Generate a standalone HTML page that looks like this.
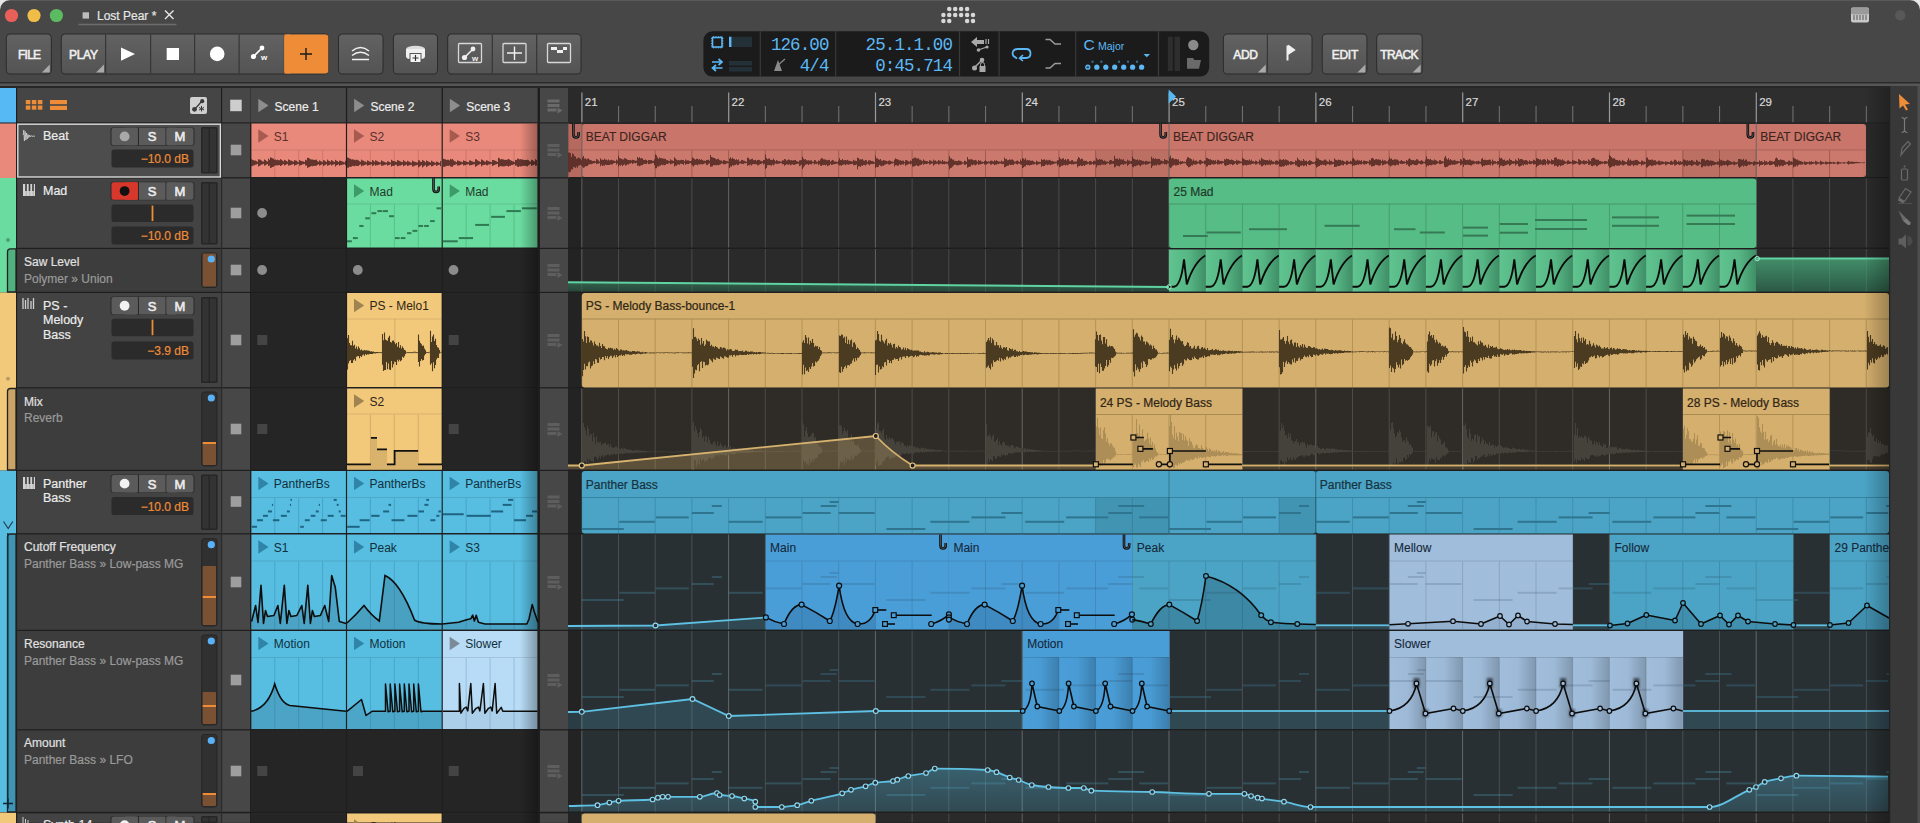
<!DOCTYPE html><html><head><meta charset="utf-8"><style>
html,body{margin:0;padding:0;background:#2a2a2a;width:1920px;height:823px;overflow:hidden}
svg{display:block;font-family:"Liberation Sans", sans-serif}
</style></head><body><svg width="1920" height="823" viewBox="0 0 1920 823">
<rect x="0" y="0" width="1920" height="823" fill="#2a2a2a" />
<rect x="0" y="0" width="1920" height="83" fill="#474747" />
<rect x="0" y="0" width="1920" height="1" fill="#5a5a5a" />
<path d="M0 0 L10 0 A10 10 0 0 0 0 10 Z" fill="#e6e6e6"/><path d="M1920 0 L1910 0 A10 10 0 0 1 1920 10 Z" fill="#e6e6e6"/>
<rect x="0" y="82" width="1920" height="1.5" fill="#2b2b2b" />
<rect x="0" y="83.5" width="1920" height="2.5" fill="#565656" />
<rect x="0" y="86" width="1920" height="2" fill="#262626" />
<circle cx="11.5" cy="15.5" r="6.6" fill="#e9605a"/>
<circle cx="34" cy="15.5" r="6.6" fill="#f1bd49"/>
<circle cx="56.4" cy="15.5" r="6.6" fill="#5bbb60"/>
<rect x="82.6" y="12.3" width="6.4" height="6.3" fill="#bdbdbd" />
<text x="97" y="20.3" font-size="12" fill="#e6e6e6" font-weight="normal" text-anchor="start" stroke="#e6e6e6" stroke-width="0.2" >Lost Pear *</text>
<path d="M165 10.5 L173.5 19 M173.5 10.5 L165 19" stroke="#e8e8e8" stroke-width="1.4"/>
<rect x="78.5" y="23.7" width="98" height="1.6" fill="#6c6c6c" />
<circle cx="949.25" cy="9.06" r="2.25" fill="#d8d8d8"/>
<circle cx="955.2" cy="9.06" r="2.25" fill="#d8d8d8"/>
<circle cx="961.1" cy="9.06" r="2.25" fill="#d8d8d8"/>
<circle cx="967.1" cy="9.06" r="2.25" fill="#d8d8d8"/>
<circle cx="943.4" cy="15" r="2.25" fill="#d8d8d8"/>
<circle cx="949.25" cy="15" r="2.25" fill="#d8d8d8"/>
<circle cx="955.2" cy="15" r="2.25" fill="#d8d8d8"/>
<circle cx="961.1" cy="15" r="2.25" fill="#d8d8d8"/>
<circle cx="967.1" cy="15" r="2.25" fill="#d8d8d8"/>
<circle cx="973" cy="15" r="2.25" fill="#d8d8d8"/>
<circle cx="943.4" cy="20.9" r="2.25" fill="#d8d8d8"/>
<circle cx="949.25" cy="20.9" r="2.25" fill="#d8d8d8"/>
<circle cx="967.1" cy="20.9" r="2.25" fill="#d8d8d8"/>
<circle cx="973" cy="20.9" r="2.25" fill="#d8d8d8"/>
<rect x="1851" y="7.5" width="18" height="15" fill="#c9c9c9" rx="2"/>
<rect x="1851" y="7.5" width="18" height="7" fill="#9a9a9a" rx="2"/>
<rect x="1853.5" y="15" width="1" height="5" fill="#555" />
<rect x="1856.5" y="15" width="1" height="5" fill="#555" />
<rect x="1859.5" y="15" width="1" height="5" fill="#555" />
<rect x="1862.5" y="15" width="1" height="5" fill="#555" />
<rect x="1865.5" y="15" width="1" height="5" fill="#555" />
<circle cx="1900.3" cy="15.2" r="5.2" fill="#585858"/>
<defs>
<linearGradient id="bg" x1="0" y1="0" x2="0" y2="1"><stop offset="0" stop-color="#626262"/><stop offset="1" stop-color="#545454"/></linearGradient>
<linearGradient id="shR" x1="0" y1="0" x2="1" y2="0"><stop offset="0" stop-color="#000" stop-opacity="0"/><stop offset="1" stop-color="#000" stop-opacity="0.32"/></linearGradient>
<linearGradient id="fadeR" x1="0" y1="0" x2="1" y2="0"><stop offset="0" stop-color="#000" stop-opacity="0"/><stop offset="1" stop-color="#000" stop-opacity="0.25"/></linearGradient>
</defs>
<rect x="5.8" y="33.5" width="46.0" height="41" rx="4.5" fill="#2b2b2b"/>
<rect x="6.8" y="34.5" width="44.0" height="39" rx="3.5" fill="url(#bg)"/>
<path d="M49.8 64.5 L49.8 72.5 L41.8 72.5 Z" fill="#a9a9a9"/>
<text x="18" y="58.8" font-size="12" fill="#f0f0f0" font-weight="normal" text-anchor="start" stroke="#f0f0f0" stroke-width="0.55" letter-spacing="-0.75">FILE</text>
<rect x="60.8" y="33.5" width="268.0" height="41" rx="4.5" fill="#2b2b2b"/>
<rect x="61.8" y="34.5" width="266.0" height="39" rx="3.5" fill="url(#bg)"/>
<rect x="105" y="34.5" width="1.2" height="39" fill="#363636" />
<rect x="150" y="34.5" width="1.2" height="39" fill="#363636" />
<rect x="194" y="34.5" width="1.2" height="39" fill="#363636" />
<rect x="238.5" y="34.5" width="1.2" height="39" fill="#363636" />
<rect x="283.8" y="34.5" width="1.2" height="39" fill="#363636" />
<path d="M104.0 64.5 L104.0 72.5 L96.0 72.5 Z" fill="#a9a9a9"/>
<text x="69" y="58.8" font-size="12" fill="#f0f0f0" font-weight="normal" text-anchor="start" stroke="#f0f0f0" stroke-width="0.55" letter-spacing="-0.3">PLAY</text>
<path d="M121 47.4 L135 54.1 L121 60.8 Z" fill="#fff"/>
<rect x="166.7" y="48" width="12.3" height="12" fill="#fff" />
<circle cx="217.2" cy="53.9" r="7.3" fill="#fff"/>
<g transform="translate(251,45)"><path d="M2 12 L11 3" stroke="#fff" stroke-width="1.6"/><circle cx="2.5" cy="11.5" r="2.6" fill="#fff"/><circle cx="11" cy="3" r="2.4" fill="#fff"/><text x="10" y="15" font-size="8" fill="#fff" font-weight="bold">w</text></g>
<rect x="284.3" y="34.5" width="44" height="39" fill="#ee8c37" rx="3"/>
<rect x="284.3" y="34.5" width="6" height="39" fill="#ee8c37" />
<path d="M300 54 L312 54 M306 48 L306 60" stroke="#1a1a1a" stroke-width="1.4"/>
<rect x="338.0" y="33.5" width="45.5" height="41" rx="4.5" fill="#2b2b2b"/>
<rect x="339.0" y="34.5" width="43.5" height="39" rx="3.5" fill="url(#bg)"/>
<path d="M352 51 Q360.5 44 369 51 M352 55.5 Q360.5 49 369 55.5 M352 59.5 L369 59.5" stroke="#f2f2f2" stroke-width="1.5" fill="none"/>
<rect x="392.9" y="33.5" width="45.10000000000002" height="41" rx="4.5" fill="#2b2b2b"/>
<rect x="393.9" y="34.5" width="43.10000000000002" height="39" rx="3.5" fill="url(#bg)"/>
<ellipse cx="415.5" cy="49" rx="9.5" ry="3.2" fill="#dcdcdc"/><path d="M406 49 L406 56 Q406 59 410 59 L421 59 Q425 59 425 56 L425 49" fill="#f0f0f0"/><rect x="410" y="53.5" width="11" height="9" fill="#f5f5f5" stroke="#555" stroke-width="1"/><path d="M412.5 58 L418.5 58 M415.5 55 L415.5 61" stroke="#333" stroke-width="1.2"/>
<rect x="447.2" y="33.5" width="134.3" height="41" rx="4.5" fill="#2b2b2b"/>
<rect x="448.2" y="34.5" width="132.3" height="39" rx="3.5" fill="url(#bg)"/>
<rect x="491.7" y="34.5" width="1.2" height="39" fill="#363636" />
<rect x="536.1" y="34.5" width="1.2" height="39" fill="#363636" />
<rect x="458.5" y="43.5" width="23" height="19" fill="none" stroke="#d8d8d8" stroke-width="1.3" rx="1"/>
<g transform="translate(462,46)"><path d="M2 12 L11 3" stroke="#f0f0f0" stroke-width="1.6"/><circle cx="2.5" cy="11.5" r="2.6" fill="#f0f0f0"/><circle cx="11" cy="3" r="2.4" fill="#f0f0f0"/><text x="10" y="15" font-size="8" fill="#f0f0f0" font-weight="bold">w</text></g>
<rect x="503" y="43.5" width="23" height="19" fill="none" stroke="#d8d8d8" stroke-width="1.3" rx="1"/><path d="M507 53 L522 53 M514.5 46.5 L514.5 60" stroke="#f0f0f0" stroke-width="1.4"/>
<rect x="547.5" y="43.5" width="23" height="19" fill="none" stroke="#d8d8d8" stroke-width="1.3" rx="1"/><path d="M551 47 L557 47 L557 50 L551 50 Z M557 50 L563 50 L563 53 L557 53 Z M563 47 L567 47 L567 50 L563 50 Z" fill="#f0f0f0"/>
<rect x="703.4" y="31.3" width="505.8" height="45.3" rx="9" fill="#1b1b1b"/>
<rect x="759.7" y="31.3" width="1.2" height="45.3" fill="#3a3a3a" />
<rect x="835.1" y="31.3" width="1.2" height="45.3" fill="#3a3a3a" />
<rect x="958.9" y="31.3" width="1.2" height="45.3" fill="#3a3a3a" />
<rect x="998.5" y="31.3" width="1.2" height="45.3" fill="#3a3a3a" />
<rect x="1075.1" y="31.3" width="1.2" height="45.3" fill="#3a3a3a" />
<rect x="1157.9" y="31.3" width="1.2" height="45.3" fill="#3a3a3a" />
<rect x="712.5" y="37.5" width="9.5" height="9.5" fill="none" stroke="#5cb8f5" stroke-width="1.6"/>
<path d="M713.5 36 v1.5 M713.5 47 v1.5 M711 38.5 h1.5 M722 38.5 h1.5" stroke="#5cb8f5" stroke-width="0.8"/>
<path d="M716.0 36 v1.5 M716.0 47 v1.5 M711 41.0 h1.5 M722 41.0 h1.5" stroke="#5cb8f5" stroke-width="0.8"/>
<path d="M718.5 36 v1.5 M718.5 47 v1.5 M711 43.5 h1.5 M722 43.5 h1.5" stroke="#5cb8f5" stroke-width="0.8"/>
<path d="M721.0 36 v1.5 M721.0 47 v1.5 M711 46.0 h1.5 M722 46.0 h1.5" stroke="#5cb8f5" stroke-width="0.8"/>
<rect x="729" y="36.7" width="2.5" height="10.3" fill="#5cb8f5" />
<rect x="732" y="36.7" width="20" height="10.3" fill="#243038" />
<path d="M712 62 L722 62 M718.5 59 L722 62 L718.5 65 M722.5 68 L712.5 68 M716 65 L712.5 68 L716 71" stroke="#5cb8f5" stroke-width="1.7" fill="none"/>
<rect x="729" y="61" width="23" height="4.5" fill="#243038" />
<rect x="729" y="67" width="23" height="4.5" fill="#243038" />
<text x="828.5" y="50.2" font-family='"Liberation Mono", monospace' font-size="17.5" fill="#5cb8f5" text-anchor="end" letter-spacing="-0.9">126.00</text>
<text x="828.5" y="71.2" font-family='"Liberation Mono", monospace' font-size="17.5" fill="#5cb8f5" text-anchor="end" letter-spacing="-0.9">4/4</text>
<text x="952" y="50.2" font-family='"Liberation Mono", monospace' font-size="17.5" fill="#5cb8f5" text-anchor="end" letter-spacing="-0.9">25.1.1.00</text>
<text x="952" y="71.2" font-family='"Liberation Mono", monospace' font-size="17.5" fill="#5cb8f5" text-anchor="end" letter-spacing="-0.9">0:45.714</text>
<path d="M774 71 L778 60 L782 71 Z" fill="#8a8a8a"/><path d="M777 66 L785 59" stroke="#8a8a8a" stroke-width="1.2"/>
<path d="M971 42 L977 37 L977 47 Z M976 40 L984 40 L984 44 L976 44 Z" fill="#a9a9a9"/><path d="M986 39 v5 M988.5 39 v5" stroke="#a9a9a9" stroke-width="1.2"/><path d="M978 50 L987 47" stroke="#a9a9a9" stroke-width="1.2"/><circle cx="978.5" cy="50" r="1.8" fill="#a9a9a9"/><circle cx="987" cy="47" r="1.6" fill="#a9a9a9"/>
<path d="M974 68 L982 60" stroke="#a9a9a9" stroke-width="1.5"/><circle cx="974.5" cy="68" r="2.5" fill="#a9a9a9"/><circle cx="982" cy="60" r="2.3" fill="#a9a9a9"/><rect x="979.5" y="66" width="6" height="6" fill="#a9a9a9"/><path d="M980.5 66 v-1.5 a2 2 0 0 1 4 0 v1.5" stroke="#a9a9a9" fill="none" stroke-width="1"/>
<path d="M1017 58.5 L1013.5 56 Q1012 54 1013 51.5 Q1014 49 1018 49 L1026 49 Q1030.5 49 1030.5 53.5 Q1030.5 58 1026 58 L1020.5 58" stroke="#5cb8f5" stroke-width="1.8" fill="none"/><path d="M1023 55 L1019.5 58.2 L1023 61" stroke="#5cb8f5" stroke-width="1.6" fill="none"/>
<path d="M1045.5 39.5 L1050 39.5 L1055 44 L1061 44" stroke="#9a9a9a" stroke-width="1.5" fill="none"/><path d="M1045.5 68 L1050 68 L1055 63.5 L1061 63.5" stroke="#9a9a9a" stroke-width="1.5" fill="none"/>
<text x="1083.5" y="49.6" font-size="15.5" fill="#5cb8f5">C</text><text x="1098" y="50" font-size="10.5" fill="#5cb8f5">Major</text>
<path d="M1143.5 54 L1150 54 L1146.8 57.2 Z" fill="#5cb8f5"/>
<circle cx="1087.8" cy="67.2" r="2.6" fill="#5cb8f5"/>
<circle cx="1096.8" cy="67.2" r="2.6" fill="#5cb8f5"/>
<circle cx="1105.8" cy="67.2" r="2.6" fill="#5cb8f5"/>
<circle cx="1114.7" cy="67.2" r="2.6" fill="#5cb8f5"/>
<circle cx="1123.7" cy="67.2" r="2.6" fill="#5cb8f5"/>
<circle cx="1132.6" cy="67.2" r="2.6" fill="#5cb8f5"/>
<circle cx="1141.6" cy="67.2" r="2.6" fill="#5cb8f5"/>
<circle cx="1087.8" cy="67.2" r="1.3" fill="#2a4f66"/>
<circle cx="1092.5" cy="61.7" r="1.2" fill="#2f6a90"/>
<circle cx="1101.4" cy="61.7" r="1.2" fill="#2f6a90"/>
<circle cx="1119" cy="61.7" r="1.2" fill="#2f6a90"/>
<circle cx="1128" cy="61.7" r="1.2" fill="#2f6a90"/>
<circle cx="1137" cy="61.7" r="1.2" fill="#2f6a90"/>
<rect x="1167.8" y="36.7" width="5" height="34.3" fill="#2e2e2e" />
<rect x="1174.5" y="36.7" width="5.5" height="34.3" fill="#2e2e2e" />
<circle cx="1193.3" cy="45" r="5.2" fill="#8a8a8a"/><path d="M1187 58 L1193 58 L1194.5 60 L1201 60 L1199 68.7 L1187 68.7 Z" fill="#6a6a6a"/>
<rect x="1222.9" y="33.5" width="89.59999999999991" height="41" rx="4.5" fill="#2b2b2b"/>
<rect x="1223.9" y="34.5" width="87.59999999999991" height="39" rx="3.5" fill="url(#bg)"/>
<rect x="1266.8" y="34.5" width="1.2" height="39" fill="#363636" />
<path d="M1265.8 64.5 L1265.8 72.5 L1257.8 72.5 Z" fill="#a9a9a9"/>
<text x="1233.2" y="58.6" font-size="12" fill="#f0f0f0" font-weight="normal" text-anchor="start" stroke="#f0f0f0" stroke-width="0.55" letter-spacing="-0.3">ADD</text>
<path d="M1287.5 45.5 L1287.5 60.5 M1288 45.5 L1294 50 L1288 54" stroke="#f0f0f0" stroke-width="2" fill="#f0f0f0"/>
<rect x="1321.8" y="33.5" width="45.600000000000136" height="41" rx="4.5" fill="#2b2b2b"/>
<rect x="1322.8" y="34.5" width="43.600000000000136" height="39" rx="3.5" fill="url(#bg)"/>
<path d="M1365.4 64.5 L1365.4 72.5 L1357.4 72.5 Z" fill="#a9a9a9"/>
<text x="1331.8" y="58.6" font-size="12" fill="#f0f0f0" font-weight="normal" text-anchor="start" stroke="#f0f0f0" stroke-width="0.55" letter-spacing="-0.3">EDIT</text>
<rect x="1376.2" y="33.5" width="46.5" height="41" rx="4.5" fill="#2b2b2b"/>
<rect x="1377.2" y="34.5" width="44.5" height="39" rx="3.5" fill="url(#bg)"/>
<path d="M1420.7 64.5 L1420.7 72.5 L1412.7 72.5 Z" fill="#a9a9a9"/>
<text x="1380.2" y="58.6" font-size="12" fill="#f0f0f0" font-weight="normal" text-anchor="start" stroke="#f0f0f0" stroke-width="0.55" letter-spacing="-0.6">TRACK</text>
<rect x="0" y="88" width="1920" height="35.5" fill="#2e2e2e" />
<rect x="0" y="88" width="16" height="35" fill="#56b9f4" />
<rect x="17" y="88" width="204" height="34.5" fill="#454545" />
<rect x="25.8" y="100" width="4.6" height="4.2" fill="#ee8c37" />
<rect x="31.8" y="100" width="4.6" height="4.2" fill="#ee8c37" />
<rect x="37.8" y="100" width="4.6" height="4.2" fill="#ee8c37" />
<rect x="25.8" y="105.5" width="4.6" height="4.2" fill="#ee8c37" />
<rect x="31.8" y="105.5" width="4.6" height="4.2" fill="#ee8c37" />
<rect x="37.8" y="105.5" width="4.6" height="4.2" fill="#ee8c37" />
<rect x="50" y="100" width="17" height="4.2" fill="#ee8c37" />
<rect x="50" y="105.8" width="17" height="4.2" fill="#ee8c37" />
<rect x="190" y="97" width="17" height="17" rx="2" fill="#cfcfcf"/>
<path d="M194.5 109.5 L202 101" stroke="#3a3a3a" stroke-width="1.2"/><circle cx="194.5" cy="109.3" r="2.4" fill="#3a3a3a"/><circle cx="202.2" cy="101.2" r="2.1" fill="#3a3a3a"/><path d="M201.5 106 v5.5 M199 107.5 l5 2.5 M199 110 l5 -2.5" stroke="#3a3a3a" stroke-width="1"/>
<rect x="221" y="88" width="1.2" height="35" fill="#1e1e1e" />
<rect x="222.2" y="88" width="28" height="34.5" fill="#474747" />
<rect x="230.2" y="99.7" width="11.5" height="11.5" fill="#cdcdcd" />
<rect x="250.8" y="88" width="95" height="34.5" fill="#474747" />
<path d="M258.3 98.8 L268.5 105.5 L258.3 112.2 Z" fill="#8d8d8d"/>
<text x="274.6" y="111" font-size="12" fill="#ececec" font-weight="normal" text-anchor="start" stroke="#ececec" stroke-width="0.2" >Scene 1</text>
<rect x="346.6" y="88" width="95" height="34.5" fill="#474747" />
<path d="M354.1 98.8 L364.3 105.5 L354.1 112.2 Z" fill="#8d8d8d"/>
<text x="370.4" y="111" font-size="12" fill="#ececec" font-weight="normal" text-anchor="start" stroke="#ececec" stroke-width="0.2" >Scene 2</text>
<rect x="346" y="88" width="1.2" height="35" fill="#1e1e1e" />
<rect x="442.4" y="88" width="95" height="34.5" fill="#474747" />
<path d="M449.9 98.8 L460.09999999999997 105.5 L449.9 112.2 Z" fill="#8d8d8d"/>
<text x="466.2" y="111" font-size="12" fill="#ececec" font-weight="normal" text-anchor="start" stroke="#ececec" stroke-width="0.2" >Scene 3</text>
<rect x="441.8" y="88" width="1.2" height="35" fill="#1e1e1e" />
<rect x="538" y="88" width="2" height="35" fill="#1e1e1e" />
<rect x="540" y="88" width="28" height="34.5" fill="#474747" />
<path d="M547.5 101.0 h12 M547.5 105.5 h12 M547.5 110.0 h9" stroke="#6a6a6a" stroke-width="3"/><path d="M557.5 107.5 L562.5 110.5 L557.5 113.5 Z" fill="#6a6a6a"/>
<rect x="568" y="88" width="1321" height="34.5" fill="#2e2e2e" />
<rect x="568" y="88" width="13.8" height="34.5" fill="#2a2a2a" />
<rect x="581.3" y="92.5" width="1.2" height="30" fill="#9a9a9a" />
<text x="584.8" y="106.3" font-size="11.5" fill="#d8d8d8" font-weight="normal" text-anchor="start" stroke="#d8d8d8" stroke-width="0.2" >21</text>
<rect x="618" y="106" width="1.1" height="16.5" fill="#6e6e6e" />
<rect x="654.7" y="106" width="1.1" height="16.5" fill="#6e6e6e" />
<rect x="691.4" y="106" width="1.1" height="16.5" fill="#6e6e6e" />
<rect x="728.1" y="92.5" width="1.2" height="30" fill="#9a9a9a" />
<text x="731.6" y="106.3" font-size="11.5" fill="#d8d8d8" font-weight="normal" text-anchor="start" stroke="#d8d8d8" stroke-width="0.2" >22</text>
<rect x="764.8" y="106" width="1.1" height="16.5" fill="#6e6e6e" />
<rect x="801.5" y="106" width="1.1" height="16.5" fill="#6e6e6e" />
<rect x="838.2" y="106" width="1.1" height="16.5" fill="#6e6e6e" />
<rect x="874.9" y="92.5" width="1.2" height="30" fill="#9a9a9a" />
<text x="878.4" y="106.3" font-size="11.5" fill="#d8d8d8" font-weight="normal" text-anchor="start" stroke="#d8d8d8" stroke-width="0.2" >23</text>
<rect x="911.6" y="106" width="1.1" height="16.5" fill="#6e6e6e" />
<rect x="948.3" y="106" width="1.1" height="16.5" fill="#6e6e6e" />
<rect x="985" y="106" width="1.1" height="16.5" fill="#6e6e6e" />
<rect x="1021.7" y="92.5" width="1.2" height="30" fill="#9a9a9a" />
<text x="1025.2" y="106.3" font-size="11.5" fill="#d8d8d8" font-weight="normal" text-anchor="start" stroke="#d8d8d8" stroke-width="0.2" >24</text>
<rect x="1058.4" y="106" width="1.1" height="16.5" fill="#6e6e6e" />
<rect x="1095.1" y="106" width="1.1" height="16.5" fill="#6e6e6e" />
<rect x="1131.8" y="106" width="1.1" height="16.5" fill="#6e6e6e" />
<rect x="1168.5" y="92.5" width="1.2" height="30" fill="#9a9a9a" />
<text x="1172" y="106.3" font-size="11.5" fill="#d8d8d8" font-weight="normal" text-anchor="start" stroke="#d8d8d8" stroke-width="0.2" >25</text>
<rect x="1205.2" y="106" width="1.1" height="16.5" fill="#6e6e6e" />
<rect x="1241.9" y="106" width="1.1" height="16.5" fill="#6e6e6e" />
<rect x="1278.6" y="106" width="1.1" height="16.5" fill="#6e6e6e" />
<rect x="1315.3" y="92.5" width="1.2" height="30" fill="#9a9a9a" />
<text x="1318.8" y="106.3" font-size="11.5" fill="#d8d8d8" font-weight="normal" text-anchor="start" stroke="#d8d8d8" stroke-width="0.2" >26</text>
<rect x="1352" y="106" width="1.1" height="16.5" fill="#6e6e6e" />
<rect x="1388.7" y="106" width="1.1" height="16.5" fill="#6e6e6e" />
<rect x="1425.4" y="106" width="1.1" height="16.5" fill="#6e6e6e" />
<rect x="1462.1" y="92.5" width="1.2" height="30" fill="#9a9a9a" />
<text x="1465.6" y="106.3" font-size="11.5" fill="#d8d8d8" font-weight="normal" text-anchor="start" stroke="#d8d8d8" stroke-width="0.2" >27</text>
<rect x="1498.8" y="106" width="1.1" height="16.5" fill="#6e6e6e" />
<rect x="1535.5" y="106" width="1.1" height="16.5" fill="#6e6e6e" />
<rect x="1572.2" y="106" width="1.1" height="16.5" fill="#6e6e6e" />
<rect x="1608.9" y="92.5" width="1.2" height="30" fill="#9a9a9a" />
<text x="1612.4" y="106.3" font-size="11.5" fill="#d8d8d8" font-weight="normal" text-anchor="start" stroke="#d8d8d8" stroke-width="0.2" >28</text>
<rect x="1645.6" y="106" width="1.1" height="16.5" fill="#6e6e6e" />
<rect x="1682.3" y="106" width="1.1" height="16.5" fill="#6e6e6e" />
<rect x="1719" y="106" width="1.1" height="16.5" fill="#6e6e6e" />
<rect x="1755.7" y="92.5" width="1.2" height="30" fill="#9a9a9a" />
<text x="1759.2" y="106.3" font-size="11.5" fill="#d8d8d8" font-weight="normal" text-anchor="start" stroke="#d8d8d8" stroke-width="0.2" >29</text>
<rect x="1792.4" y="106" width="1.1" height="16.5" fill="#6e6e6e" />
<rect x="1829.1" y="106" width="1.1" height="16.5" fill="#6e6e6e" />
<rect x="1865.8" y="106" width="1.1" height="16.5" fill="#6e6e6e" />
<rect x="1889" y="86" width="31" height="737" fill="#383838" />
<rect x="1917.5" y="86" width="2.5" height="737" fill="#555" />
<rect x="0" y="122.5" width="1889" height="1" fill="#1e1e1e" />
<rect x="0" y="123.5" width="16" height="54.5" fill="#e8897b" />
<rect x="0" y="178" width="16" height="114.5" fill="#6bdca0" />
<rect x="0" y="292.5" width="16" height="178" fill="#f2c87b" />
<rect x="0" y="470.5" width="16" height="341.5" fill="#57bde1" />
<rect x="0" y="812.5" width="16" height="10.5" fill="#f2c87b" />
<rect x="16" y="88" width="1.2" height="735" fill="#1e1e1e" />
<path d="M16 248.8 L10.5 248.8 Q7.5 248.8 7.5 251.8 L7.5 292 L16 292 Z" fill="#52b07e" stroke="#222" stroke-width="1.3"/>
<path d="M16 388.5 L10.5 388.5 Q7.5 388.5 7.5 391.5 L7.5 470 L16 470 Z" fill="#c9a466" stroke="#222" stroke-width="1.3"/>
<path d="M16 534 L10.5 534 Q7.5 534 7.5 537 L7.5 812 L16 812 Z" fill="#3f93b3" stroke="#222" stroke-width="1.3"/>
<circle cx="8" cy="240" r="2" fill="#4fa276"/>
<circle cx="8" cy="378.8" r="2" fill="#b99a63"/>
<path d="M3.5 521.5 L8.2 528.5 L12.8 521.5" stroke="#1f3f4d" stroke-width="1.2" fill="none"/>
<path d="M3 803.5 h10 M8 798.5 v10" stroke="#0f2530" stroke-width="1.5"/>
<line x1="7.8" y1="533" x2="7.8" y2="800" stroke="#13303c" stroke-width="1.3" />
<rect x="17.2" y="123.5" width="203.8" height="54" fill="#4d4d4d" />
<rect x="17.2" y="177.3" width="203.8" height="1.2" fill="#1e1e1e" />
<rect x="17.8" y="124.2" width="202.6" height="52.8" fill="none" stroke="#d9d9d9" stroke-width="1.4"/>
<path d="M23.2 135 L23.8 130 L24.4 141 L25.2 131.5 L25.9 140 L26.6 133 L27.3 139 L28 134.5 L28.7 137.5 L29.5 135 L30.3 137 L31.2 135.5 L32 136.5 L33 136 L35 136.3" stroke="#d0d0d0" stroke-width="0.8" fill="none"/>
<text x="43" y="140" font-size="12.5" fill="#ececec" font-weight="normal" text-anchor="start" stroke="#ececec" stroke-width="0.2" >Beat</text>
<rect x="110.5" y="127.2" width="84" height="18.5" rx="3" fill="#2a2a2a"/>
<rect x="111.5" y="127.7" width="26.3" height="17.5" rx="2.5" fill="#5b5b5b"/>
<rect x="125" y="127.7" width="12.8" height="17.5" fill="#5b5b5b" />
<rect x="139" y="127.7" width="26.5" height="17.5" fill="#5b5b5b" />
<rect x="166.5" y="127.7" width="27" height="17.5" rx="2.5" fill="#5b5b5b"/>
<rect x="166.5" y="127.7" width="10" height="17.5" fill="#5b5b5b" />
<circle cx="124.6" cy="136.45" r="4.9" fill="#a8a8a8"/>
<text x="152.2" y="141.4" font-size="13" fill="#ececec" font-weight="normal" text-anchor="middle" stroke="#ececec" stroke-width="0.6" >S</text>
<text x="180" y="141.4" font-size="13" fill="#ececec" font-weight="normal" text-anchor="middle" stroke="#ececec" stroke-width="0.6" >M</text>
<rect x="111.5" y="149.5" width="82" height="18" rx="2.5" fill="#2b2b2b"/>
<text x="189" y="163" font-size="12" fill="#ee8c37" font-weight="normal" text-anchor="end" stroke="#ee8c37" stroke-width="0.2" >−10.0 dB</text>
<rect x="201" y="127" width="16.6" height="46.599999999999994" rx="1.5" fill="#262626"/>
<rect x="202.5" y="128.5" width="6" height="43.6" fill="#333333" />
<rect x="210" y="128.5" width="6" height="43.6" fill="#333333" />
<rect x="17.2" y="178.5" width="203.8" height="69.5" fill="#434343" />
<rect x="17.2" y="247.8" width="203.8" height="1.2" fill="#1e1e1e" />
<rect x="23" y="184" width="12" height="12" fill="#d2d2d2"/><path d="M26 184 v7 M29.5 184 v7 M33 184 v7" stroke="#3a3a3a" stroke-width="1.6"/><path d="M26.2 191 v5 M29.7 191 v5 M33.2 191 v5" stroke="#9a9a9a" stroke-width="0.6"/>
<text x="43" y="194.6" font-size="12.5" fill="#ececec" font-weight="normal" text-anchor="start" stroke="#ececec" stroke-width="0.2" >Mad</text>
<rect x="110.5" y="181.8" width="84" height="18.5" rx="3" fill="#2a2a2a"/>
<rect x="111.5" y="182.3" width="26.3" height="17.5" rx="2.5" fill="#d8382b"/>
<rect x="125" y="182.3" width="12.8" height="17.5" fill="#d8382b" />
<rect x="139" y="182.3" width="26.5" height="17.5" fill="#5b5b5b" />
<rect x="166.5" y="182.3" width="27" height="17.5" rx="2.5" fill="#5b5b5b"/>
<rect x="166.5" y="182.3" width="10" height="17.5" fill="#5b5b5b" />
<circle cx="124.6" cy="191.05" r="4.9" fill="#111"/>
<text x="152.2" y="196" font-size="13" fill="#ececec" font-weight="normal" text-anchor="middle" stroke="#ececec" stroke-width="0.6" >S</text>
<text x="180" y="196" font-size="13" fill="#ececec" font-weight="normal" text-anchor="middle" stroke="#ececec" stroke-width="0.6" >M</text>
<rect x="111.5" y="204.6" width="82" height="17.5" rx="2.5" fill="#2b2b2b"/>
<rect x="151.6" y="205.6" width="1.8" height="15.5" fill="#ee8c37" />
<rect x="111.5" y="226.5" width="82" height="18" rx="2.5" fill="#2b2b2b"/>
<text x="189" y="240" font-size="12" fill="#ee8c37" font-weight="normal" text-anchor="end" stroke="#ee8c37" stroke-width="0.2" >−10.0 dB</text>
<rect x="201" y="182" width="16.6" height="62.5" rx="1.5" fill="#262626"/>
<rect x="202.5" y="183.5" width="6" height="59.5" fill="#333333" />
<rect x="210" y="183.5" width="6" height="59.5" fill="#333333" />
<rect x="17.2" y="249" width="203.8" height="43" fill="#3d3d3d" />
<rect x="17.2" y="291.8" width="203.8" height="1.2" fill="#1e1e1e" />
<text x="24" y="266.2" font-size="12" fill="#e0e0e0" font-weight="normal" text-anchor="start" stroke="#e0e0e0" stroke-width="0.2" >Saw Level</text>
<text x="24" y="282.8" font-size="12" fill="#9a9a9a" font-weight="normal" text-anchor="start" stroke="#9a9a9a" stroke-width="0.2" >Polymer » Union</text>
<rect x="201.7" y="253" width="15.3" height="34.5" rx="2.5" fill="#303030" stroke="#252525" stroke-width="1"/>
<rect x="202.7" y="253.5" width="13.3" height="33.0" rx="1" fill="#7a5233"/>
<circle cx="211.3" cy="259" r="3.6" fill="#59b2f7"/>
<rect x="17.2" y="293" width="203.8" height="94.5" fill="#434343" />
<rect x="17.2" y="387.3" width="203.8" height="1.2" fill="#1e1e1e" />
<path d="M23 298 v11 M25.5 300 v9 M28 298 v11 M31 301 v8 M33.5 298 v11" stroke="#cfcfcf" stroke-width="1.3"/>
<text x="43" y="310" font-size="12.5" fill="#ececec" font-weight="normal" text-anchor="start" stroke="#ececec" stroke-width="0.2" >PS -</text>
<text x="43" y="324.4" font-size="12.5" fill="#ececec" font-weight="normal" text-anchor="start" stroke="#ececec" stroke-width="0.2" >Melody</text>
<text x="43" y="338.6" font-size="12.5" fill="#ececec" font-weight="normal" text-anchor="start" stroke="#ececec" stroke-width="0.2" >Bass</text>
<rect x="110.5" y="296.5" width="84" height="18.5" rx="3" fill="#2a2a2a"/>
<rect x="111.5" y="297" width="26.3" height="17.5" rx="2.5" fill="#5b5b5b"/>
<rect x="125" y="297" width="12.8" height="17.5" fill="#5b5b5b" />
<rect x="139" y="297" width="26.5" height="17.5" fill="#5b5b5b" />
<rect x="166.5" y="297" width="27" height="17.5" rx="2.5" fill="#5b5b5b"/>
<rect x="166.5" y="297" width="10" height="17.5" fill="#5b5b5b" />
<circle cx="124.6" cy="305.75" r="4.9" fill="#f2f2f2"/>
<text x="152.2" y="310.7" font-size="13" fill="#ececec" font-weight="normal" text-anchor="middle" stroke="#ececec" stroke-width="0.6" >S</text>
<text x="180" y="310.7" font-size="13" fill="#ececec" font-weight="normal" text-anchor="middle" stroke="#ececec" stroke-width="0.6" >M</text>
<rect x="111.5" y="318.7" width="82" height="17.5" rx="2.5" fill="#2b2b2b"/>
<rect x="151.6" y="319.7" width="1.8" height="15.5" fill="#ee8c37" />
<rect x="111.5" y="341.5" width="82" height="18" rx="2.5" fill="#2b2b2b"/>
<text x="189" y="355" font-size="12" fill="#ee8c37" font-weight="normal" text-anchor="end" stroke="#ee8c37" stroke-width="0.2" >−3.9 dB</text>
<rect x="201" y="297" width="16.6" height="86" rx="1.5" fill="#262626"/>
<rect x="202.5" y="298.5" width="6" height="83" fill="#333333" />
<rect x="210" y="298.5" width="6" height="83" fill="#333333" />
<rect x="17.2" y="388.5" width="203.8" height="81.5" fill="#3d3d3d" />
<rect x="17.2" y="469.8" width="203.8" height="1.2" fill="#1e1e1e" />
<text x="24" y="405.6" font-size="12" fill="#e0e0e0" font-weight="normal" text-anchor="start" stroke="#e0e0e0" stroke-width="0.2" >Mix</text>
<text x="24" y="422.2" font-size="12" fill="#9a9a9a" font-weight="normal" text-anchor="start" stroke="#9a9a9a" stroke-width="0.2" >Reverb</text>
<rect x="201.7" y="392" width="15.3" height="74" rx="2.5" fill="#303030" stroke="#252525" stroke-width="1"/>
<rect x="202.7" y="443" width="13.3" height="22" rx="1" fill="#7a5233"/>
<rect x="202.7" y="442" width="13.3" height="2" fill="#ee8c37" />
<circle cx="211.3" cy="398" r="3.6" fill="#59b2f7"/>
<rect x="17.2" y="471" width="203.8" height="62.5" fill="#434343" />
<rect x="17.2" y="533.3" width="203.8" height="1.2" fill="#1e1e1e" />
<rect x="23" y="477" width="12" height="12" fill="#d2d2d2"/><path d="M26 477 v7 M29.5 477 v7 M33 477 v7" stroke="#3a3a3a" stroke-width="1.6"/><path d="M26.2 484 v5 M29.7 484 v5 M33.2 484 v5" stroke="#9a9a9a" stroke-width="0.6"/>
<text x="43" y="488" font-size="12.5" fill="#ececec" font-weight="normal" text-anchor="start" stroke="#ececec" stroke-width="0.2" >Panther</text>
<text x="43" y="502" font-size="12.5" fill="#ececec" font-weight="normal" text-anchor="start" stroke="#ececec" stroke-width="0.2" >Bass</text>
<rect x="110.5" y="474.4" width="84" height="18.5" rx="3" fill="#2a2a2a"/>
<rect x="111.5" y="474.9" width="26.3" height="17.5" rx="2.5" fill="#5b5b5b"/>
<rect x="125" y="474.9" width="12.8" height="17.5" fill="#5b5b5b" />
<rect x="139" y="474.9" width="26.5" height="17.5" fill="#5b5b5b" />
<rect x="166.5" y="474.9" width="27" height="17.5" rx="2.5" fill="#5b5b5b"/>
<rect x="166.5" y="474.9" width="10" height="17.5" fill="#5b5b5b" />
<circle cx="124.6" cy="483.65" r="4.9" fill="#f2f2f2"/>
<text x="152.2" y="488.6" font-size="13" fill="#ececec" font-weight="normal" text-anchor="middle" stroke="#ececec" stroke-width="0.6" >S</text>
<text x="180" y="488.6" font-size="13" fill="#ececec" font-weight="normal" text-anchor="middle" stroke="#ececec" stroke-width="0.6" >M</text>
<rect x="111.5" y="497" width="82" height="18" rx="2.5" fill="#2b2b2b"/>
<text x="189" y="510.5" font-size="12" fill="#ee8c37" font-weight="normal" text-anchor="end" stroke="#ee8c37" stroke-width="0.2" >−10.0 dB</text>
<rect x="201" y="474.4" width="16.6" height="55.60000000000002" rx="1.5" fill="#262626"/>
<rect x="202.5" y="475.9" width="6" height="52.6" fill="#333333" />
<rect x="210" y="475.9" width="6" height="52.6" fill="#333333" />
<rect x="17.2" y="534.5" width="203.8" height="95.5" fill="#3d3d3d" />
<rect x="17.2" y="629.8" width="203.8" height="1.2" fill="#1e1e1e" />
<text x="24" y="551.4" font-size="12" fill="#e0e0e0" font-weight="normal" text-anchor="start" stroke="#e0e0e0" stroke-width="0.2" >Cutoff Frequency</text>
<text x="24" y="568.2" font-size="12" fill="#9a9a9a" font-weight="normal" text-anchor="start" stroke="#9a9a9a" stroke-width="0.2" >Panther Bass » Low-pass MG</text>
<rect x="201.7" y="538.7" width="15.3" height="87.29999999999995" rx="2.5" fill="#303030" stroke="#252525" stroke-width="1"/>
<rect x="202.7" y="566" width="13.3" height="59" rx="1" fill="#7a5233"/>
<rect x="202.7" y="596" width="13.3" height="2" fill="#ee8c37" />
<circle cx="211.3" cy="544.7" r="3.6" fill="#59b2f7"/>
<rect x="17.2" y="631" width="203.8" height="98.5" fill="#3d3d3d" />
<rect x="17.2" y="729.3" width="203.8" height="1.2" fill="#1e1e1e" />
<text x="24" y="648.2" font-size="12" fill="#e0e0e0" font-weight="normal" text-anchor="start" stroke="#e0e0e0" stroke-width="0.2" >Resonance</text>
<text x="24" y="665" font-size="12" fill="#9a9a9a" font-weight="normal" text-anchor="start" stroke="#9a9a9a" stroke-width="0.2" >Panther Bass » Low-pass MG</text>
<rect x="201.7" y="635" width="15.3" height="90" rx="2.5" fill="#303030" stroke="#252525" stroke-width="1"/>
<rect x="202.7" y="692" width="13.3" height="32" rx="1" fill="#7a5233"/>
<rect x="202.7" y="705" width="13.3" height="2" fill="#ee8c37" />
<circle cx="211.3" cy="641" r="3.6" fill="#59b2f7"/>
<rect x="17.2" y="730.5" width="203.8" height="81.5" fill="#3d3d3d" />
<rect x="17.2" y="811.8" width="203.8" height="1.2" fill="#1e1e1e" />
<text x="24" y="747.2" font-size="12" fill="#e0e0e0" font-weight="normal" text-anchor="start" stroke="#e0e0e0" stroke-width="0.2" >Amount</text>
<text x="24" y="764" font-size="12" fill="#9a9a9a" font-weight="normal" text-anchor="start" stroke="#9a9a9a" stroke-width="0.2" >Panther Bass » LFO</text>
<rect x="201.7" y="734.5" width="15.3" height="72.5" rx="2.5" fill="#303030" stroke="#252525" stroke-width="1"/>
<rect x="202.7" y="793.5" width="13.3" height="12.5" rx="1" fill="#7a5233"/>
<rect x="202.7" y="793" width="13.3" height="2" fill="#ee8c37" />
<circle cx="211.3" cy="740.5" r="3.6" fill="#59b2f7"/>
<rect x="17.2" y="813.5" width="203.8" height="9.5" fill="#434343" />
<rect x="17.2" y="822.8" width="203.8" height="1.2" fill="#1e1e1e" />
<rect x="110.5" y="816.0" width="84" height="18.5" rx="3" fill="#2a2a2a"/>
<rect x="111.5" y="816.5" width="26.3" height="17.5" rx="2.5" fill="#5b5b5b"/>
<rect x="125" y="816.5" width="12.8" height="17.5" fill="#5b5b5b" />
<rect x="139" y="816.5" width="26.5" height="17.5" fill="#5b5b5b" />
<rect x="166.5" y="816.5" width="27" height="17.5" rx="2.5" fill="#5b5b5b"/>
<rect x="166.5" y="816.5" width="10" height="17.5" fill="#5b5b5b" />
<circle cx="124.6" cy="825.25" r="4.9" fill="#f2f2f2"/>
<text x="152.2" y="830.2" font-size="13" fill="#ececec" font-weight="normal" text-anchor="middle" stroke="#ececec" stroke-width="0.6" >S</text>
<text x="180" y="830.2" font-size="13" fill="#ececec" font-weight="normal" text-anchor="middle" stroke="#ececec" stroke-width="0.6" >M</text>
<rect x="201" y="816" width="16.6" height="7" rx="1.5" fill="#262626"/>
<rect x="202.5" y="817.5" width="6" height="4" fill="#333333" />
<rect x="210" y="817.5" width="6" height="4" fill="#333333" />
<path d="M23 817 v6 M25.5 819 v4 M28 820 v3" stroke="#cfcfcf" stroke-width="1"/>
<text x="43" y="829" font-size="12.5" fill="#ececec" font-weight="normal" text-anchor="start" stroke="#ececec" stroke-width="0.2" >Synth 14</text>
<rect x="222.2" y="123.5" width="28" height="54" fill="#474747" />
<rect x="222.2" y="177.3" width="28" height="1.2" fill="#1e1e1e" />
<rect x="222.2" y="178.5" width="28" height="69.5" fill="#474747" />
<rect x="222.2" y="247.8" width="28" height="1.2" fill="#1e1e1e" />
<rect x="222.2" y="249" width="28" height="43" fill="#474747" />
<rect x="222.2" y="291.8" width="28" height="1.2" fill="#1e1e1e" />
<rect x="222.2" y="293" width="28" height="94.5" fill="#474747" />
<rect x="222.2" y="387.3" width="28" height="1.2" fill="#1e1e1e" />
<rect x="222.2" y="388.5" width="28" height="81.5" fill="#474747" />
<rect x="222.2" y="469.8" width="28" height="1.2" fill="#1e1e1e" />
<rect x="222.2" y="471" width="28" height="62.5" fill="#474747" />
<rect x="222.2" y="533.3" width="28" height="1.2" fill="#1e1e1e" />
<rect x="222.2" y="534.5" width="28" height="95.5" fill="#474747" />
<rect x="222.2" y="629.8" width="28" height="1.2" fill="#1e1e1e" />
<rect x="222.2" y="631" width="28" height="98.5" fill="#474747" />
<rect x="222.2" y="729.3" width="28" height="1.2" fill="#1e1e1e" />
<rect x="222.2" y="730.5" width="28" height="81.5" fill="#474747" />
<rect x="222.2" y="811.8" width="28" height="1.2" fill="#1e1e1e" />
<rect x="222.2" y="813.5" width="28" height="9.5" fill="#474747" />
<rect x="222.2" y="822.8" width="28" height="1.2" fill="#1e1e1e" />
<rect x="230.7" y="144.7" width="10.6" height="10.6" fill="#9e9e9e" />
<rect x="230.7" y="207.7" width="10.6" height="10.6" fill="#9e9e9e" />
<rect x="230.7" y="264.7" width="10.6" height="10.6" fill="#9e9e9e" />
<rect x="230.7" y="334.7" width="10.6" height="10.6" fill="#9e9e9e" />
<rect x="230.7" y="423.7" width="10.6" height="10.6" fill="#9e9e9e" />
<rect x="230.7" y="496.2" width="10.6" height="10.6" fill="#9e9e9e" />
<rect x="230.7" y="576.7" width="10.6" height="10.6" fill="#9e9e9e" />
<rect x="230.7" y="674.7" width="10.6" height="10.6" fill="#9e9e9e" />
<rect x="230.7" y="765.7" width="10.6" height="10.6" fill="#9e9e9e" />
<rect x="250" y="123.5" width="1.2" height="700" fill="#1e1e1e" />
<rect x="250.8" y="123.5" width="287.2" height="54" fill="#252525" />
<rect x="250.8" y="177.3" width="287.2" height="1.2" fill="#1e1e1e" />
<rect x="250.8" y="178.5" width="287.2" height="69.5" fill="#252525" />
<rect x="250.8" y="247.8" width="287.2" height="1.2" fill="#1e1e1e" />
<rect x="250.8" y="249" width="287.2" height="43" fill="#252525" />
<rect x="250.8" y="291.8" width="287.2" height="1.2" fill="#1e1e1e" />
<rect x="250.8" y="293" width="287.2" height="94.5" fill="#252525" />
<rect x="250.8" y="387.3" width="287.2" height="1.2" fill="#1e1e1e" />
<rect x="250.8" y="388.5" width="287.2" height="81.5" fill="#252525" />
<rect x="250.8" y="469.8" width="287.2" height="1.2" fill="#1e1e1e" />
<rect x="250.8" y="471" width="287.2" height="62.5" fill="#252525" />
<rect x="250.8" y="533.3" width="287.2" height="1.2" fill="#1e1e1e" />
<rect x="250.8" y="534.5" width="287.2" height="95.5" fill="#252525" />
<rect x="250.8" y="629.8" width="287.2" height="1.2" fill="#1e1e1e" />
<rect x="250.8" y="631" width="287.2" height="98.5" fill="#252525" />
<rect x="250.8" y="729.3" width="287.2" height="1.2" fill="#1e1e1e" />
<rect x="250.8" y="730.5" width="287.2" height="81.5" fill="#252525" />
<rect x="250.8" y="811.8" width="287.2" height="1.2" fill="#1e1e1e" />
<rect x="250.8" y="813.5" width="287.2" height="9.5" fill="#252525" />
<rect x="250.8" y="822.8" width="287.2" height="1.2" fill="#1e1e1e" />
<rect x="345.9" y="123.5" width="1.2" height="700" fill="#1e1e1e" />
<rect x="441.6" y="123.5" width="1.2" height="700" fill="#1e1e1e" />
<rect x="538" y="123.5" width="2" height="700" fill="#1e1e1e" />
<rect x="540" y="123.5" width="28" height="54" fill="#474747" />
<rect x="540" y="177.3" width="28" height="1.2" fill="#1e1e1e" />
<rect x="540" y="178.5" width="28" height="69.5" fill="#474747" />
<rect x="540" y="247.8" width="28" height="1.2" fill="#1e1e1e" />
<rect x="540" y="249" width="28" height="43" fill="#474747" />
<rect x="540" y="291.8" width="28" height="1.2" fill="#1e1e1e" />
<rect x="540" y="293" width="28" height="94.5" fill="#474747" />
<rect x="540" y="387.3" width="28" height="1.2" fill="#1e1e1e" />
<rect x="540" y="388.5" width="28" height="81.5" fill="#474747" />
<rect x="540" y="469.8" width="28" height="1.2" fill="#1e1e1e" />
<rect x="540" y="471" width="28" height="62.5" fill="#474747" />
<rect x="540" y="533.3" width="28" height="1.2" fill="#1e1e1e" />
<rect x="540" y="534.5" width="28" height="95.5" fill="#474747" />
<rect x="540" y="629.8" width="28" height="1.2" fill="#1e1e1e" />
<rect x="540" y="631" width="28" height="98.5" fill="#474747" />
<rect x="540" y="729.3" width="28" height="1.2" fill="#1e1e1e" />
<rect x="540" y="730.5" width="28" height="81.5" fill="#474747" />
<rect x="540" y="811.8" width="28" height="1.2" fill="#1e1e1e" />
<rect x="540" y="813.5" width="28" height="9.5" fill="#474747" />
<rect x="540" y="822.8" width="28" height="1.2" fill="#1e1e1e" />
<path d="M547.5 145.5 h12 M547.5 150 h12 M547.5 154.5 h9" stroke="#5e5e5e" stroke-width="3"/><path d="M557.5 152 L562.5 155 L557.5 158 Z" fill="#5e5e5e"/>
<path d="M547.5 208.5 h12 M547.5 213 h12 M547.5 217.5 h9" stroke="#5e5e5e" stroke-width="3"/><path d="M557.5 215 L562.5 218 L557.5 221 Z" fill="#5e5e5e"/>
<path d="M547.5 265.5 h12 M547.5 270 h12 M547.5 274.5 h9" stroke="#5e5e5e" stroke-width="3"/><path d="M557.5 272 L562.5 275 L557.5 278 Z" fill="#5e5e5e"/>
<path d="M547.5 335.5 h12 M547.5 340 h12 M547.5 344.5 h9" stroke="#5e5e5e" stroke-width="3"/><path d="M557.5 342 L562.5 345 L557.5 348 Z" fill="#5e5e5e"/>
<path d="M547.5 424.5 h12 M547.5 429 h12 M547.5 433.5 h9" stroke="#5e5e5e" stroke-width="3"/><path d="M557.5 431 L562.5 434 L557.5 437 Z" fill="#5e5e5e"/>
<path d="M547.5 497.0 h12 M547.5 501.5 h12 M547.5 506.0 h9" stroke="#5e5e5e" stroke-width="3"/><path d="M557.5 503.5 L562.5 506.5 L557.5 509.5 Z" fill="#5e5e5e"/>
<path d="M547.5 577.5 h12 M547.5 582 h12 M547.5 586.5 h9" stroke="#5e5e5e" stroke-width="3"/><path d="M557.5 584 L562.5 587 L557.5 590 Z" fill="#5e5e5e"/>
<path d="M547.5 675.5 h12 M547.5 680 h12 M547.5 684.5 h9" stroke="#5e5e5e" stroke-width="3"/><path d="M557.5 682 L562.5 685 L557.5 688 Z" fill="#5e5e5e"/>
<path d="M547.5 766.5 h12 M547.5 771 h12 M547.5 775.5 h9" stroke="#5e5e5e" stroke-width="3"/><path d="M557.5 773 L562.5 776 L557.5 779 Z" fill="#5e5e5e"/>
<rect x="568" y="123.5" width="1321" height="54" fill="#2a2a2a" />
<rect x="568" y="177" width="1321" height="1.5" fill="#1e1e1e" />
<rect x="568" y="178.5" width="1321" height="69.5" fill="#2a2a2a" />
<rect x="568" y="247.5" width="1321" height="1.5" fill="#1e1e1e" />
<rect x="568" y="249" width="1321" height="43" fill="#2a2a2a" />
<rect x="568" y="291.5" width="1321" height="1.5" fill="#1e1e1e" />
<rect x="568" y="293" width="1321" height="94.5" fill="#2a2a2a" />
<rect x="568" y="387" width="1321" height="1.5" fill="#1e1e1e" />
<rect x="568" y="388.5" width="1321" height="81.5" fill="#2f2c27" />
<rect x="568" y="469.5" width="1321" height="1.5" fill="#1e1e1e" />
<rect x="568" y="471" width="1321" height="62.5" fill="#2a2a2a" />
<rect x="568" y="533" width="1321" height="1.5" fill="#1e1e1e" />
<rect x="568" y="534.5" width="1321" height="95.5" fill="#293033" />
<rect x="568" y="629.5" width="1321" height="1.5" fill="#1e1e1e" />
<rect x="568" y="631" width="1321" height="98.5" fill="#293033" />
<rect x="568" y="729" width="1321" height="1.5" fill="#1e1e1e" />
<rect x="568" y="730.5" width="1321" height="81.5" fill="#293033" />
<rect x="568" y="811.5" width="1321" height="1.5" fill="#1e1e1e" />
<rect x="568" y="813.5" width="1321" height="9.5" fill="#2a2a2a" />
<rect x="568" y="822.5" width="1321" height="1.5" fill="#1e1e1e" />
<rect x="568" y="123.5" width="13.8" height="700" fill="#232323" />
<rect x="568" y="177" width="13.8" height="1.5" fill="#1e1e1e" />
<rect x="568" y="247.5" width="13.8" height="1.5" fill="#1e1e1e" />
<rect x="568" y="291.5" width="13.8" height="1.5" fill="#1e1e1e" />
<rect x="568" y="387" width="13.8" height="1.5" fill="#1e1e1e" />
<rect x="568" y="469.5" width="13.8" height="1.5" fill="#1e1e1e" />
<rect x="568" y="533" width="13.8" height="1.5" fill="#1e1e1e" />
<rect x="568" y="629.5" width="13.8" height="1.5" fill="#1e1e1e" />
<rect x="568" y="729" width="13.8" height="1.5" fill="#1e1e1e" />
<rect x="568" y="811.5" width="13.8" height="1.5" fill="#1e1e1e" />
<rect x="568" y="822.5" width="13.8" height="1.5" fill="#1e1e1e" />
<rect x="581.3" y="178.5" width="1" height="69" fill="rgba(255,255,255,0.27)" />
<rect x="618" y="178.5" width="1" height="69" fill="rgba(255,255,255,0.15)" />
<rect x="654.7" y="178.5" width="1" height="69" fill="rgba(255,255,255,0.15)" />
<rect x="691.4" y="178.5" width="1" height="69" fill="rgba(255,255,255,0.15)" />
<rect x="728.1" y="178.5" width="1" height="69" fill="rgba(255,255,255,0.27)" />
<rect x="764.8" y="178.5" width="1" height="69" fill="rgba(255,255,255,0.15)" />
<rect x="801.5" y="178.5" width="1" height="69" fill="rgba(255,255,255,0.15)" />
<rect x="838.2" y="178.5" width="1" height="69" fill="rgba(255,255,255,0.15)" />
<rect x="874.9" y="178.5" width="1" height="69" fill="rgba(255,255,255,0.27)" />
<rect x="911.6" y="178.5" width="1" height="69" fill="rgba(255,255,255,0.15)" />
<rect x="948.3" y="178.5" width="1" height="69" fill="rgba(255,255,255,0.15)" />
<rect x="985" y="178.5" width="1" height="69" fill="rgba(255,255,255,0.15)" />
<rect x="1021.7" y="178.5" width="1" height="69" fill="rgba(255,255,255,0.27)" />
<rect x="1058.4" y="178.5" width="1" height="69" fill="rgba(255,255,255,0.15)" />
<rect x="1095.1" y="178.5" width="1" height="69" fill="rgba(255,255,255,0.15)" />
<rect x="1131.8" y="178.5" width="1" height="69" fill="rgba(255,255,255,0.15)" />
<rect x="1168.5" y="178.5" width="1" height="69" fill="rgba(255,255,255,0.27)" />
<rect x="1205.2" y="178.5" width="1" height="69" fill="rgba(255,255,255,0.15)" />
<rect x="1241.9" y="178.5" width="1" height="69" fill="rgba(255,255,255,0.15)" />
<rect x="1278.6" y="178.5" width="1" height="69" fill="rgba(255,255,255,0.15)" />
<rect x="1315.3" y="178.5" width="1" height="69" fill="rgba(255,255,255,0.27)" />
<rect x="1352" y="178.5" width="1" height="69" fill="rgba(255,255,255,0.15)" />
<rect x="1388.7" y="178.5" width="1" height="69" fill="rgba(255,255,255,0.15)" />
<rect x="1425.4" y="178.5" width="1" height="69" fill="rgba(255,255,255,0.15)" />
<rect x="1462.1" y="178.5" width="1" height="69" fill="rgba(255,255,255,0.27)" />
<rect x="1498.8" y="178.5" width="1" height="69" fill="rgba(255,255,255,0.15)" />
<rect x="1535.5" y="178.5" width="1" height="69" fill="rgba(255,255,255,0.15)" />
<rect x="1572.2" y="178.5" width="1" height="69" fill="rgba(255,255,255,0.15)" />
<rect x="1608.9" y="178.5" width="1" height="69" fill="rgba(255,255,255,0.27)" />
<rect x="1645.6" y="178.5" width="1" height="69" fill="rgba(255,255,255,0.15)" />
<rect x="1682.3" y="178.5" width="1" height="69" fill="rgba(255,255,255,0.15)" />
<rect x="1719" y="178.5" width="1" height="69" fill="rgba(255,255,255,0.15)" />
<rect x="1755.7" y="178.5" width="1" height="69" fill="rgba(255,255,255,0.27)" />
<rect x="1792.4" y="178.5" width="1" height="69" fill="rgba(255,255,255,0.15)" />
<rect x="1829.1" y="178.5" width="1" height="69" fill="rgba(255,255,255,0.15)" />
<rect x="1865.8" y="178.5" width="1" height="69" fill="rgba(255,255,255,0.15)" />
<rect x="581.3" y="249" width="1" height="42.5" fill="rgba(255,255,255,0.27)" />
<rect x="618" y="249" width="1" height="42.5" fill="rgba(255,255,255,0.15)" />
<rect x="654.7" y="249" width="1" height="42.5" fill="rgba(255,255,255,0.15)" />
<rect x="691.4" y="249" width="1" height="42.5" fill="rgba(255,255,255,0.15)" />
<rect x="728.1" y="249" width="1" height="42.5" fill="rgba(255,255,255,0.27)" />
<rect x="764.8" y="249" width="1" height="42.5" fill="rgba(255,255,255,0.15)" />
<rect x="801.5" y="249" width="1" height="42.5" fill="rgba(255,255,255,0.15)" />
<rect x="838.2" y="249" width="1" height="42.5" fill="rgba(255,255,255,0.15)" />
<rect x="874.9" y="249" width="1" height="42.5" fill="rgba(255,255,255,0.27)" />
<rect x="911.6" y="249" width="1" height="42.5" fill="rgba(255,255,255,0.15)" />
<rect x="948.3" y="249" width="1" height="42.5" fill="rgba(255,255,255,0.15)" />
<rect x="985" y="249" width="1" height="42.5" fill="rgba(255,255,255,0.15)" />
<rect x="1021.7" y="249" width="1" height="42.5" fill="rgba(255,255,255,0.27)" />
<rect x="1058.4" y="249" width="1" height="42.5" fill="rgba(255,255,255,0.15)" />
<rect x="1095.1" y="249" width="1" height="42.5" fill="rgba(255,255,255,0.15)" />
<rect x="1131.8" y="249" width="1" height="42.5" fill="rgba(255,255,255,0.15)" />
<rect x="1168.5" y="249" width="1" height="42.5" fill="rgba(255,255,255,0.27)" />
<rect x="1205.2" y="249" width="1" height="42.5" fill="rgba(255,255,255,0.15)" />
<rect x="1241.9" y="249" width="1" height="42.5" fill="rgba(255,255,255,0.15)" />
<rect x="1278.6" y="249" width="1" height="42.5" fill="rgba(255,255,255,0.15)" />
<rect x="1315.3" y="249" width="1" height="42.5" fill="rgba(255,255,255,0.27)" />
<rect x="1352" y="249" width="1" height="42.5" fill="rgba(255,255,255,0.15)" />
<rect x="1388.7" y="249" width="1" height="42.5" fill="rgba(255,255,255,0.15)" />
<rect x="1425.4" y="249" width="1" height="42.5" fill="rgba(255,255,255,0.15)" />
<rect x="1462.1" y="249" width="1" height="42.5" fill="rgba(255,255,255,0.27)" />
<rect x="1498.8" y="249" width="1" height="42.5" fill="rgba(255,255,255,0.15)" />
<rect x="1535.5" y="249" width="1" height="42.5" fill="rgba(255,255,255,0.15)" />
<rect x="1572.2" y="249" width="1" height="42.5" fill="rgba(255,255,255,0.15)" />
<rect x="1608.9" y="249" width="1" height="42.5" fill="rgba(255,255,255,0.27)" />
<rect x="1645.6" y="249" width="1" height="42.5" fill="rgba(255,255,255,0.15)" />
<rect x="1682.3" y="249" width="1" height="42.5" fill="rgba(255,255,255,0.15)" />
<rect x="1719" y="249" width="1" height="42.5" fill="rgba(255,255,255,0.15)" />
<rect x="1755.7" y="249" width="1" height="42.5" fill="rgba(255,255,255,0.27)" />
<rect x="1792.4" y="249" width="1" height="42.5" fill="rgba(255,255,255,0.15)" />
<rect x="1829.1" y="249" width="1" height="42.5" fill="rgba(255,255,255,0.15)" />
<rect x="1865.8" y="249" width="1" height="42.5" fill="rgba(255,255,255,0.15)" />
<rect x="581.3" y="388.5" width="1" height="81" fill="rgba(255,255,255,0.27)" />
<rect x="618" y="388.5" width="1" height="81" fill="rgba(255,255,255,0.15)" />
<rect x="654.7" y="388.5" width="1" height="81" fill="rgba(255,255,255,0.15)" />
<rect x="691.4" y="388.5" width="1" height="81" fill="rgba(255,255,255,0.15)" />
<rect x="728.1" y="388.5" width="1" height="81" fill="rgba(255,255,255,0.27)" />
<rect x="764.8" y="388.5" width="1" height="81" fill="rgba(255,255,255,0.15)" />
<rect x="801.5" y="388.5" width="1" height="81" fill="rgba(255,255,255,0.15)" />
<rect x="838.2" y="388.5" width="1" height="81" fill="rgba(255,255,255,0.15)" />
<rect x="874.9" y="388.5" width="1" height="81" fill="rgba(255,255,255,0.27)" />
<rect x="911.6" y="388.5" width="1" height="81" fill="rgba(255,255,255,0.15)" />
<rect x="948.3" y="388.5" width="1" height="81" fill="rgba(255,255,255,0.15)" />
<rect x="985" y="388.5" width="1" height="81" fill="rgba(255,255,255,0.15)" />
<rect x="1021.7" y="388.5" width="1" height="81" fill="rgba(255,255,255,0.27)" />
<rect x="1058.4" y="388.5" width="1" height="81" fill="rgba(255,255,255,0.15)" />
<rect x="1095.1" y="388.5" width="1" height="81" fill="rgba(255,255,255,0.15)" />
<rect x="1131.8" y="388.5" width="1" height="81" fill="rgba(255,255,255,0.15)" />
<rect x="1168.5" y="388.5" width="1" height="81" fill="rgba(255,255,255,0.27)" />
<rect x="1205.2" y="388.5" width="1" height="81" fill="rgba(255,255,255,0.15)" />
<rect x="1241.9" y="388.5" width="1" height="81" fill="rgba(255,255,255,0.15)" />
<rect x="1278.6" y="388.5" width="1" height="81" fill="rgba(255,255,255,0.15)" />
<rect x="1315.3" y="388.5" width="1" height="81" fill="rgba(255,255,255,0.27)" />
<rect x="1352" y="388.5" width="1" height="81" fill="rgba(255,255,255,0.15)" />
<rect x="1388.7" y="388.5" width="1" height="81" fill="rgba(255,255,255,0.15)" />
<rect x="1425.4" y="388.5" width="1" height="81" fill="rgba(255,255,255,0.15)" />
<rect x="1462.1" y="388.5" width="1" height="81" fill="rgba(255,255,255,0.27)" />
<rect x="1498.8" y="388.5" width="1" height="81" fill="rgba(255,255,255,0.15)" />
<rect x="1535.5" y="388.5" width="1" height="81" fill="rgba(255,255,255,0.15)" />
<rect x="1572.2" y="388.5" width="1" height="81" fill="rgba(255,255,255,0.15)" />
<rect x="1608.9" y="388.5" width="1" height="81" fill="rgba(255,255,255,0.27)" />
<rect x="1645.6" y="388.5" width="1" height="81" fill="rgba(255,255,255,0.15)" />
<rect x="1682.3" y="388.5" width="1" height="81" fill="rgba(255,255,255,0.15)" />
<rect x="1719" y="388.5" width="1" height="81" fill="rgba(255,255,255,0.15)" />
<rect x="1755.7" y="388.5" width="1" height="81" fill="rgba(255,255,255,0.27)" />
<rect x="1792.4" y="388.5" width="1" height="81" fill="rgba(255,255,255,0.15)" />
<rect x="1829.1" y="388.5" width="1" height="81" fill="rgba(255,255,255,0.15)" />
<rect x="1865.8" y="388.5" width="1" height="81" fill="rgba(255,255,255,0.15)" />
<rect x="581.3" y="534.5" width="1" height="95" fill="rgba(255,255,255,0.27)" />
<rect x="618" y="534.5" width="1" height="95" fill="rgba(255,255,255,0.15)" />
<rect x="654.7" y="534.5" width="1" height="95" fill="rgba(255,255,255,0.15)" />
<rect x="691.4" y="534.5" width="1" height="95" fill="rgba(255,255,255,0.15)" />
<rect x="728.1" y="534.5" width="1" height="95" fill="rgba(255,255,255,0.27)" />
<rect x="764.8" y="534.5" width="1" height="95" fill="rgba(255,255,255,0.15)" />
<rect x="801.5" y="534.5" width="1" height="95" fill="rgba(255,255,255,0.15)" />
<rect x="838.2" y="534.5" width="1" height="95" fill="rgba(255,255,255,0.15)" />
<rect x="874.9" y="534.5" width="1" height="95" fill="rgba(255,255,255,0.27)" />
<rect x="911.6" y="534.5" width="1" height="95" fill="rgba(255,255,255,0.15)" />
<rect x="948.3" y="534.5" width="1" height="95" fill="rgba(255,255,255,0.15)" />
<rect x="985" y="534.5" width="1" height="95" fill="rgba(255,255,255,0.15)" />
<rect x="1021.7" y="534.5" width="1" height="95" fill="rgba(255,255,255,0.27)" />
<rect x="1058.4" y="534.5" width="1" height="95" fill="rgba(255,255,255,0.15)" />
<rect x="1095.1" y="534.5" width="1" height="95" fill="rgba(255,255,255,0.15)" />
<rect x="1131.8" y="534.5" width="1" height="95" fill="rgba(255,255,255,0.15)" />
<rect x="1168.5" y="534.5" width="1" height="95" fill="rgba(255,255,255,0.27)" />
<rect x="1205.2" y="534.5" width="1" height="95" fill="rgba(255,255,255,0.15)" />
<rect x="1241.9" y="534.5" width="1" height="95" fill="rgba(255,255,255,0.15)" />
<rect x="1278.6" y="534.5" width="1" height="95" fill="rgba(255,255,255,0.15)" />
<rect x="1315.3" y="534.5" width="1" height="95" fill="rgba(255,255,255,0.27)" />
<rect x="1352" y="534.5" width="1" height="95" fill="rgba(255,255,255,0.15)" />
<rect x="1388.7" y="534.5" width="1" height="95" fill="rgba(255,255,255,0.15)" />
<rect x="1425.4" y="534.5" width="1" height="95" fill="rgba(255,255,255,0.15)" />
<rect x="1462.1" y="534.5" width="1" height="95" fill="rgba(255,255,255,0.27)" />
<rect x="1498.8" y="534.5" width="1" height="95" fill="rgba(255,255,255,0.15)" />
<rect x="1535.5" y="534.5" width="1" height="95" fill="rgba(255,255,255,0.15)" />
<rect x="1572.2" y="534.5" width="1" height="95" fill="rgba(255,255,255,0.15)" />
<rect x="1608.9" y="534.5" width="1" height="95" fill="rgba(255,255,255,0.27)" />
<rect x="1645.6" y="534.5" width="1" height="95" fill="rgba(255,255,255,0.15)" />
<rect x="1682.3" y="534.5" width="1" height="95" fill="rgba(255,255,255,0.15)" />
<rect x="1719" y="534.5" width="1" height="95" fill="rgba(255,255,255,0.15)" />
<rect x="1755.7" y="534.5" width="1" height="95" fill="rgba(255,255,255,0.27)" />
<rect x="1792.4" y="534.5" width="1" height="95" fill="rgba(255,255,255,0.15)" />
<rect x="1829.1" y="534.5" width="1" height="95" fill="rgba(255,255,255,0.15)" />
<rect x="1865.8" y="534.5" width="1" height="95" fill="rgba(255,255,255,0.15)" />
<rect x="581.3" y="631" width="1" height="98" fill="rgba(255,255,255,0.27)" />
<rect x="618" y="631" width="1" height="98" fill="rgba(255,255,255,0.15)" />
<rect x="654.7" y="631" width="1" height="98" fill="rgba(255,255,255,0.15)" />
<rect x="691.4" y="631" width="1" height="98" fill="rgba(255,255,255,0.15)" />
<rect x="728.1" y="631" width="1" height="98" fill="rgba(255,255,255,0.27)" />
<rect x="764.8" y="631" width="1" height="98" fill="rgba(255,255,255,0.15)" />
<rect x="801.5" y="631" width="1" height="98" fill="rgba(255,255,255,0.15)" />
<rect x="838.2" y="631" width="1" height="98" fill="rgba(255,255,255,0.15)" />
<rect x="874.9" y="631" width="1" height="98" fill="rgba(255,255,255,0.27)" />
<rect x="911.6" y="631" width="1" height="98" fill="rgba(255,255,255,0.15)" />
<rect x="948.3" y="631" width="1" height="98" fill="rgba(255,255,255,0.15)" />
<rect x="985" y="631" width="1" height="98" fill="rgba(255,255,255,0.15)" />
<rect x="1021.7" y="631" width="1" height="98" fill="rgba(255,255,255,0.27)" />
<rect x="1058.4" y="631" width="1" height="98" fill="rgba(255,255,255,0.15)" />
<rect x="1095.1" y="631" width="1" height="98" fill="rgba(255,255,255,0.15)" />
<rect x="1131.8" y="631" width="1" height="98" fill="rgba(255,255,255,0.15)" />
<rect x="1168.5" y="631" width="1" height="98" fill="rgba(255,255,255,0.27)" />
<rect x="1205.2" y="631" width="1" height="98" fill="rgba(255,255,255,0.15)" />
<rect x="1241.9" y="631" width="1" height="98" fill="rgba(255,255,255,0.15)" />
<rect x="1278.6" y="631" width="1" height="98" fill="rgba(255,255,255,0.15)" />
<rect x="1315.3" y="631" width="1" height="98" fill="rgba(255,255,255,0.27)" />
<rect x="1352" y="631" width="1" height="98" fill="rgba(255,255,255,0.15)" />
<rect x="1388.7" y="631" width="1" height="98" fill="rgba(255,255,255,0.15)" />
<rect x="1425.4" y="631" width="1" height="98" fill="rgba(255,255,255,0.15)" />
<rect x="1462.1" y="631" width="1" height="98" fill="rgba(255,255,255,0.27)" />
<rect x="1498.8" y="631" width="1" height="98" fill="rgba(255,255,255,0.15)" />
<rect x="1535.5" y="631" width="1" height="98" fill="rgba(255,255,255,0.15)" />
<rect x="1572.2" y="631" width="1" height="98" fill="rgba(255,255,255,0.15)" />
<rect x="1608.9" y="631" width="1" height="98" fill="rgba(255,255,255,0.27)" />
<rect x="1645.6" y="631" width="1" height="98" fill="rgba(255,255,255,0.15)" />
<rect x="1682.3" y="631" width="1" height="98" fill="rgba(255,255,255,0.15)" />
<rect x="1719" y="631" width="1" height="98" fill="rgba(255,255,255,0.15)" />
<rect x="1755.7" y="631" width="1" height="98" fill="rgba(255,255,255,0.27)" />
<rect x="1792.4" y="631" width="1" height="98" fill="rgba(255,255,255,0.15)" />
<rect x="1829.1" y="631" width="1" height="98" fill="rgba(255,255,255,0.15)" />
<rect x="1865.8" y="631" width="1" height="98" fill="rgba(255,255,255,0.15)" />
<rect x="581.3" y="730.5" width="1" height="81" fill="rgba(255,255,255,0.27)" />
<rect x="618" y="730.5" width="1" height="81" fill="rgba(255,255,255,0.15)" />
<rect x="654.7" y="730.5" width="1" height="81" fill="rgba(255,255,255,0.15)" />
<rect x="691.4" y="730.5" width="1" height="81" fill="rgba(255,255,255,0.15)" />
<rect x="728.1" y="730.5" width="1" height="81" fill="rgba(255,255,255,0.27)" />
<rect x="764.8" y="730.5" width="1" height="81" fill="rgba(255,255,255,0.15)" />
<rect x="801.5" y="730.5" width="1" height="81" fill="rgba(255,255,255,0.15)" />
<rect x="838.2" y="730.5" width="1" height="81" fill="rgba(255,255,255,0.15)" />
<rect x="874.9" y="730.5" width="1" height="81" fill="rgba(255,255,255,0.27)" />
<rect x="911.6" y="730.5" width="1" height="81" fill="rgba(255,255,255,0.15)" />
<rect x="948.3" y="730.5" width="1" height="81" fill="rgba(255,255,255,0.15)" />
<rect x="985" y="730.5" width="1" height="81" fill="rgba(255,255,255,0.15)" />
<rect x="1021.7" y="730.5" width="1" height="81" fill="rgba(255,255,255,0.27)" />
<rect x="1058.4" y="730.5" width="1" height="81" fill="rgba(255,255,255,0.15)" />
<rect x="1095.1" y="730.5" width="1" height="81" fill="rgba(255,255,255,0.15)" />
<rect x="1131.8" y="730.5" width="1" height="81" fill="rgba(255,255,255,0.15)" />
<rect x="1168.5" y="730.5" width="1" height="81" fill="rgba(255,255,255,0.27)" />
<rect x="1205.2" y="730.5" width="1" height="81" fill="rgba(255,255,255,0.15)" />
<rect x="1241.9" y="730.5" width="1" height="81" fill="rgba(255,255,255,0.15)" />
<rect x="1278.6" y="730.5" width="1" height="81" fill="rgba(255,255,255,0.15)" />
<rect x="1315.3" y="730.5" width="1" height="81" fill="rgba(255,255,255,0.27)" />
<rect x="1352" y="730.5" width="1" height="81" fill="rgba(255,255,255,0.15)" />
<rect x="1388.7" y="730.5" width="1" height="81" fill="rgba(255,255,255,0.15)" />
<rect x="1425.4" y="730.5" width="1" height="81" fill="rgba(255,255,255,0.15)" />
<rect x="1462.1" y="730.5" width="1" height="81" fill="rgba(255,255,255,0.27)" />
<rect x="1498.8" y="730.5" width="1" height="81" fill="rgba(255,255,255,0.15)" />
<rect x="1535.5" y="730.5" width="1" height="81" fill="rgba(255,255,255,0.15)" />
<rect x="1572.2" y="730.5" width="1" height="81" fill="rgba(255,255,255,0.15)" />
<rect x="1608.9" y="730.5" width="1" height="81" fill="rgba(255,255,255,0.27)" />
<rect x="1645.6" y="730.5" width="1" height="81" fill="rgba(255,255,255,0.15)" />
<rect x="1682.3" y="730.5" width="1" height="81" fill="rgba(255,255,255,0.15)" />
<rect x="1719" y="730.5" width="1" height="81" fill="rgba(255,255,255,0.15)" />
<rect x="1755.7" y="730.5" width="1" height="81" fill="rgba(255,255,255,0.27)" />
<rect x="1792.4" y="730.5" width="1" height="81" fill="rgba(255,255,255,0.15)" />
<rect x="1829.1" y="730.5" width="1" height="81" fill="rgba(255,255,255,0.15)" />
<rect x="1865.8" y="730.5" width="1" height="81" fill="rgba(255,255,255,0.15)" />
<rect x="581.3" y="813.5" width="1" height="9" fill="rgba(255,255,255,0.27)" />
<rect x="618" y="813.5" width="1" height="9" fill="rgba(255,255,255,0.15)" />
<rect x="654.7" y="813.5" width="1" height="9" fill="rgba(255,255,255,0.15)" />
<rect x="691.4" y="813.5" width="1" height="9" fill="rgba(255,255,255,0.15)" />
<rect x="728.1" y="813.5" width="1" height="9" fill="rgba(255,255,255,0.27)" />
<rect x="764.8" y="813.5" width="1" height="9" fill="rgba(255,255,255,0.15)" />
<rect x="801.5" y="813.5" width="1" height="9" fill="rgba(255,255,255,0.15)" />
<rect x="838.2" y="813.5" width="1" height="9" fill="rgba(255,255,255,0.15)" />
<rect x="874.9" y="813.5" width="1" height="9" fill="rgba(255,255,255,0.27)" />
<rect x="911.6" y="813.5" width="1" height="9" fill="rgba(255,255,255,0.15)" />
<rect x="948.3" y="813.5" width="1" height="9" fill="rgba(255,255,255,0.15)" />
<rect x="985" y="813.5" width="1" height="9" fill="rgba(255,255,255,0.15)" />
<rect x="1021.7" y="813.5" width="1" height="9" fill="rgba(255,255,255,0.27)" />
<rect x="1058.4" y="813.5" width="1" height="9" fill="rgba(255,255,255,0.15)" />
<rect x="1095.1" y="813.5" width="1" height="9" fill="rgba(255,255,255,0.15)" />
<rect x="1131.8" y="813.5" width="1" height="9" fill="rgba(255,255,255,0.15)" />
<rect x="1168.5" y="813.5" width="1" height="9" fill="rgba(255,255,255,0.27)" />
<rect x="1205.2" y="813.5" width="1" height="9" fill="rgba(255,255,255,0.15)" />
<rect x="1241.9" y="813.5" width="1" height="9" fill="rgba(255,255,255,0.15)" />
<rect x="1278.6" y="813.5" width="1" height="9" fill="rgba(255,255,255,0.15)" />
<rect x="1315.3" y="813.5" width="1" height="9" fill="rgba(255,255,255,0.27)" />
<rect x="1352" y="813.5" width="1" height="9" fill="rgba(255,255,255,0.15)" />
<rect x="1388.7" y="813.5" width="1" height="9" fill="rgba(255,255,255,0.15)" />
<rect x="1425.4" y="813.5" width="1" height="9" fill="rgba(255,255,255,0.15)" />
<rect x="1462.1" y="813.5" width="1" height="9" fill="rgba(255,255,255,0.27)" />
<rect x="1498.8" y="813.5" width="1" height="9" fill="rgba(255,255,255,0.15)" />
<rect x="1535.5" y="813.5" width="1" height="9" fill="rgba(255,255,255,0.15)" />
<rect x="1572.2" y="813.5" width="1" height="9" fill="rgba(255,255,255,0.15)" />
<rect x="1608.9" y="813.5" width="1" height="9" fill="rgba(255,255,255,0.27)" />
<rect x="1645.6" y="813.5" width="1" height="9" fill="rgba(255,255,255,0.15)" />
<rect x="1682.3" y="813.5" width="1" height="9" fill="rgba(255,255,255,0.15)" />
<rect x="1719" y="813.5" width="1" height="9" fill="rgba(255,255,255,0.15)" />
<rect x="1755.7" y="813.5" width="1" height="9" fill="rgba(255,255,255,0.27)" />
<rect x="1792.4" y="813.5" width="1" height="9" fill="rgba(255,255,255,0.15)" />
<rect x="1829.1" y="813.5" width="1" height="9" fill="rgba(255,255,255,0.15)" />
<rect x="1865.8" y="813.5" width="1" height="9" fill="rgba(255,255,255,0.15)" />
<rect x="581.8" y="599" width="42" height="2" fill="rgba(80,160,190,0.28)" />
<rect x="619.3" y="591.8" width="35.5" height="2" fill="rgba(80,160,190,0.28)" />
<rect x="655.8" y="587.4" width="33" height="2" fill="rgba(80,160,190,0.28)" />
<rect x="691.8" y="583" width="22" height="2" fill="rgba(80,160,190,0.28)" />
<rect x="711.8" y="576" width="10" height="2" fill="rgba(80,160,190,0.28)" />
<rect x="728.6" y="591.8" width="34" height="2" fill="rgba(80,160,190,0.28)" />
<rect x="765.6" y="587.4" width="36" height="2" fill="rgba(80,160,190,0.28)" />
<rect x="802.6" y="583" width="28" height="2" fill="rgba(80,160,190,0.28)" />
<rect x="820.6" y="576" width="16" height="2" fill="rgba(80,160,190,0.28)" />
<rect x="829.6" y="572" width="9" height="2" fill="rgba(80,160,190,0.28)" />
<rect x="838.6" y="583" width="36" height="2" fill="rgba(80,160,190,0.28)" />
<rect x="886.4" y="599" width="39" height="2" fill="rgba(80,160,190,0.28)" />
<rect x="930.4" y="591.8" width="39" height="2" fill="rgba(80,160,190,0.28)" />
<rect x="971.4" y="587.4" width="34" height="2" fill="rgba(80,160,190,0.28)" />
<rect x="1001.4" y="583" width="21" height="2" fill="rgba(80,160,190,0.28)" />
<rect x="1025.2" y="591.8" width="39" height="2" fill="rgba(80,160,190,0.28)" />
<rect x="1066.2" y="587.4" width="42" height="2" fill="rgba(80,160,190,0.28)" />
<rect x="1108.2" y="583" width="24" height="2" fill="rgba(80,160,190,0.28)" />
<rect x="1118.2" y="576" width="26" height="2" fill="rgba(80,160,190,0.28)" />
<rect x="1139.2" y="587.4" width="29" height="2" fill="rgba(80,160,190,0.28)" />
<rect x="1169" y="599" width="42" height="2" fill="rgba(80,160,190,0.28)" />
<rect x="1206.5" y="591.8" width="35.5" height="2" fill="rgba(80,160,190,0.28)" />
<rect x="1243" y="587.4" width="33" height="2" fill="rgba(80,160,190,0.28)" />
<rect x="1279" y="583" width="22" height="2" fill="rgba(80,160,190,0.28)" />
<rect x="1299" y="576" width="10" height="2" fill="rgba(80,160,190,0.28)" />
<rect x="1315.8" y="591.8" width="34" height="2" fill="rgba(80,160,190,0.28)" />
<rect x="1352.8" y="587.4" width="36" height="2" fill="rgba(80,160,190,0.28)" />
<rect x="1389.8" y="583" width="28" height="2" fill="rgba(80,160,190,0.28)" />
<rect x="1407.8" y="576" width="16" height="2" fill="rgba(80,160,190,0.28)" />
<rect x="1416.8" y="572" width="9" height="2" fill="rgba(80,160,190,0.28)" />
<rect x="1425.8" y="583" width="36" height="2" fill="rgba(80,160,190,0.28)" />
<rect x="1473.6" y="599" width="39" height="2" fill="rgba(80,160,190,0.28)" />
<rect x="1517.6" y="591.8" width="39" height="2" fill="rgba(80,160,190,0.28)" />
<rect x="1558.6" y="587.4" width="34" height="2" fill="rgba(80,160,190,0.28)" />
<rect x="1588.6" y="583" width="21" height="2" fill="rgba(80,160,190,0.28)" />
<rect x="1612.4" y="591.8" width="39" height="2" fill="rgba(80,160,190,0.28)" />
<rect x="1653.4" y="587.4" width="42" height="2" fill="rgba(80,160,190,0.28)" />
<rect x="1695.4" y="583" width="24" height="2" fill="rgba(80,160,190,0.28)" />
<rect x="1705.4" y="576" width="26" height="2" fill="rgba(80,160,190,0.28)" />
<rect x="1726.4" y="587.4" width="29" height="2" fill="rgba(80,160,190,0.28)" />
<rect x="1756.2" y="599" width="42" height="2" fill="rgba(80,160,190,0.28)" />
<rect x="1793.7" y="591.8" width="35.5" height="2" fill="rgba(80,160,190,0.28)" />
<rect x="1830.2" y="587.4" width="33" height="2" fill="rgba(80,160,190,0.28)" />
<rect x="1866.2" y="583" width="22" height="2" fill="rgba(80,160,190,0.28)" />
<rect x="1886.2" y="576" width="2.8" height="2" fill="rgba(80,160,190,0.28)" />
<rect x="581.8" y="696" width="42" height="2" fill="rgba(80,160,190,0.28)" />
<rect x="619.3" y="688.8" width="35.5" height="2" fill="rgba(80,160,190,0.28)" />
<rect x="655.8" y="684.4" width="33" height="2" fill="rgba(80,160,190,0.28)" />
<rect x="691.8" y="680" width="22" height="2" fill="rgba(80,160,190,0.28)" />
<rect x="711.8" y="673" width="10" height="2" fill="rgba(80,160,190,0.28)" />
<rect x="728.6" y="688.8" width="34" height="2" fill="rgba(80,160,190,0.28)" />
<rect x="765.6" y="684.4" width="36" height="2" fill="rgba(80,160,190,0.28)" />
<rect x="802.6" y="680" width="28" height="2" fill="rgba(80,160,190,0.28)" />
<rect x="820.6" y="673" width="16" height="2" fill="rgba(80,160,190,0.28)" />
<rect x="829.6" y="669" width="9" height="2" fill="rgba(80,160,190,0.28)" />
<rect x="838.6" y="680" width="36" height="2" fill="rgba(80,160,190,0.28)" />
<rect x="886.4" y="696" width="39" height="2" fill="rgba(80,160,190,0.28)" />
<rect x="930.4" y="688.8" width="39" height="2" fill="rgba(80,160,190,0.28)" />
<rect x="971.4" y="684.4" width="34" height="2" fill="rgba(80,160,190,0.28)" />
<rect x="1001.4" y="680" width="21" height="2" fill="rgba(80,160,190,0.28)" />
<rect x="1025.2" y="688.8" width="39" height="2" fill="rgba(80,160,190,0.28)" />
<rect x="1066.2" y="684.4" width="42" height="2" fill="rgba(80,160,190,0.28)" />
<rect x="1108.2" y="680" width="24" height="2" fill="rgba(80,160,190,0.28)" />
<rect x="1118.2" y="673" width="26" height="2" fill="rgba(80,160,190,0.28)" />
<rect x="1139.2" y="684.4" width="29" height="2" fill="rgba(80,160,190,0.28)" />
<rect x="1169" y="696" width="42" height="2" fill="rgba(80,160,190,0.28)" />
<rect x="1206.5" y="688.8" width="35.5" height="2" fill="rgba(80,160,190,0.28)" />
<rect x="1243" y="684.4" width="33" height="2" fill="rgba(80,160,190,0.28)" />
<rect x="1279" y="680" width="22" height="2" fill="rgba(80,160,190,0.28)" />
<rect x="1299" y="673" width="10" height="2" fill="rgba(80,160,190,0.28)" />
<rect x="1315.8" y="688.8" width="34" height="2" fill="rgba(80,160,190,0.28)" />
<rect x="1352.8" y="684.4" width="36" height="2" fill="rgba(80,160,190,0.28)" />
<rect x="1389.8" y="680" width="28" height="2" fill="rgba(80,160,190,0.28)" />
<rect x="1407.8" y="673" width="16" height="2" fill="rgba(80,160,190,0.28)" />
<rect x="1416.8" y="669" width="9" height="2" fill="rgba(80,160,190,0.28)" />
<rect x="1425.8" y="680" width="36" height="2" fill="rgba(80,160,190,0.28)" />
<rect x="1473.6" y="696" width="39" height="2" fill="rgba(80,160,190,0.28)" />
<rect x="1517.6" y="688.8" width="39" height="2" fill="rgba(80,160,190,0.28)" />
<rect x="1558.6" y="684.4" width="34" height="2" fill="rgba(80,160,190,0.28)" />
<rect x="1588.6" y="680" width="21" height="2" fill="rgba(80,160,190,0.28)" />
<rect x="1612.4" y="688.8" width="39" height="2" fill="rgba(80,160,190,0.28)" />
<rect x="1653.4" y="684.4" width="42" height="2" fill="rgba(80,160,190,0.28)" />
<rect x="1695.4" y="680" width="24" height="2" fill="rgba(80,160,190,0.28)" />
<rect x="1705.4" y="673" width="26" height="2" fill="rgba(80,160,190,0.28)" />
<rect x="1726.4" y="684.4" width="29" height="2" fill="rgba(80,160,190,0.28)" />
<rect x="1756.2" y="696" width="42" height="2" fill="rgba(80,160,190,0.28)" />
<rect x="1793.7" y="688.8" width="35.5" height="2" fill="rgba(80,160,190,0.28)" />
<rect x="1830.2" y="684.4" width="33" height="2" fill="rgba(80,160,190,0.28)" />
<rect x="1866.2" y="680" width="22" height="2" fill="rgba(80,160,190,0.28)" />
<rect x="1886.2" y="673" width="2.8" height="2" fill="rgba(80,160,190,0.28)" />
<rect x="581.8" y="794" width="42" height="2" fill="rgba(80,160,190,0.28)" />
<rect x="619.3" y="786.8" width="35.5" height="2" fill="rgba(80,160,190,0.28)" />
<rect x="655.8" y="782.4" width="33" height="2" fill="rgba(80,160,190,0.28)" />
<rect x="691.8" y="778" width="22" height="2" fill="rgba(80,160,190,0.28)" />
<rect x="711.8" y="771" width="10" height="2" fill="rgba(80,160,190,0.28)" />
<rect x="728.6" y="786.8" width="34" height="2" fill="rgba(80,160,190,0.28)" />
<rect x="765.6" y="782.4" width="36" height="2" fill="rgba(80,160,190,0.28)" />
<rect x="802.6" y="778" width="28" height="2" fill="rgba(80,160,190,0.28)" />
<rect x="820.6" y="771" width="16" height="2" fill="rgba(80,160,190,0.28)" />
<rect x="829.6" y="767" width="9" height="2" fill="rgba(80,160,190,0.28)" />
<rect x="838.6" y="778" width="36" height="2" fill="rgba(80,160,190,0.28)" />
<rect x="886.4" y="794" width="39" height="2" fill="rgba(80,160,190,0.28)" />
<rect x="930.4" y="786.8" width="39" height="2" fill="rgba(80,160,190,0.28)" />
<rect x="971.4" y="782.4" width="34" height="2" fill="rgba(80,160,190,0.28)" />
<rect x="1001.4" y="778" width="21" height="2" fill="rgba(80,160,190,0.28)" />
<rect x="1025.2" y="786.8" width="39" height="2" fill="rgba(80,160,190,0.28)" />
<rect x="1066.2" y="782.4" width="42" height="2" fill="rgba(80,160,190,0.28)" />
<rect x="1108.2" y="778" width="24" height="2" fill="rgba(80,160,190,0.28)" />
<rect x="1118.2" y="771" width="26" height="2" fill="rgba(80,160,190,0.28)" />
<rect x="1139.2" y="782.4" width="29" height="2" fill="rgba(80,160,190,0.28)" />
<rect x="1169" y="794" width="42" height="2" fill="rgba(80,160,190,0.28)" />
<rect x="1206.5" y="786.8" width="35.5" height="2" fill="rgba(80,160,190,0.28)" />
<rect x="1243" y="782.4" width="33" height="2" fill="rgba(80,160,190,0.28)" />
<rect x="1279" y="778" width="22" height="2" fill="rgba(80,160,190,0.28)" />
<rect x="1299" y="771" width="10" height="2" fill="rgba(80,160,190,0.28)" />
<rect x="1315.8" y="786.8" width="34" height="2" fill="rgba(80,160,190,0.28)" />
<rect x="1352.8" y="782.4" width="36" height="2" fill="rgba(80,160,190,0.28)" />
<rect x="1389.8" y="778" width="28" height="2" fill="rgba(80,160,190,0.28)" />
<rect x="1407.8" y="771" width="16" height="2" fill="rgba(80,160,190,0.28)" />
<rect x="1416.8" y="767" width="9" height="2" fill="rgba(80,160,190,0.28)" />
<rect x="1425.8" y="778" width="36" height="2" fill="rgba(80,160,190,0.28)" />
<rect x="1473.6" y="794" width="39" height="2" fill="rgba(80,160,190,0.28)" />
<rect x="1517.6" y="786.8" width="39" height="2" fill="rgba(80,160,190,0.28)" />
<rect x="1558.6" y="782.4" width="34" height="2" fill="rgba(80,160,190,0.28)" />
<rect x="1588.6" y="778" width="21" height="2" fill="rgba(80,160,190,0.28)" />
<rect x="1612.4" y="786.8" width="39" height="2" fill="rgba(80,160,190,0.28)" />
<rect x="1653.4" y="782.4" width="42" height="2" fill="rgba(80,160,190,0.28)" />
<rect x="1695.4" y="778" width="24" height="2" fill="rgba(80,160,190,0.28)" />
<rect x="1705.4" y="771" width="26" height="2" fill="rgba(80,160,190,0.28)" />
<rect x="1726.4" y="782.4" width="29" height="2" fill="rgba(80,160,190,0.28)" />
<rect x="1756.2" y="794" width="42" height="2" fill="rgba(80,160,190,0.28)" />
<rect x="1793.7" y="786.8" width="35.5" height="2" fill="rgba(80,160,190,0.28)" />
<rect x="1830.2" y="782.4" width="33" height="2" fill="rgba(80,160,190,0.28)" />
<rect x="1866.2" y="778" width="22" height="2" fill="rgba(80,160,190,0.28)" />
<rect x="1886.2" y="771" width="2.8" height="2" fill="rgba(80,160,190,0.28)" />
<rect x="568" y="124" width="13.8" height="53" fill="#b5695f" />
<rect x="581.8" y="124.0" width="1284.2" height="53.0" rx="3" fill="#c97569"/>
<rect x="581.8" y="150" width="1281.2" height="27" fill="rgba(255,230,220,0.045)" />
<rect x="568" y="149.5" width="1298" height="1" fill="rgba(90,40,35,0.25)" />
<rect x="581.3" y="150.5" width="1" height="26.5" fill="rgba(70,25,20,0.32)" />
<rect x="618" y="150.5" width="1" height="26.5" fill="rgba(70,25,20,0.32)" />
<rect x="654.7" y="150.5" width="1" height="26.5" fill="rgba(70,25,20,0.32)" />
<rect x="691.4" y="150.5" width="1" height="26.5" fill="rgba(70,25,20,0.32)" />
<rect x="728.1" y="150.5" width="1" height="26.5" fill="rgba(70,25,20,0.32)" />
<rect x="764.8" y="150.5" width="1" height="26.5" fill="rgba(70,25,20,0.32)" />
<rect x="801.5" y="150.5" width="1" height="26.5" fill="rgba(70,25,20,0.32)" />
<rect x="838.2" y="150.5" width="1" height="26.5" fill="rgba(70,25,20,0.32)" />
<rect x="874.9" y="150.5" width="1" height="26.5" fill="rgba(70,25,20,0.32)" />
<rect x="911.6" y="150.5" width="1" height="26.5" fill="rgba(70,25,20,0.32)" />
<rect x="948.3" y="150.5" width="1" height="26.5" fill="rgba(70,25,20,0.32)" />
<rect x="985" y="150.5" width="1" height="26.5" fill="rgba(70,25,20,0.32)" />
<rect x="1021.7" y="150.5" width="1" height="26.5" fill="rgba(70,25,20,0.32)" />
<rect x="1058.4" y="150.5" width="1" height="26.5" fill="rgba(70,25,20,0.32)" />
<rect x="1095.1" y="150.5" width="1" height="26.5" fill="rgba(70,25,20,0.32)" />
<rect x="1131.8" y="150.5" width="1" height="26.5" fill="rgba(70,25,20,0.32)" />
<rect x="1168.5" y="150.5" width="1" height="26.5" fill="rgba(70,25,20,0.32)" />
<rect x="1205.2" y="150.5" width="1" height="26.5" fill="rgba(70,25,20,0.32)" />
<rect x="1241.9" y="150.5" width="1" height="26.5" fill="rgba(70,25,20,0.32)" />
<rect x="1278.6" y="150.5" width="1" height="26.5" fill="rgba(70,25,20,0.32)" />
<rect x="1315.3" y="150.5" width="1" height="26.5" fill="rgba(70,25,20,0.32)" />
<rect x="1352" y="150.5" width="1" height="26.5" fill="rgba(70,25,20,0.32)" />
<rect x="1388.7" y="150.5" width="1" height="26.5" fill="rgba(70,25,20,0.32)" />
<rect x="1425.4" y="150.5" width="1" height="26.5" fill="rgba(70,25,20,0.32)" />
<rect x="1462.1" y="150.5" width="1" height="26.5" fill="rgba(70,25,20,0.32)" />
<rect x="1498.8" y="150.5" width="1" height="26.5" fill="rgba(70,25,20,0.32)" />
<rect x="1535.5" y="150.5" width="1" height="26.5" fill="rgba(70,25,20,0.32)" />
<rect x="1572.2" y="150.5" width="1" height="26.5" fill="rgba(70,25,20,0.32)" />
<rect x="1608.9" y="150.5" width="1" height="26.5" fill="rgba(70,25,20,0.32)" />
<rect x="1645.6" y="150.5" width="1" height="26.5" fill="rgba(70,25,20,0.32)" />
<rect x="1682.3" y="150.5" width="1" height="26.5" fill="rgba(70,25,20,0.32)" />
<rect x="1719" y="150.5" width="1" height="26.5" fill="rgba(70,25,20,0.32)" />
<rect x="1755.7" y="150.5" width="1" height="26.5" fill="rgba(70,25,20,0.32)" />
<rect x="1792.4" y="150.5" width="1" height="26.5" fill="rgba(70,25,20,0.32)" />
<rect x="1829.1" y="150.5" width="1" height="26.5" fill="rgba(70,25,20,0.32)" />
<rect x="1095.6" y="150.5" width="73.4" height="26.5" fill="rgba(80,40,30,0.12)" />
<rect x="1682.8" y="150.5" width="73.4" height="26.5" fill="rgba(80,40,30,0.12)" />
<rect x="581.3" y="123.5" width="1.2" height="54" fill="#7d6a66" />
<text x="585.8" y="141.2" font-size="12" fill="#3a2420" font-weight="normal" text-anchor="start" stroke="#3a2420" stroke-width="0.1" >BEAT DIGGAR</text>
<rect x="1168.5" y="123.5" width="1.2" height="54" fill="#7d6a66" />
<text x="1173" y="141.2" font-size="12" fill="#3a2420" font-weight="normal" text-anchor="start" stroke="#3a2420" stroke-width="0.1" >BEAT DIGGAR</text>
<rect x="1755.7" y="123.5" width="1.2" height="54" fill="#7d6a66" />
<text x="1760.2" y="141.2" font-size="12" fill="#3a2420" font-weight="normal" text-anchor="start" stroke="#3a2420" stroke-width="0.1" >BEAT DIGGAR</text>
<rect x="568" y="123.5" width="1" height="54" fill="#8f5a52" />
<path d="M568.5 152.7v19.2m1 -19.5v19.9m1 -19.1v18.5m1 -14.8v12.4m1 -15.9v16.1m1 -15.4v13.0m1 -10.9v11.0m1 -10.7v11.4m1 -9.2v7.8m1 -8.2v9.6m1 -10.4v8.2m1 -7.7v7.3m1 -6.4v6.0m1 -4.5v5.2m1 -8.1v9.4m1 -10.9v11.9m1 -9.3v8.7m1 -8.9v7.7m1 -6.7v6.9m1 -7.6v7.3m1 -7.4v6.1m1 -5.1v4.7m1 -4.3v4.1m1 -3.7v3.8m1 -3.2v2.8m1 -2.9v2.4m1 -2.4v2.3m1 -1.7v1.4m1 -3.8v5.0m1 -4.6v4.1m1 -3.1v3.3m1 -2.2v1.5m1 -4.7v7.8m1 -6.5v5.0m1 -5.0v6.3m1 -6.0v5.4m1 -6.7v7.0m1 -5.9v4.8m1 -5.0v5.5m1 -4.7v4.6m1 -5.6v5.6m1 -4.5v4.5m1 -4.8v4.1m1 -4.6v5.0m1 -4.4v4.0m1 -3.9v3.0m1 -2.5v2.1m1 -1.7v1.5m1 -3.2v5.1m1 -4.2v2.9m1 -7.5v10.7m1 -8.4v7.0m1 -6.9v7.5m1 -6.8v5.7m1 -5.4v6.8m1 -6.6v5.5m1 -6.9v6.2m1 -5.8v7.1m1 -6.8v6.4m1 -5.4v4.6m1 -4.4v4.5m1 -4.3v3.4m1 -3.7v3.6m1 -3.0v2.3m1 -3.1v4.3m1 -4.0v3.3m1 -2.9v2.6m1 -2.3v2.7m1 -2.8v2.2m1 -5.8v8.8m1 -7.5v7.2m1 -8.4v9.2m1 -7.8v7.2m1 -7.7v7.2m1 -6.7v6.6m1 -5.3v4.4m1 -4.2v3.8m1 -4.3v4.4m1 -3.8v4.0m1 -3.1v1.6m1 -2.5v4.1m1 -4.2v4.0m1 -4.0v3.8m1 -3.6v3.3m1 -2.7v2.3m1 -2.2v2.0m1 -3.6v5.9m1 -10.7v13.8m1 -13.0v12.9m1 -10.8v9.0m1 -7.6v7.9m1 -9.3v8.2m1 -7.4v7.6m1 -7.5v6.3m1 -6.2v6.8m1 -6.5v6.1m1 -6.0v6.4m1 -6.4v6.2m1 -4.8v3.6m1 -3.7v3.9m1 -3.2v2.8m1 -2.6v1.8m1 -3.6v5.2m1 -4.1v3.6m1 -3.5v3.2m1 -2.6v2.2m1 -5.9v9.2m1 -8.0v7.1m1 -5.9v6.0m1 -5.4v4.3m1 -4.6v4.4m1 -4.0v4.4m1 -4.6v3.5m1 -3.9v4.0m1 -3.8v4.1m1 -4.0v4.7m1 -3.4v1.7m1 -3.6v5.3m1 -4.4v3.5m1 -3.5v3.7m1 -3.7v3.7m1 -3.1v2.4m1 -2.2v1.8m1 -2.5v4.1m1 -7.1v8.0m1 -7.4v8.5m1 -7.5v6.1m1 -5.5v5.0m1 -6.0v6.0m1 -5.8v6.5m1 -5.8v4.7m1 -5.2v5.4m1 -4.5v4.2m1 -5.0v5.1m1 -4.2v4.3m1 -3.7v3.4m1 -3.4v2.7m1 -2.5v2.4m1 -3.3v5.0m1 -5.1v5.2m1 -5.4v4.1m1 -3.1v2.7m1 -8.5v11.8m1 -9.7v9.6m1 -9.2v9.0m1 -8.7v7.3m1 -7.0v7.2m1 -6.5v6.4m1 -5.7v5.9m1 -6.2v5.9m1 -6.3v6.6m1 -5.2v4.6m1 -4.2v3.9m1 -3.9v3.1m1 -2.1v1.9m1 -3.2v4.2m1 -4.2v4.0m1 -3.4v3.4m1 -3.0v2.3m1 -2.3v2.0m1 -1.4v1.4m1 -4.6v9.4m1 -10.6v9.0m1 -7.6v7.9m1 -9.0v7.4m1 -6.2v6.8m1 -6.7v6.1m1 -5.0v4.9m1 -5.8v5.0m1 -4.0v5.0m1 -5.8v5.5m1 -3.4v2.1m1 -2.3v2.1m1 -3.5v3.9m1 -3.7v3.7m1 -3.2v3.5m1 -3.3v2.4m1 -1.8v2.0m1 -1.7v1.2m1 -5.2v8.1m1 -8.0v7.3m1 -5.7v6.0m1 -5.7v4.8m1 -5.5v6.5m1 -6.8v5.7m1 -4.2v3.9m1 -4.0v4.1m1 -4.4v4.3m1 -3.2v3.5m1 -4.4v5.3m1 -5.6v5.6m1 -5.2v4.4m1 -3.7v3.2m1 -2.9v2.7m1 -2.5v1.7m1 -3.0v4.6m1 -4.7v4.0m1 -9.1v14.2m1 -11.0v10.0m1 -8.8v6.1m1 -6.7v6.5m1 -6.6v6.6m1 -5.3v5.5m1 -5.4v5.8m1 -5.7v4.6m1 -6.0v6.8m1 -5.4v4.5m1 -3.2v2.1m1 -3.3v3.8m1 -3.3v3.3m1 -2.7v2.5m1 -2.6v2.4m1 -2.0v1.7m1 -1.6v1.7m1 -3.1v4.1m1 -3.8v3.7m1 -5.1v6.6m1 -6.4v5.8m1 -4.5v3.7m1 -4.0v4.1m1 -5.0v5.5m1 -5.1v4.4m1 -3.9v5.0m1 -5.1v4.5m1 -4.2v3.8m1 -4.0v4.6m1 -4.7v4.7m1 -5.0v4.4m1 -3.2v3.0m1 -2.6v2.3m1 -2.0v1.8m1 -3.2v5.7m1 -5.9v5.3m1 -5.3v4.4m1 -7.8v12.3m1 -10.5v8.9m1 -8.0v6.4m1 -6.8v5.6m1 -4.4v4.0m1 -3.9v3.8m1 -3.9v4.8m1 -4.6v3.7m1 -3.7v3.6m1 -3.8v4.2m1 -2.8v1.6m1 -1.6v1.7m1 -3.3v4.5m1 -4.3v3.5m1 -2.2v2.5m1 -2.3v1.5m1 -2.8v4.7m1 -4.3v3.3m1 -4.9v6.3m1 -7.6v8.0m1 -7.5v6.3m1 -5.4v5.7m1 -5.8v5.6m1 -5.2v5.7m1 -5.6v4.9m1 -4.4v5.9m1 -6.1v5.3m1 -5.6v5.6m1 -3.7v2.0m1 -3.0v4.3m1 -5.1v4.9m1 -4.4v3.8m1 -2.6v2.7m1 -2.8v2.5m1 -2.2v1.9m1 -1.8v1.6m1 -2.9v4.1m1 -6.5v7.3m1 -5.5v5.3m1 -5.1v5.6m1 -6.8v6.0m1 -4.7v4.2m1 -4.3v4.2m1 -4.4v5.1m1 -4.7v4.0m1 -4.6v4.6m1 -3.8v4.2m1 -4.0v3.5m1 -3.2v3.1m1 -3.0v2.8m1 -2.4v2.1m1 -3.9v5.4m1 -4.6v4.6m1 -4.5v4.3m1 -4.0v3.5m1 -6.9v11.7m1 -11.2v8.3m1 -7.0v6.8m1 -6.9v7.6m1 -7.3v5.7m1 -6.4v7.1m1 -5.5v4.4m1 -4.1v4.1m1 -5.0v5.7m1 -5.3v4.3m1 -2.8v1.9m1 -3.3v4.1m1 -4.2v5.0m1 -4.9v3.8m1 -3.2v3.1m1 -2.9v2.9m1 -2.7v2.6m1 -1.8v1.3m1 -7.8v12.1m1 -9.5v8.6m1 -8.6v9.0m1 -7.9v7.3m1 -7.0v5.2m1 -5.9v6.7m1 -5.1v5.8m1 -5.6v4.8m1 -5.5v5.8m1 -5.6v4.5m1 -4.1v3.8m1 -3.6v3.3m1 -2.8v2.2m1 -2.8v3.6m1 -4.0v4.3m1 -3.8v3.3m1 -2.7v2.1m1 -2.1v2.0m1 -1.4v1.0m1 -3.4v6.8m1 -8.1v6.8m1 -6.2v6.2m1 -5.8v6.4m1 -6.1v5.9m1 -5.2v3.9m1 -4.0v4.7m1 -4.2v3.9m1 -4.0v3.5m1 -3.5v3.9m1 -2.6v1.4m1 -3.2v5.5m1 -5.6v5.1m1 -4.5v3.8m1 -3.3v3.0m1 -2.5v1.9m1 -3.2v4.1m1 -3.3v2.5m1 -4.7v7.5m1 -8.1v8.3m1 -9.1v8.6m1 -8.6v8.2m1 -7.4v6.7m1 -6.6v7.5m1 -7.7v7.9m1 -6.6v5.8m1 -5.7v5.3m1 -4.5v4.3m1 -3.7v2.4m1 -4.1v5.5m1 -4.3v3.4m1 -3.1v3.0m1 -2.9v3.2m1 -3.0v2.5m1 -1.8v1.3m1 -3.0v4.5m1 -4.1v3.6m1 -3.3v2.8m1 -2.0v1.7m1 -3.8v6.0m1 -4.9v4.1m1 -4.4v3.6m1 -2.5v2.4m1 -2.5v2.2m1 -3.7v4.7m1 -3.9v3.6m1 -3.6v3.1m1 -2.1v2.0m1 -3.7v4.3m1 -2.9v2.7m1 -3.0v3.2m1 -2.6v2.1m1 -2.1v2.2m1 -2.0v1.8m1 -3.0v4.7m1 -9.2v13.1m1 -10.7v9.5m1 -9.8v9.4m1 -8.0v7.0m1 -7.3v6.1m1 -4.6v4.0m1 -4.0v3.7m1 -3.6v4.2m1 -4.0v4.1m1 -4.9v4.9m1 -4.6v4.2m1 -4.0v3.9m1 -3.3v3.0m1 -2.3v1.5m1 -1.3v1.1m1 -2.7v4.1m1 -4.0v3.9m1 -2.9v2.1m1 -7.0v10.7m1 -8.3v7.7m1 -7.8v7.3m1 -7.1v7.0m1 -7.4v5.6m1 -5.0v5.7m1 -5.1v4.3m1 -4.4v4.6m1 -4.9v5.5m1 -4.9v4.1m1 -2.7v1.7m1 -3.7v5.1m1 -4.2v3.6m1 -3.9v3.8m1 -2.7v2.4m1 -2.3v2.1m1 -1.8v1.3m1 -2.3v3.6m1 -4.3v4.1m1 -3.2v3.3m1 -2.8v2.1m1 -2.4v1.9m1 -1.6v1.6m1 -2.5v3.9m1 -4.1v3.9m1 -3.5v2.8m1 -2.1v2.4m1 -3.9v4.9m1 -4.1v3.6m1 -4.4v4.5m1 -3.7v2.8m1 -2.4v2.7m1 -2.5v2.0m1 -1.9v1.7m1 -2.8v3.3m1 -2.4v2.7m1 -2.7v2.4m1 -6.3v9.7m1 -8.1v7.7m1 -8.0v7.3m1 -5.9v5.4m1 -5.6v5.6m1 -6.3v5.1m1 -4.8v5.4m1 -5.4v5.3m1 -5.6v5.3m1 -4.4v4.8m1 -3.5v2.1m1 -2.2v2.1m1 -2.8v3.2m1 -3.4v4.0m1 -3.3v2.3m1 -1.6v1.7m1 -4.2v5.0m1 -3.6v3.8m1 -6.5v9.9m1 -9.5v8.9m1 -7.9v6.8m1 -8.2v8.2m1 -5.9v4.3m1 -5.0v5.3m1 -4.7v4.7m1 -4.9v5.4m1 -4.9v4.3m1 -4.2v4.2m1 -4.5v3.9m1 -3.1v3.3m1 -2.5v2.1m1 -1.9v1.3m1 -3.0v4.6m1 -3.7v3.1m1 -2.8v2.5m1 -2.5v2.0m1 -1.7v1.7m1 -4.7v7.7m1 -6.8v5.8m1 -6.2v6.6m1 -6.8v6.6m1 -5.5v4.2m1 -5.0v4.8m1 -4.1v4.8m1 -4.9v4.4m1 -4.9v4.8m1 -4.2v4.8m1 -4.1v3.4m1 -3.6v3.6m1 -3.1v2.7m1 -2.4v1.9m1 -1.9v1.7m1 -1.8v1.7m1 -3.1v5.5m1 -5.5v4.2m1 -7.2v10.0m1 -8.4v7.9m1 -7.3v6.3m1 -7.4v7.5m1 -7.4v6.7m1 -5.1v4.8m1 -5.8v6.6m1 -5.2v4.3m1 -5.6v6.3m1 -6.3v5.6m1 -3.9v3.2m1 -2.7v2.7m1 -3.8v4.3m1 -4.4v4.1m1 -2.8v3.2m1 -3.0v2.2m1 -2.3v2.5m1 -2.5v2.3m1 -4.6v8.2m1 -10.4v9.1m1 -8.2v8.2m1 -6.7v5.9m1 -6.5v7.3m1 -7.3v7.1m1 -5.2v4.4m1 -4.4v5.4m1 -5.2v3.9m1 -4.1v4.0m1 -2.9v2.4m1 -2.2v1.7m1 -2.5v3.9m1 -4.2v3.7m1 -3.2v3.2m1 -2.5v1.7m1 -3.0v4.1m1 -4.2v3.8m1 -3.2v2.7m1 -6.1v9.4m1 -7.7v5.6m1 -5.4v5.7m1 -6.5v6.1m1 -5.4v5.7m1 -6.0v5.1m1 -4.7v4.9m1 -3.6v3.6m1 -4.4v4.3m1 -3.3v3.7m1 -3.4v2.3m1 -2.3v1.8m1 -1.4v1.2m1 -2.6v3.8m1 -4.4v4.6m1 -4.4v3.7m1 -2.7v2.6m1 -2.8v2.9m1 -8.1v11.7m1 -8.7v8.0m1 -7.9v6.6m1 -7.0v7.3m1 -6.0v6.1m1 -7.6v8.2m1 -7.1v5.5m1 -5.5v5.1m1 -4.7v4.6m1 -5.2v5.8m1 -4.1v3.0m1 -2.7v3.0m1 -2.6v1.8m1 -3.7v6.2m1 -5.4v4.4m1 -4.3v3.4m1 -2.6v2.2m1 -2.7v3.2m1 -7.5v10.3m1 -8.2v8.6m1 -8.3v7.0m1 -6.3v6.6m1 -6.3v5.5m1 -6.2v6.2m1 -5.0v4.3m1 -5.1v5.7m1 -5.2v6.2m1 -6.1v4.6m1 -3.8v3.5m1 -3.7v3.6m1 -2.7v2.1m1 -3.0v4.1m1 -4.1v3.5m1 -3.0v3.0m1 -2.9v2.5m1 -2.4v2.0m1 -1.8v1.4m1 -6.5v11.3m1 -9.2v7.3m1 -8.3v7.5m1 -6.2v6.5m1 -7.3v6.5m1 -5.7v6.6m1 -6.6v5.3m1 -5.6v6.0m1 -5.8v6.2m1 -4.8v4.3m1 -4.1v3.3m1 -2.9v2.7m1 -2.3v2.0m1 -4.4v5.6m1 -4.7v4.1m1 -4.0v4.6m1 -4.1v3.0m1 -2.3v2.2m1 -5.9v9.5m1 -11.4v12.6m1 -9.7v8.9m1 -9.4v7.9m1 -7.5v6.9m1 -5.9v5.3m1 -5.8v6.7m1 -6.6v6.4m1 -5.7v5.3m1 -5.7v5.8m1 -3.3v1.8m1 -2.7v3.8m1 -3.2v2.5m1 -3.0v2.7m1 -1.9v1.6m1 -1.8v1.7m1 -1.3v1.2m1 -3.8v5.7m1 -7.8v8.7m1 -8.8v10.2m1 -9.2v8.8m1 -8.4v7.8m1 -7.2v6.1m1 -4.6v4.8m1 -6.1v5.0m1 -3.6v3.7m1 -3.9v4.1m1 -4.1v3.8m1 -2.9v2.2m1 -2.1v1.8m1 -3.3v4.1m1 -4.4v4.9m1 -4.1v3.1m1 -2.4v2.2m1 -1.9v1.3m1 -2.4v3.9m1 -3.9v3.7m1 -6.4v8.9m1 -8.6v8.3m1 -7.6v6.2m1 -5.6v5.7m1 -5.9v5.9m1 -5.0v4.2m1 -3.9v3.8m1 -4.1v4.6m1 -3.9v3.6m1 -4.3v4.0m1 -2.3v1.5m1 -3.6v4.9m1 -4.4v4.0m1 -3.5v3.7m1 -3.4v2.7m1 -2.8v3.3m1 -3.1v2.3m1 -1.9v1.5m1 -3.9v6.1m1 -5.5v6.4m1 -7.5v6.9m1 -6.4v5.9m1 -5.9v5.9m1 -5.2v4.4m1 -4.2v4.4m1 -4.9v4.6m1 -4.1v5.2m1 -4.8v4.4m1 -3.7v2.9m1 -2.7v2.0m1 -3.6v4.9m1 -4.0v4.2m1 -4.4v3.5m1 -3.0v2.6m1 -2.1v1.8m1 -1.5v1.6m1 -5.4v7.3m1 -6.5v7.0m1 -6.4v5.5m1 -4.9v5.2m1 -4.9v5.3m1 -5.4v4.7m1 -4.3v4.3m1 -5.4v5.2m1 -3.8v3.8m1 -4.9v4.5m1 -3.0v2.6m1 -2.6v2.5m1 -1.8v1.7m1 -3.0v4.1m1 -3.8v3.6m1 -2.8v1.9m1 -1.7v1.4m1 -3.7v5.3m1 -4.2v3.8m1 -6.7v8.6m1 -7.3v7.1m1 -6.8v5.8m1 -5.3v4.7m1 -4.6v5.5m1 -5.2v4.4m1 -4.7v4.9m1 -4.2v4.0m1 -5.2v5.0m1 -3.8v4.6m1 -5.2v4.0m1 -2.7v3.0m1 -2.9v2.6m1 -2.1v1.6m1 -2.9v4.0m1 -4.3v4.2m1 -3.9v3.9m1 -3.2v2.8m1 -4.7v6.9m1 -7.1v7.4m1 -6.6v6.7m1 -7.0v6.6m1 -7.4v7.5m1 -6.3v6.0m1 -6.9v5.7m1 -5.2v6.0m1 -5.5v4.8m1 -4.3v4.5m1 -3.4v1.9m1 -2.6v3.9m1 -3.8v3.5m1 -3.2v2.6m1 -2.0v2.0m1 -2.0v1.4m1 -3.2v5.0m1 -4.6v4.6m1 -7.7v9.0m1 -7.3v7.5m1 -6.8v7.1m1 -6.4v5.0m1 -5.2v5.1m1 -4.6v4.0m1 -6.1v7.3m1 -5.8v5.2m1 -4.8v4.2m1 -4.5v5.7m1 -4.4v2.0m1 -2.8v3.6m1 -4.6v5.1m1 -4.6v4.4m1 -3.9v3.1m1 -2.3v2.1m1 -1.8v1.5m1 -1.6v1.5m1 -2.6v4.1m1 -7.4v9.9m1 -9.1v8.4m1 -8.4v7.7m1 -6.4v6.2m1 -5.9v4.8m1 -4.4v4.6m1 -4.3v3.7m1 -3.9v4.2m1 -5.1v5.3m1 -5.5v6.3m1 -5.2v4.1m1 -3.3v2.8m1 -2.4v2.3m1 -4.5v5.7m1 -4.3v3.6m1 -3.8v3.7m1 -2.7v2.5m1 -2.3v1.9m1 -5.5v8.6m1 -7.3v7.1m1 -6.7v6.7m1 -6.4v5.5m1 -6.4v6.5m1 -6.0v6.0m1 -6.1v5.6m1 -4.7v3.9m1 -4.4v4.9m1 -4.3v4.5m1 -3.7v2.3m1 -2.1v1.9m1 -3.2v4.6m1 -4.5v4.1m1 -3.3v2.4m1 -2.0v1.8m1 -3.0v3.5m1 -2.9v2.9m1 -5.4v7.4m1 -8.4v7.6m1 -6.0v6.1m1 -4.9v4.5m1 -4.5v4.4m1 -5.3v4.7m1 -3.8v4.4m1 -4.7v3.8m1 -3.2v3.5m1 -4.2v4.3m1 -2.5v1.5m1 -2.9v3.7m1 -3.7v4.0m1 -3.6v3.1m1 -3.1v3.1m1 -2.7v1.9m1 -1.6v1.6m1 -3.4v5.4m1 -4.8v4.1m1 -6.4v8.3m1 -8.6v8.4m1 -7.6v7.4m1 -6.2v5.9m1 -6.5v5.4m1 -5.7v5.9m1 -5.3v5.6m1 -5.9v6.2m1 -5.8v6.0m1 -5.9v5.3m1 -3.9v2.1m1 -3.8v6.0m1 -4.8v4.2m1 -4.6v4.0m1 -3.8v3.8m1 -2.9v2.3m1 -2.3v2.1m1 -3.7v5.0m1 -7.4v8.0m1 -6.4v7.5m1 -8.0v7.2m1 -5.8v5.4m1 -5.5v5.1m1 -5.6v6.3m1 -6.3v6.2m1 -5.8v5.0m1 -5.2v5.2m1 -4.2v4.7m1 -3.7v1.7m1 -2.4v3.1m1 -3.9v3.8m1 -2.8v3.1m1 -2.8v2.4m1 -2.3v2.2m1 -1.8v1.3m1 -3.1v4.9m1 -4.1v3.5m1 -5.0v6.6m1 -7.7v8.6m1 -7.5v5.9m1 -5.0v4.9m1 -5.0v4.2m1 -4.2v4.3m1 -3.7v4.3m1 -4.7v4.8m1 -5.8v5.9m1 -6.0v5.6m1 -4.3v3.1m1 -2.5v2.4m1 -2.6v3.4m1 -4.2v4.3m1 -3.6v3.3m1 -2.4v1.7m1 -1.6v1.5m1 -3.7v4.7m1 -7.8v10.4m1 -8.0v6.5m1 -6.4v6.9m1 -6.4v5.5m1 -6.1v6.2m1 -5.0v5.2m1 -5.0v4.4m1 -4.1v3.8m1 -5.0v5.4m1 -4.7v4.7m1 -4.3v3.6m1 -2.9v2.3m1 -1.7v1.4m1 -3.0v3.9m1 -3.9v4.0m1 -3.1v2.7m1 -2.5v2.1m1 -1.9v1.7m1 -5.5v9.1m1 -10.9v11.5m1 -9.0v8.6m1 -7.4v7.1m1 -8.6v7.7m1 -5.7v5.0m1 -6.1v6.2m1 -5.0v4.3m1 -4.0v4.3m1 -4.4v4.2m1 -4.8v5.0m1 -4.2v3.8m1 -3.2v3.0m1 -3.3v2.7m1 -2.4v2.0m1 -1.7v1.5m1 -3.9v6.2m1 -5.7v5.1m1 -3.7v2.9m1 -5.8v8.8m1 -8.5v6.4m1 -5.2v5.4m1 -4.9v4.6m1 -5.0v5.1m1 -4.6v4.6m1 -5.5v5.7m1 -5.3v5.7m1 -4.7v4.8m1 -4.9v3.9m1 -3.8v3.7m1 -3.1v2.5m1 -2.1v1.7m1 -2.4v3.3m1 -3.0v2.6m1 -3.2v3.7m1 -3.0v2.3m1 -2.0v2.0m1 -4.7v6.3m1 -7.4v9.1m1 -7.0v5.7m1 -5.9v6.0m1 -6.1v5.4m1 -4.9v5.0m1 -5.2v5.0m1 -5.2v5.1m1 -5.4v5.3m1 -5.0v5.6m1 -3.7v1.8m1 -4.0v5.9m1 -4.6v3.8m1 -3.4v2.6m1 -2.6v2.6m1 -1.8v1.3m1 -2.1v3.6m1 -3.6v3.0m1 -6.4v9.9m1 -9.3v7.2m1 -7.7v7.6m1 -6.3v6.9m1 -6.1v6.2m1 -6.6v6.1m1 -4.9v4.5m1 -4.6v4.2m1 -4.8v4.3m1 -3.7v3.6m1 -5.8v7.2m1 -5.8v5.2m1 -5.1v4.3m1 -3.2v2.7m1 -2.8v2.9m1 -2.6v2.2m1 -4.2v6.3m1 -5.2v4.0m1 -3.5v3.0m1 -5.9v8.1m1 -6.5v7.1m1 -7.7v7.1m1 -6.9v6.5m1 -6.4v5.5m1 -4.6v5.5m1 -5.2v3.7m1 -4.2v4.9m1 -4.8v4.3m1 -3.5v3.9m1 -3.0v1.7m1 -3.3v3.9m1 -2.8v2.9m1 -3.2v2.9m1 -2.6v2.0m1 -3.7v5.1m1 -4.5v4.0m1 -3.3v3.2m1 -6.1v9.2m1 -8.6v7.2m1 -6.9v6.7m1 -6.0v5.1m1 -5.4v5.4m1 -4.2v3.8m1 -4.6v5.7m1 -6.1v5.7m1 -5.9v5.6m1 -4.8v5.4m1 -3.9v1.9m1 -4.4v5.4m1 -4.2v4.8m1 -4.4v3.2m1 -2.4v2.1m1 -4.1v5.2m1 -4.4v4.4m1 -4.2v3.6m1 -6.3v8.6m1 -8.6v8.0m1 -8.1v8.1m1 -6.2v7.5m1 -7.9v7.2m1 -6.7v5.6m1 -5.5v6.6m1 -5.9v5.3m1 -6.3v5.9m1 -4.9v4.9m1 -4.4v3.2m1 -2.3v2.0m1 -2.1v1.7m1 -2.8v4.0m1 -4.2v3.7m1 -2.6v2.6m1 -2.5v2.2m1 -1.7v1.3m1 -3.3v4.4m1 -3.9v3.9m1 -3.8v3.5m1 -3.1v2.8m1 -2.5v2.0m1 -1.3v1.4m1 -4.3v5.3m1 -4.8v5.3m1 -4.8v4.5m1 -3.5v2.6m1 -2.5v2.5m1 -3.5v4.1m1 -3.7v4.1m1 -3.8v2.8m1 -2.9v3.1m1 -2.2v1.5m1 -3.9v5.6m1 -4.6v4.6m1 -3.8v3.2m1 -5.5v7.2m1 -7.9v8.2m1 -8.6v7.7m1 -7.4v7.4m1 -6.0v5.5m1 -5.3v6.8m1 -6.7v6.4m1 -6.3v5.2m1 -4.1v3.7m1 -3.6v3.4m1 -2.9v2.3m1 -2.3v2.3m1 -1.8v1.4m1 -2.4v3.3m1 -3.3v2.9m1 -2.6v2.4m1 -2.1v1.8m1 -4.0v6.4m1 -11.0v12.8m1 -11.5v11.5m1 -10.5v9.8m1 -8.5v7.8m1 -7.9v7.8m1 -7.7v8.1m1 -6.9v5.5m1 -5.1v5.6m1 -5.7v5.9m1 -5.1v4.8m1 -5.6v5.8m1 -4.9v4.0m1 -3.3v3.0m1 -4.6v5.4m1 -4.5v4.7m1 -4.3v3.5m1 -2.9v2.5m1 -2.2v1.9m1 -3.7v5.1m1 -7.3v7.5m1 -5.1v5.3m1 -6.3v6.3m1 -5.1v4.1m1 -3.9v3.8m1 -4.2v5.8m1 -5.8v4.7m1 -5.4v5.3m1 -5.1v5.4m1 -5.2v5.1m1 -4.2v3.2m1 -2.5v2.2m1 -1.8v1.7m1 -3.4v5.3m1 -5.1v3.9m1 -3.0v3.2m1 -3.3v2.7m1 -1.9v1.6m1 -6.0v9.7m1 -10.1v9.8m1 -7.6v6.5m1 -6.6v5.9m1 -5.5v5.2m1 -5.5v6.6m1 -6.8v6.2m1 -5.2v5.0m1 -5.3v4.8m1 -4.7v5.1m1 -3.8v2.9m1 -3.0v2.7m1 -3.5v4.3m1 -4.4v4.6m1 -3.9v3.5m1 -3.4v3.2m1 -3.3v2.9m1 -2.3v2.2m1 -1.9v1.5m1 -2.4v4.1m1 -3.7v3.1m1 -3.0v2.5m1 -2.4v2.0m1 -1.5v1.6m1 -2.9v3.8m1 -4.3v4.2m1 -3.1v3.1m1 -3.2v2.3m1 -4.3v6.0m1 -5.7v5.4m1 -4.5v4.0m1 -2.7v2.0m1 -3.4v3.9m1 -3.0v3.6m1 -4.2v3.7m1 -2.6v2.4m1 -2.9v2.6m1 -4.7v6.2m1 -6.1v6.9m1 -6.4v4.8m1 -4.1v5.2m1 -5.9v5.8m1 -4.8v3.7m1 -4.3v4.7m1 -4.3v4.1m1 -4.9v6.0m1 -5.9v5.4m1 -4.3v3.5m1 -3.1v2.8m1 -2.4v2.5m1 -4.7v5.5m1 -4.7v5.2m1 -4.3v3.9m1 -3.9v2.8m1 -2.0v1.8m1 -5.0v8.2m1 -8.7v8.5m1 -8.2v7.1m1 -6.7v6.7m1 -5.4v5.9m1 -6.5v5.4m1 -5.8v6.1m1 -5.7v6.4m1 -5.7v5.0m1 -5.4v5.0m1 -4.8v5.7m1 -5.5v4.3m1 -3.9v4.0m1 -3.4v3.1m1 -2.8v2.5m1 -2.2v1.9m1 -2.9v3.4m1 -3.2v2.9m1 -5.6v8.4m1 -7.0v5.3m1 -5.8v6.4m1 -5.4v4.7m1 -4.9v4.5m1 -4.0v4.2m1 -4.0v3.6m1 -4.2v4.4m1 -5.3v6.6m1 -6.1v5.0m1 -4.4v4.0m1 -3.6v3.4m1 -2.8v2.7m1 -2.3v1.9m1 -2.8v3.4m1 -3.2v3.7m1 -3.1v2.2m1 -2.2v2.0m1 -2.0v1.6m1 -4.7v7.5m1 -7.6v8.8m1 -8.6v7.9m1 -7.6v6.7m1 -6.2v5.4m1 -6.5v7.8m1 -6.0v4.9m1 -6.1v6.5m1 -6.3v6.6m1 -4.9v4.2m1 -4.0v3.0m1 -3.3v3.7m1 -3.0v2.4m1 -2.4v2.1m1 -1.6v1.7m1 -2.6v4.1m1 -4.7v4.5m1 -3.6v2.6m1 -2.5v2.3m1 -2.4v2.4m1 -2.1v1.8m1 -3.6v6.0m1 -5.0v3.6m1 -4.0v4.0m1 -3.3v3.2m1 -2.6v1.8m1 -3.7v5.1m1 -4.0v3.4m1 -3.8v3.7m1 -2.5v2.2m1 -2.5v2.1m1 -3.4v4.6m1 -4.5v4.3m1 -3.8v3.7m1 -3.7v3.2m1 -2.7v2.3m1 -3.0v4.0m1 -6.6v8.4m1 -9.4v8.9m1 -7.8v8.5m1 -7.1v5.2m1 -5.0v6.4m1 -7.2v6.4m1 -6.0v5.6m1 -5.5v6.4m1 -6.2v5.6m1 -5.2v4.4m1 -3.2v3.0m1 -2.5v2.0m1 -2.3v2.3m1 -3.6v5.1m1 -5.1v4.8m1 -3.9v3.3m1 -3.5v3.6m1 -2.7v2.2m1 -6.9v9.9m1 -9.1v8.3m1 -7.7v7.7m1 -6.9v5.6m1 -5.8v6.9m1 -5.9v4.4m1 -4.2v3.8m1 -3.4v3.6m1 -3.4v3.2m1 -2.7v2.8m1 -2.1v1.2m1 -2.4v3.2m1 -2.7v3.2m1 -3.0v2.6m1 -2.6v1.8m1 -1.6v1.5m1 -2.2v3.3m1 -3.1v2.6m1 -3.0v3.2m1 -2.5v2.0m1 -2.2v1.9m1 -1.3v1.1m1 -2.7v3.7m1 -3.1v3.3m1 -2.9v2.1m1 -1.7v1.5m1 -1.3v1.1m1 -2.8v4.1m1 -3.3v3.1m1 -2.8v2.1m1 -1.8v1.7m1 -1.2v1.0m1 -2.2v2.8m1 -2.4v2.8m1 -2.6v1.9m1 -1.6v1.5m1 -2.1v2.5m1 -2.3v2.0m1 -1.8v1.6m1 -1.3v1.1m1 -1.7v2.1m1 -1.7v1.7m1 -1.3v0.9m1 -0.9v0.9m1 -2.0v3.0m1 -2.8v2.6m1 -2.1v1.4m1 -1.3v1.4m1 -1.2v0.9m1 -0.8v0.7m1 -1.2v1.4m1 -1.4v1.4m1 -1.0v0.8m1 -0.8v0.6m1 -1.3v2.1m1 -3.0v3.7m1 -3.0v2.2m1 -2.1v2.0m1 -2.0v2.1m1 -2.1v2.2m1 -2.1v1.9m1 -1.7v1.6m1 -1.7v1.4m1 -1.5v1.5m1 -1.3v1.2m1 -1.1v1.1m1 -1.0v1.0m1 -0.8v0.7m1 -0.6v0.6m1 -0.6v0.6m1 -0.8v0.8m1 -0.8v0.8" fill="none" stroke="#5c2e28" stroke-opacity="0.95" stroke-width="1"/>
<path d="M573.4 123.5 L573.4 134.5 Q573.4 137.5 576 137.5 Q578.6 137.5 578.6 134.5 L578.6 132.0" stroke="#0c0c0c" stroke-width="2.6" fill="none"/><path d="M573.4 123.5 L573.4 134.5 Q573.4 137.5 576 137.5 Q578.6 137.5 578.6 134.5 L578.6 132.0" stroke="#7a7a7a" stroke-width="0.6" fill="none"/>
<path d="M1160.6 123.5 L1160.6 134.5 Q1160.6 137.5 1163.2 137.5 Q1165.8 137.5 1165.8 134.5 L1165.8 132.0" stroke="#0c0c0c" stroke-width="2.6" fill="none"/><path d="M1160.6 123.5 L1160.6 134.5 Q1160.6 137.5 1163.2 137.5 Q1165.8 137.5 1165.8 134.5 L1165.8 132.0" stroke="#7a7a7a" stroke-width="0.6" fill="none"/>
<path d="M1747.8 123.5 L1747.8 134.5 Q1747.8 137.5 1750.4 137.5 Q1753 137.5 1753 134.5 L1753 132.0" stroke="#0c0c0c" stroke-width="2.6" fill="none"/><path d="M1747.8 123.5 L1747.8 134.5 Q1747.8 137.5 1750.4 137.5 Q1753 137.5 1753 134.5 L1753 132.0" stroke="#7a7a7a" stroke-width="0.6" fill="none"/>
<rect x="1169.0" y="178.5" width="587.2" height="69.5" rx="3" fill="#57bd86"/>
<rect x="1169" y="203.5" width="587.2" height="1" fill="rgba(30,80,50,0.35)" />
<rect x="1168.5" y="204.5" width="1" height="43" fill="rgba(30,90,55,0.30)" />
<rect x="1205.2" y="204.5" width="1" height="43" fill="rgba(30,90,55,0.30)" />
<rect x="1241.9" y="204.5" width="1" height="43" fill="rgba(30,90,55,0.30)" />
<rect x="1278.6" y="204.5" width="1" height="43" fill="rgba(30,90,55,0.30)" />
<rect x="1315.3" y="204.5" width="1" height="43" fill="rgba(30,90,55,0.30)" />
<rect x="1352" y="204.5" width="1" height="43" fill="rgba(30,90,55,0.30)" />
<rect x="1388.7" y="204.5" width="1" height="43" fill="rgba(30,90,55,0.30)" />
<rect x="1425.4" y="204.5" width="1" height="43" fill="rgba(30,90,55,0.30)" />
<rect x="1462.1" y="204.5" width="1" height="43" fill="rgba(30,90,55,0.30)" />
<rect x="1498.8" y="204.5" width="1" height="43" fill="rgba(30,90,55,0.30)" />
<rect x="1535.5" y="204.5" width="1" height="43" fill="rgba(30,90,55,0.30)" />
<rect x="1572.2" y="204.5" width="1" height="43" fill="rgba(30,90,55,0.30)" />
<rect x="1608.9" y="204.5" width="1" height="43" fill="rgba(30,90,55,0.30)" />
<rect x="1645.6" y="204.5" width="1" height="43" fill="rgba(30,90,55,0.30)" />
<rect x="1682.3" y="204.5" width="1" height="43" fill="rgba(30,90,55,0.30)" />
<rect x="1719" y="204.5" width="1" height="43" fill="rgba(30,90,55,0.30)" />
<text x="1173.5" y="195.6" font-size="12" fill="#1f3b2b" font-weight="normal" text-anchor="start" stroke="#1f3b2b" stroke-width="0.2" >25 Mad</text>
<rect x="1183" y="235" width="24.7" height="2" fill="#357a55" />
<rect x="1206.4" y="231.5" width="34.4" height="2" fill="#357a55" />
<rect x="1249" y="228.2" width="38" height="2" fill="#357a55" />
<rect x="1324.5" y="224.8" width="35.2" height="2" fill="#357a55" />
<rect x="1394" y="228.2" width="21.5" height="2" fill="#357a55" />
<rect x="1419.8" y="231.5" width="25" height="2" fill="#357a55" />
<rect x="1463" y="226.6" width="25" height="2" fill="#357a55" />
<rect x="1463" y="234.6" width="25" height="2" fill="#357a55" />
<rect x="1499.6" y="223" width="28.4" height="2" fill="#357a55" />
<rect x="1499.6" y="231.7" width="28.4" height="2" fill="#357a55" />
<rect x="1535" y="219" width="52" height="2" fill="#357a55" />
<rect x="1535" y="228" width="52" height="2" fill="#357a55" />
<rect x="1612" y="216.4" width="47" height="2" fill="#357a55" />
<rect x="1612" y="224.8" width="47" height="2" fill="#357a55" />
<rect x="1686.6" y="214.6" width="48.4" height="2" fill="#357a55" />
<rect x="1686.6" y="223" width="48.4" height="2" fill="#357a55" />
<defs><linearGradient id="sawl" x1="0" y1="0" x2="0" y2="1"><stop offset="0" stop-color="#34604d"/><stop offset="1" stop-color="#28473a"/></linearGradient></defs>
<path d="M568 282.3 L1169.0 287 L1169.0 291.5 L568 291.5 Z" fill="url(#sawl)"/>
<rect x="581.3" y="284" width="1" height="7.5" fill="rgba(150,230,190,0.12)" />
<rect x="618" y="284" width="1" height="7.5" fill="rgba(150,230,190,0.12)" />
<rect x="654.7" y="284" width="1" height="7.5" fill="rgba(150,230,190,0.12)" />
<rect x="691.4" y="284" width="1" height="7.5" fill="rgba(150,230,190,0.12)" />
<rect x="728.1" y="284" width="1" height="7.5" fill="rgba(150,230,190,0.12)" />
<rect x="764.8" y="284" width="1" height="7.5" fill="rgba(150,230,190,0.12)" />
<rect x="801.5" y="284" width="1" height="7.5" fill="rgba(150,230,190,0.12)" />
<rect x="838.2" y="284" width="1" height="7.5" fill="rgba(150,230,190,0.12)" />
<rect x="874.9" y="284" width="1" height="7.5" fill="rgba(150,230,190,0.12)" />
<rect x="911.6" y="284" width="1" height="7.5" fill="rgba(150,230,190,0.12)" />
<rect x="948.3" y="284" width="1" height="7.5" fill="rgba(150,230,190,0.12)" />
<rect x="985" y="284" width="1" height="7.5" fill="rgba(150,230,190,0.12)" />
<rect x="1021.7" y="284" width="1" height="7.5" fill="rgba(150,230,190,0.12)" />
<rect x="1058.4" y="284" width="1" height="7.5" fill="rgba(150,230,190,0.12)" />
<rect x="1095.1" y="284" width="1" height="7.5" fill="rgba(150,230,190,0.12)" />
<rect x="1131.8" y="284" width="1" height="7.5" fill="rgba(150,230,190,0.12)" />
<path d="M568 282.3 L1169.0 287" stroke="#5fd3a2" stroke-width="2"/>
<defs><linearGradient id="sawg" x1="0" y1="0" x2="1" y2="0"><stop offset="0" stop-color="#5fc48f"/><stop offset="0.55" stop-color="#56b584"/><stop offset="1" stop-color="#3f8f66"/></linearGradient></defs>
<rect x="1169" y="249.5" width="36.7" height="42" fill="url(#sawg)" />
<path d="M1169 286.7 L1174 286.7 Q1181 286 1184 259.4 L1186.8 284.4 Q1194 262 1205.4 255.5" stroke="#0a0a0a" stroke-width="1.9" fill="none"/>
<rect x="1205.7" y="249.5" width="36.7" height="42" fill="url(#sawg)" />
<path d="M1205.7 286.7 L1210.7 286.7 Q1217.7 286 1220.7 259.4 L1223.5 284.4 Q1230.7 262 1242.1 255.5" stroke="#0a0a0a" stroke-width="1.9" fill="none"/>
<rect x="1242.4" y="249.5" width="36.7" height="42" fill="url(#sawg)" />
<path d="M1242.4 286.7 L1247.4 286.7 Q1254.4 286 1257.4 259.4 L1260.2 284.4 Q1267.4 262 1278.8 255.5" stroke="#0a0a0a" stroke-width="1.9" fill="none"/>
<rect x="1279.1" y="249.5" width="36.7" height="42" fill="url(#sawg)" />
<path d="M1279.1 286.7 L1284.1 286.7 Q1291.1 286 1294.1 259.4 L1296.9 284.4 Q1304.1 262 1315.5 255.5" stroke="#0a0a0a" stroke-width="1.9" fill="none"/>
<rect x="1315.8" y="249.5" width="36.7" height="42" fill="url(#sawg)" />
<path d="M1315.8 286.7 L1320.8 286.7 Q1327.8 286 1330.8 259.4 L1333.6 284.4 Q1340.8 262 1352.2 255.5" stroke="#0a0a0a" stroke-width="1.9" fill="none"/>
<rect x="1352.5" y="249.5" width="36.7" height="42" fill="url(#sawg)" />
<path d="M1352.5 286.7 L1357.5 286.7 Q1364.5 286 1367.5 259.4 L1370.3 284.4 Q1377.5 262 1388.9 255.5" stroke="#0a0a0a" stroke-width="1.9" fill="none"/>
<rect x="1389.2" y="249.5" width="36.7" height="42" fill="url(#sawg)" />
<path d="M1389.2 286.7 L1394.2 286.7 Q1401.2 286 1404.2 259.4 L1407 284.4 Q1414.2 262 1425.6 255.5" stroke="#0a0a0a" stroke-width="1.9" fill="none"/>
<rect x="1425.9" y="249.5" width="36.7" height="42" fill="url(#sawg)" />
<path d="M1425.9 286.7 L1430.9 286.7 Q1437.9 286 1440.9 259.4 L1443.7 284.4 Q1450.9 262 1462.3 255.5" stroke="#0a0a0a" stroke-width="1.9" fill="none"/>
<rect x="1462.6" y="249.5" width="36.7" height="42" fill="url(#sawg)" />
<path d="M1462.6 286.7 L1467.6 286.7 Q1474.6 286 1477.6 259.4 L1480.4 284.4 Q1487.6 262 1499 255.5" stroke="#0a0a0a" stroke-width="1.9" fill="none"/>
<rect x="1499.3" y="249.5" width="36.7" height="42" fill="url(#sawg)" />
<path d="M1499.3 286.7 L1504.3 286.7 Q1511.3 286 1514.3 259.4 L1517.1 284.4 Q1524.3 262 1535.7 255.5" stroke="#0a0a0a" stroke-width="1.9" fill="none"/>
<rect x="1536" y="249.5" width="36.7" height="42" fill="url(#sawg)" />
<path d="M1536 286.7 L1541 286.7 Q1548 286 1551 259.4 L1553.8 284.4 Q1561 262 1572.4 255.5" stroke="#0a0a0a" stroke-width="1.9" fill="none"/>
<rect x="1572.7" y="249.5" width="36.7" height="42" fill="url(#sawg)" />
<path d="M1572.7 286.7 L1577.7 286.7 Q1584.7 286 1587.7 259.4 L1590.5 284.4 Q1597.7 262 1609.1 255.5" stroke="#0a0a0a" stroke-width="1.9" fill="none"/>
<rect x="1609.4" y="249.5" width="36.7" height="42" fill="url(#sawg)" />
<path d="M1609.4 286.7 L1614.4 286.7 Q1621.4 286 1624.4 259.4 L1627.2 284.4 Q1634.4 262 1645.8 255.5" stroke="#0a0a0a" stroke-width="1.9" fill="none"/>
<rect x="1646.1" y="249.5" width="36.7" height="42" fill="url(#sawg)" />
<path d="M1646.1 286.7 L1651.1 286.7 Q1658.1 286 1661.1 259.4 L1663.9 284.4 Q1671.1 262 1682.5 255.5" stroke="#0a0a0a" stroke-width="1.9" fill="none"/>
<rect x="1682.8" y="249.5" width="36.7" height="42" fill="url(#sawg)" />
<path d="M1682.8 286.7 L1687.8 286.7 Q1694.8 286 1697.8 259.4 L1700.6 284.4 Q1707.8 262 1719.2 255.5" stroke="#0a0a0a" stroke-width="1.9" fill="none"/>
<rect x="1719.5" y="249.5" width="36.7" height="42" fill="url(#sawg)" />
<path d="M1719.5 286.7 L1724.5 286.7 Q1731.5 286 1734.5 259.4 L1737.3 284.4 Q1744.5 262 1755.9 255.5" stroke="#0a0a0a" stroke-width="1.9" fill="none"/>
<defs><linearGradient id="sawf" x1="0" y1="0" x2="0" y2="1"><stop offset="0" stop-color="#428d69"/><stop offset="1" stop-color="#2c5a45"/></linearGradient></defs>
<path d="M1756.2 258.6 L1889 258.6 L1889 291.5 L1756.2 291.5 Z" fill="url(#sawf)"/>
<rect x="1792.4" y="259" width="1" height="32.5" fill="rgba(120,220,170,0.16)" />
<rect x="1829.1" y="259" width="1" height="32.5" fill="rgba(120,220,170,0.16)" />
<rect x="1865.8" y="259" width="1" height="32.5" fill="rgba(120,220,170,0.16)" />
<path d="M1756.2 258.6 L1889 258.6" stroke="#5fd3a2" stroke-width="2"/>
<circle cx="1757.2" cy="258.6" r="2.2" fill="none" stroke="#9ff0cc" stroke-width="1"/>
<circle cx="1169.0" cy="287" r="2.2" fill="none" stroke="#9ff0cc" stroke-width="1"/>
<rect x="581.8" y="293" width="1307.2" height="94.5" rx="3" fill="#d4af6d"/>
<rect x="581.8" y="318.5" width="1307.2" height="1" fill="rgba(90,70,30,0.35)" />
<rect x="581.3" y="319.5" width="1" height="67.5" fill="rgba(110,85,40,0.30)" />
<rect x="618" y="319.5" width="1" height="67.5" fill="rgba(110,85,40,0.30)" />
<rect x="654.7" y="319.5" width="1" height="67.5" fill="rgba(110,85,40,0.30)" />
<rect x="691.4" y="319.5" width="1" height="67.5" fill="rgba(110,85,40,0.30)" />
<rect x="728.1" y="319.5" width="1" height="67.5" fill="rgba(110,85,40,0.30)" />
<rect x="764.8" y="319.5" width="1" height="67.5" fill="rgba(110,85,40,0.30)" />
<rect x="801.5" y="319.5" width="1" height="67.5" fill="rgba(110,85,40,0.30)" />
<rect x="838.2" y="319.5" width="1" height="67.5" fill="rgba(110,85,40,0.30)" />
<rect x="874.9" y="319.5" width="1" height="67.5" fill="rgba(110,85,40,0.30)" />
<rect x="911.6" y="319.5" width="1" height="67.5" fill="rgba(110,85,40,0.30)" />
<rect x="948.3" y="319.5" width="1" height="67.5" fill="rgba(110,85,40,0.30)" />
<rect x="985" y="319.5" width="1" height="67.5" fill="rgba(110,85,40,0.30)" />
<rect x="1021.7" y="319.5" width="1" height="67.5" fill="rgba(110,85,40,0.30)" />
<rect x="1058.4" y="319.5" width="1" height="67.5" fill="rgba(110,85,40,0.30)" />
<rect x="1095.1" y="319.5" width="1" height="67.5" fill="rgba(110,85,40,0.30)" />
<rect x="1131.8" y="319.5" width="1" height="67.5" fill="rgba(110,85,40,0.30)" />
<rect x="1168.5" y="319.5" width="1" height="67.5" fill="rgba(110,85,40,0.30)" />
<rect x="1205.2" y="319.5" width="1" height="67.5" fill="rgba(110,85,40,0.30)" />
<rect x="1241.9" y="319.5" width="1" height="67.5" fill="rgba(110,85,40,0.30)" />
<rect x="1278.6" y="319.5" width="1" height="67.5" fill="rgba(110,85,40,0.30)" />
<rect x="1315.3" y="319.5" width="1" height="67.5" fill="rgba(110,85,40,0.30)" />
<rect x="1352" y="319.5" width="1" height="67.5" fill="rgba(110,85,40,0.30)" />
<rect x="1388.7" y="319.5" width="1" height="67.5" fill="rgba(110,85,40,0.30)" />
<rect x="1425.4" y="319.5" width="1" height="67.5" fill="rgba(110,85,40,0.30)" />
<rect x="1462.1" y="319.5" width="1" height="67.5" fill="rgba(110,85,40,0.30)" />
<rect x="1498.8" y="319.5" width="1" height="67.5" fill="rgba(110,85,40,0.30)" />
<rect x="1535.5" y="319.5" width="1" height="67.5" fill="rgba(110,85,40,0.30)" />
<rect x="1572.2" y="319.5" width="1" height="67.5" fill="rgba(110,85,40,0.30)" />
<rect x="1608.9" y="319.5" width="1" height="67.5" fill="rgba(110,85,40,0.30)" />
<rect x="1645.6" y="319.5" width="1" height="67.5" fill="rgba(110,85,40,0.30)" />
<rect x="1682.3" y="319.5" width="1" height="67.5" fill="rgba(110,85,40,0.30)" />
<rect x="1719" y="319.5" width="1" height="67.5" fill="rgba(110,85,40,0.30)" />
<rect x="1755.7" y="319.5" width="1" height="67.5" fill="rgba(110,85,40,0.30)" />
<rect x="1792.4" y="319.5" width="1" height="67.5" fill="rgba(110,85,40,0.30)" />
<rect x="1829.1" y="319.5" width="1" height="67.5" fill="rgba(110,85,40,0.30)" />
<rect x="1865.8" y="319.5" width="1" height="67.5" fill="rgba(110,85,40,0.30)" />
<text x="585.8" y="310.4" font-size="12" fill="#2e2516" font-weight="normal" text-anchor="start" stroke="#2e2516" stroke-width="0.2" >PS - Melody Bass-bounce-1</text>
<path d="M581.5 352.1v0.7m1 -13.8v37.2m1 -34.7v28.6m1 -39.2v32.9m1 -27.6v33.4m1 -26.7v23.2m1 -29.7v29.8m1 -29.1v25.4m1 -20.0v19.0m1 -20.9v27.8m1 -27.9v25.8m1 -23.5v22.6m1 -19.9v15.7m1 -19.6v22.3m1 -20.0v15.0m1 -13.5v14.0m1 -13.8v17.2m1 -16.4v16.3m1 -19.9v14.7m1 -11.5v13.6m1 -11.5v10.8m1 -14.9v13.1m1 -11.2v11.0m1 -10.6v13.9m1 -12.0v7.9m1 -7.2v9.2m1 -8.7v6.7m1 -8.3v11.2m1 -10.7v8.6m1 -9.1v7.9m1 -7.5v7.6m1 -7.5v9.7m1 -7.9v6.5m1 -7.9v6.6m1 -5.5v7.6m1 -9.3v6.9m1 -6.0v7.9m1 -6.7v5.7m1 -5.1v4.5m1 -5.7v6.0m1 -6.1v5.0m1 -4.0v5.4m1 -5.7v4.8m1 -4.4v5.2m1 -5.4v3.6m1 -3.9v4.3m1 -3.6v3.4m1 -3.3v3.4m1 -2.8v3.2m1 -3.1v3.2m1 -3.1v3.0m1 -3.8v3.4m1 -3.2v2.8m1 -2.8v2.9m1 -2.3v2.8m1 -2.9v2.3m1 -2.6v2.5m1 -2.3v2.1m1 -2.1v2.2m1 -1.5v2.0m1 -2.0v1.9m1 -2.4v2.1m1 -1.4v1.0m1 -1.1v1.2m1 -1.4v1.6m1 -1.4v1.0m1 -0.9v0.9m1 -0.6v0.6m1 -0.8v0.7m1 -0.6v0.8m1 -0.9v0.8m1 -0.8v0.7m1 -0.7v0.9m1 -0.9v0.8m1 -0.6v0.6m1 -0.7v0.6m1 -0.7v0.6m1 -0.7v0.7m1 -0.5v0.6m1 -0.7v0.7m1 -0.7v0.6m1 -0.6v0.8m1 -0.9v0.9m1 -0.7v0.7m1 -1.0v0.8m1 -0.7v0.7m1 -0.8v0.7m1 -0.6v0.8m1 -0.7v0.7m1 -0.8v0.7m1 -0.7v0.8m1 -0.7v0.8m1 -0.6v0.6m1 -0.7v0.8m1 -0.8v0.7m1 -0.9v0.8m1 -0.9v0.7m1 -0.6v0.8m1 -0.8v0.7m1 -0.6v0.6m1 -0.7v0.7m1 -0.5v0.6m1 -0.7v0.7m1 -0.6v0.7m1 -0.8v0.8m1 -0.7v0.7m1 -0.9v0.9m1 -1.0v1.0m1 -0.7v0.6m1 -0.6v0.7m1 -0.7v0.6m1 -14.0v27.5m1 -38.4v49.7m1 -40.9v36.5m1 -36.9v33.1m1 -31.2v31.7m1 -29.4v24.3m1 -26.7v25.5m1 -24.0v31.2m1 -26.4v17.3m1 -24.2v23.3m1 -17.7v24.4m1 -27.0v20.9m1 -15.9v16.0m1 -17.5v21.1m1 -25.7v25.0m1 -23.9v24.4m1 -23.7v23.0m1 -23.1v17.3m1 -12.8v13.5m1 -14.8v16.0m1 -14.2v15.7m1 -15.7v12.0m1 -11.1v12.1m1 -13.5v13.7m1 -12.6v10.5m1 -10.1v10.5m1 -9.3v10.0m1 -9.9v10.3m1 -12.0v9.5m1 -9.1v9.7m1 -8.8v9.6m1 -10.5v11.2m1 -10.9v8.4m1 -7.6v7.9m1 -6.1v6.6m1 -7.8v8.5m1 -8.0v7.7m1 -8.0v5.9m1 -6.3v6.6m1 -6.0v5.4m1 -4.1v5.9m1 -5.9v4.0m1 -4.2v4.0m1 -5.2v7.0m1 -6.5v5.2m1 -5.5v5.6m1 -4.1v4.4m1 -4.7v3.8m1 -3.7v3.8m1 -3.5v3.8m1 -4.7v4.6m1 -3.2v3.3m1 -3.3v2.9m1 -3.9v4.1m1 -4.1v4.1m1 -3.2v2.4m1 -2.5v3.1m1 -2.8v2.3m1 -2.8v2.8m1 -2.6v2.7m1 -2.9v2.4m1 -1.6v2.3m1 -2.6v2.0m1 -1.5v1.5m1 -1.8v2.3m1 -2.0v1.4m1 -1.7v1.8m1 -1.8v2.1m1 -2.1v1.8m1 -1.5v1.1m1 -1.2v1.3m1 -1.0v1.0m1 -1.0v0.9m1 -0.9v1.0m1 -0.7v0.6m1 -0.8v0.9m1 -0.9v0.8m1 -0.6v0.9m1 -0.9v0.8m1 -0.9v0.8m1 -0.5v0.7m1 -0.8v0.7m1 -0.7v0.8m1 -0.6v0.6m1 -0.6v0.6m1 -0.8v0.8m1 -0.8v0.7m1 -0.5v0.6m1 -0.7v0.7m1 -0.7v0.8m1 -0.8v0.8m1 -0.9v0.9m1 -0.7v0.6m1 -0.8v0.8m1 -0.6v0.7m1 -0.6v0.7m1 -0.9v0.7m1 -0.7v0.9m1 -0.7v0.7m1 -0.9v0.8m1 -0.5v0.6m1 -0.6v0.6m1 -0.7v0.8m1 -0.7v0.6m1 -0.7v0.6m1 -0.6v0.6m1 -0.6v0.7m1 -0.9v0.8m1 -0.7v0.7m1 -0.8v0.9m1 -11.8v32.3m1 -34.3v24.5m1 -21.7v31.2m1 -39.1v32.5m1 -30.0v33.4m1 -27.4v26.6m1 -32.8v34.5m1 -27.3v22.6m1 -26.4v28.3m1 -26.3v23.7m1 -27.5v24.0m1 -20.1v23.6m1 -19.4v18.9m1 -20.2v15.7m1 -14.9v16.0m1 -16.6v15.2m1 -12.3v11.7m1 -13.7v11.6m1 -8.5v6.0m1 -5.3v3.8m1 -2.1v0.8m1 -0.8v0.8m1 -0.7v0.8m1 -0.8v0.7m1 -0.6v0.6m1 -0.7v0.8m1 -1.0v1.0m1 -1.0v0.8m1 -0.5v0.6m1 -0.6v0.6m1 -0.8v0.7m1 -0.7v0.7m1 -0.6v0.8m1 -0.8v0.7m1 -0.8v0.8m1 -0.7v0.7m1 -0.9v0.7m1 -17.4v36.6m1 -36.1v36.8m1 -38.3v32.2m1 -32.0v37.0m1 -33.8v31.0m1 -32.3v30.4m1 -24.0v22.6m1 -29.2v31.8m1 -24.2v21.1m1 -25.4v25.3m1 -20.8v21.1m1 -25.0v23.4m1 -24.4v24.0m1 -16.5v13.6m1 -17.7v15.7m1 -16.3v19.5m1 -17.3v13.6m1 -9.0v11.6m1 -13.0v10.2m1 -9.2v9.2m1 -7.7v6.4m1 -4.8v3.4m1 -2.6v0.7m1 -0.7v0.8m1 -0.8v0.7m1 -0.9v1.0m1 -0.8v0.7m1 -0.8v0.8m1 -0.7v0.6m1 -0.7v0.8m1 -0.8v0.6m1 -0.5v0.7m1 -0.9v0.9m1 -0.6v0.7m1 -0.9v0.8m1 -0.7v0.7m1 -12.7v34.4m1 -35.1v25.3m1 -34.1v33.6m1 -30.6v38.6m1 -31.8v25.8m1 -24.8v27.8m1 -34.9v34.4m1 -28.8v26.0m1 -24.5v25.5m1 -23.7v18.9m1 -22.0v21.6m1 -23.3v26.6m1 -19.8v13.9m1 -16.5v17.0m1 -15.8v18.7m1 -20.2v18.4m1 -16.3v18.5m1 -15.7v12.4m1 -15.9v15.7m1 -16.0v14.2m1 -9.4v10.6m1 -12.3v12.0m1 -10.6v10.7m1 -13.4v15.3m1 -13.8v10.6m1 -10.2v9.6m1 -7.3v9.6m1 -10.2v7.6m1 -9.3v9.0m1 -6.8v6.8m1 -8.7v10.2m1 -7.8v5.8m1 -7.7v7.8m1 -7.0v8.4m1 -7.9v7.2m1 -6.6v5.9m1 -6.3v5.9m1 -5.3v5.5m1 -5.1v6.4m1 -6.7v6.0m1 -6.0v4.6m1 -4.7v6.3m1 -6.1v5.3m1 -5.4v6.0m1 -4.9v3.5m1 -3.5v3.2m1 -2.9v3.0m1 -2.6v3.0m1 -2.9v2.9m1 -4.0v4.2m1 -3.1v3.0m1 -3.1v3.1m1 -3.6v3.2m1 -2.9v3.3m1 -3.0v2.8m1 -2.8v1.9m1 -1.8v1.7m1 -2.2v2.3m1 -2.0v2.1m1 -1.8v2.2m1 -2.3v1.8m1 -1.9v1.7m1 -1.2v1.5m1 -2.0v2.0m1 -1.8v1.8m1 -1.8v1.6m1 -1.1v1.1m1 -1.1v1.0m1 -0.9v0.6m1 -0.6v0.6m1 -0.7v0.8m1 -0.8v0.7m1 -0.7v0.8m1 -0.7v0.6m1 -0.8v0.8m1 -0.7v0.6m1 -0.6v0.7m1 -0.7v0.8m1 -0.7v0.7m1 -0.8v0.7m1 -0.7v0.7m1 -0.5v0.7m1 -0.7v0.6m1 -0.7v0.8m1 -1.0v0.8m1 -0.7v0.9m1 -0.8v0.7m1 -0.6v0.6m1 -0.6v0.6m1 -0.8v0.8m1 -0.6v0.7m1 -1.0v0.8m1 -0.7v0.8m1 -0.9v0.8m1 -0.7v0.7m1 -0.8v0.6m1 -0.5v0.6m1 -0.7v0.6m1 -0.8v0.8m1 -0.6v0.6m1 -0.6v0.6m1 -0.7v0.6m1 -0.6v0.7m1 -0.5v0.6m1 -0.6v0.6m1 -0.8v0.8m1 -0.7v0.7m1 -0.8v0.8m1 -0.9v0.9m1 -0.7v0.8m1 -0.7v0.6m1 -11.6v25.6m1 -27.5v26.6m1 -28.7v27.4m1 -25.0v27.5m1 -30.8v32.4m1 -26.6v20.7m1 -25.1v28.1m1 -26.4v20.0m1 -15.0v16.8m1 -16.5v16.2m1 -19.8v18.8m1 -15.6v14.7m1 -14.7v15.6m1 -13.0v10.0m1 -12.5v16.1m1 -13.7v10.3m1 -8.9v10.5m1 -12.3v13.2m1 -13.3v11.5m1 -10.8v11.8m1 -12.6v9.7m1 -6.6v6.3m1 -5.8v7.9m1 -10.6v9.3m1 -8.4v8.7m1 -8.2v7.2m1 -7.8v7.4m1 -5.1v4.3m1 -5.7v7.3m1 -7.2v7.1m1 -5.6v4.5m1 -4.5v5.4m1 -4.7v3.5m1 -4.6v5.1m1 -3.9v2.9m1 -3.1v3.1m1 -3.6v3.2m1 -3.5v4.1m1 -3.7v3.5m1 -3.6v3.2m1 -3.1v3.2m1 -2.7v3.0m1 -3.1v3.0m1 -2.9v2.4m1 -2.1v2.5m1 -2.5v2.1m1 -2.1v2.0m1 -1.4v1.3m1 -2.0v2.0m1 -1.7v1.6m1 -1.5v1.6m1 -1.5v1.7m1 -1.7v1.5m1 -1.5v1.2m1 -0.8v0.8m1 -0.9v1.1m1 -0.8v0.6m1 -0.7v0.7m1 -0.6v0.6m1 -0.6v0.6m1 -0.8v0.8m1 -0.7v0.7m1 -0.7v0.9m1 -0.7v0.6m1 -0.9v0.9m1 -0.7v0.7m1 -0.9v0.7m1 -0.7v0.8m1 -0.7v0.7m1 -0.9v0.7m1 -0.6v0.7m1 -0.6v0.6m1 -0.9v0.8m1 -0.7v0.8m1 -0.9v1.0m1 -0.7v0.7m1 -0.8v0.6m1 -0.6v0.7m1 -0.8v0.7m1 -0.7v0.7m1 -0.8v0.7m1 -0.7v0.7m1 -0.5v0.7m1 -0.7v0.7m1 -0.9v0.8m1 -0.7v0.7m1 -0.6v0.8m1 -0.9v0.9m1 -0.8v0.6m1 -0.7v0.9m1 -0.8v0.7m1 -0.7v0.8m1 -0.9v0.7m1 -0.7v0.8m1 -0.8v0.7m1 -0.9v0.9m1 -0.8v0.8m1 -0.9v0.8m1 -0.8v0.8m1 -0.9v0.8m1 -0.7v0.6m1 -0.7v0.8m1 -0.8v0.6m1 -0.7v0.8m1 -0.8v0.7m1 -0.7v0.9m1 -0.9v0.7m1 -0.6v0.7m1 -0.6v0.7m1 -14.2v27.1m1 -34.9v35.6m1 -32.0v36.8m1 -31.5v23.4m1 -28.8v38.2m1 -38.7v29.0m1 -23.0v26.4m1 -22.7v26.5m1 -33.8v33.8m1 -33.7v31.5m1 -25.1v22.6m1 -26.7v20.6m1 -13.5v20.4m1 -20.0v18.4m1 -19.6v14.3m1 -13.5v16.4m1 -16.9v11.9m1 -11.6v11.8m1 -10.4v10.0m1 -8.6v7.4m1 -4.8v3.8m1 -2.8v0.9m1 -0.7v0.8m1 -0.8v0.7m1 -0.8v0.8m1 -0.8v0.9m1 -0.9v1.0m1 -0.8v0.6m1 -0.7v0.8m1 -0.7v0.6m1 -0.6v0.6m1 -0.7v0.7m1 -0.7v0.8m1 -0.8v0.8m1 -0.9v0.8m1 -0.7v0.6m1 -0.7v0.9m1 -1.0v0.9m1 -24.2v42.4m1 -35.0v39.7m1 -41.9v29.8m1 -31.5v37.5m1 -36.9v34.1m1 -30.9v32.6m1 -31.8v34.4m1 -31.4v28.6m1 -33.6v27.0m1 -25.5v30.9m1 -26.4v19.6m1 -19.6v20.3m1 -17.2v19.6m1 -22.6v25.4m1 -24.7v22.7m1 -21.4v15.4m1 -13.3v13.5m1 -14.5v15.2m1 -14.4v14.0m1 -10.4v9.3m1 -12.5v12.8m1 -10.7v10.2m1 -8.6v8.1m1 -8.0v6.7m1 -4.9v3.1m1 -1.6v0.6m1 -0.7v0.6m1 -0.5v0.7m1 -0.7v0.6m1 -0.6v0.8m1 -0.9v0.8m1 -0.9v0.9m1 -0.9v0.9m1 -0.9v0.8m1 -0.9v0.9m1 -0.7v0.7m1 -13.7v31.4m1 -42.5v37.7m1 -29.5v30.9m1 -32.8v38.9m1 -34.5v30.1m1 -26.2v21.6m1 -25.4v29.1m1 -33.2v35.0m1 -30.6v23.6m1 -25.9v30.9m1 -29.9v27.6m1 -25.6v22.6m1 -21.6v20.9m1 -21.4v25.0m1 -21.5v19.8m1 -18.0v12.9m1 -13.2v14.3m1 -15.6v15.9m1 -18.4v16.0m1 -15.3v16.2m1 -12.6v13.6m1 -14.1v14.3m1 -11.9v11.7m1 -11.6v9.1m1 -10.1v11.5m1 -13.3v10.9m1 -7.5v9.0m1 -9.7v10.7m1 -12.9v13.3m1 -13.7v13.7m1 -10.7v8.9m1 -8.4v8.1m1 -9.9v10.0m1 -10.6v9.6m1 -7.7v9.1m1 -10.1v7.7m1 -6.4v7.9m1 -6.9v6.8m1 -8.9v8.3m1 -6.1v5.7m1 -5.7v6.4m1 -6.5v4.4m1 -4.8v5.1m1 -5.9v5.6m1 -4.0v4.3m1 -4.8v5.1m1 -5.9v5.5m1 -5.3v4.7m1 -3.9v5.1m1 -5.6v5.1m1 -3.8v4.2m1 -4.6v4.0m1 -3.5v2.6m1 -3.0v3.9m1 -4.3v3.6m1 -2.9v3.1m1 -3.3v2.8m1 -2.4v2.1m1 -2.0v2.7m1 -3.6v3.5m1 -3.2v2.7m1 -2.3v2.3m1 -2.3v2.6m1 -3.0v2.6m1 -1.9v2.1m1 -2.6v2.7m1 -2.7v2.5m1 -2.3v2.0m1 -1.9v1.6m1 -1.8v1.7m1 -1.5v1.8m1 -1.8v1.5m1 -1.2v1.0m1 -1.1v1.3m1 -0.8v0.6m1 -0.7v0.7m1 -0.7v0.6m1 -0.7v0.8m1 -0.8v0.7m1 -0.7v0.8m1 -0.9v0.8m1 -0.7v0.7m1 -0.8v0.8m1 -0.8v0.6m1 -0.6v0.8m1 -0.7v0.7m1 -0.7v0.6m1 -0.5v0.6m1 -0.7v0.6m1 -0.6v0.8m1 -0.8v0.7m1 -0.9v0.8m1 -0.8v0.9m1 -0.8v0.9m1 -0.7v0.6m1 -0.7v0.7m1 -0.9v0.8m1 -0.6v0.7m1 -0.9v0.8m1 -0.6v0.6m1 -0.7v0.8m1 -0.8v0.8m1 -0.8v0.8m1 -0.8v0.6m1 -0.6v0.8m1 -0.7v0.7m1 -0.8v0.7m1 -0.7v0.7m1 -0.7v0.9m1 -0.7v0.6m1 -22.4v37.2m1 -27.6v34.8m1 -35.0v34.5m1 -35.3v33.7m1 -35.4v24.9m1 -20.8v25.9m1 -23.2v18.7m1 -21.7v20.0m1 -24.7v28.0m1 -22.3v20.4m1 -17.8v19.3m1 -23.3v23.9m1 -24.8v25.2m1 -21.1v16.0m1 -13.7v16.5m1 -19.8v15.6m1 -15.6v20.2m1 -15.7v13.7m1 -17.7v18.0m1 -14.8v12.4m1 -11.2v10.1m1 -12.4v15.5m1 -14.1v12.6m1 -15.1v15.0m1 -11.5v9.5m1 -12.4v10.8m1 -8.7v10.0m1 -8.6v9.1m1 -9.5v8.2m1 -9.8v11.2m1 -11.1v8.5m1 -8.0v9.4m1 -8.3v9.5m1 -9.4v9.1m1 -9.7v7.1m1 -7.1v7.7m1 -6.6v7.0m1 -7.1v5.9m1 -5.5v6.8m1 -6.1v6.3m1 -6.7v5.8m1 -5.0v4.2m1 -4.5v5.0m1 -6.1v6.4m1 -4.8v3.8m1 -5.1v4.6m1 -4.5v5.8m1 -5.6v4.4m1 -4.3v4.7m1 -4.0v3.6m1 -3.3v3.9m1 -3.7v4.0m1 -4.6v4.4m1 -4.2v3.9m1 -3.3v2.5m1 -2.2v2.8m1 -3.6v3.3m1 -2.8v2.6m1 -2.7v3.3m1 -3.3v2.8m1 -2.9v2.8m1 -2.8v3.0m1 -2.8v2.6m1 -2.2v2.0m1 -1.9v2.0m1 -2.4v2.0m1 -1.7v1.7m1 -1.5v1.4m1 -1.7v1.8m1 -1.7v1.5m1 -1.4v1.6m1 -1.6v1.5m1 -1.1v0.9m1 -1.0v1.3m1 -0.9v0.6m1 -0.8v0.7m1 -0.6v0.6m1 -0.7v0.7m1 -0.8v0.6m1 -0.6v0.7m1 -0.8v0.9m1 -0.9v0.8m1 -0.8v0.8m1 -0.9v0.8m1 -0.7v0.8m1 -0.7v0.6m1 -0.5v0.6m1 -0.7v0.9m1 -0.8v0.7m1 -0.9v0.9m1 -0.8v0.7m1 -0.7v0.8m1 -0.9v0.7m1 -0.7v0.9m1 -0.9v0.8m1 -0.6v0.8m1 -0.9v0.8m1 -0.7v0.6m1 -0.6v0.6m1 -0.6v0.6m1 -0.7v0.8m1 -0.8v0.7m1 -0.6v0.6m1 -0.6v0.6m1 -0.6v0.7m1 -0.9v0.7m1 -0.5v0.6m1 -0.6v0.8m1 -0.8v0.6m1 -0.6v0.7m1 -24.7v40.6m1 -39.9v37.2m1 -27.6v34.3m1 -38.3v33.6m1 -27.2v28.4m1 -29.2v33.0m1 -41.0v37.6m1 -32.9v26.1m1 -19.9v22.8m1 -25.3v27.6m1 -32.4v29.5m1 -26.6v30.7m1 -25.6v16.6m1 -15.3v20.9m1 -23.7v22.4m1 -24.7v19.7m1 -16.2v18.1m1 -16.6v15.8m1 -15.5v16.3m1 -15.2v14.4m1 -12.9v12.1m1 -12.1v10.1m1 -8.8v7.6m1 -6.3v4.9m1 -3.1v0.7m1 -0.6v0.7m1 -0.6v0.6m1 -0.8v0.7m1 -0.6v0.6m1 -0.5v0.6m1 -0.8v0.8m1 -0.8v0.7m1 -0.8v0.6m1 -0.6v0.7m1 -0.6v0.6m1 -0.7v0.8m1 -0.7v0.7m1 -0.9v0.7m1 -10.6v30.1m1 -37.0v38.3m1 -41.4v32.3m1 -27.7v29.9m1 -31.0v29.7m1 -26.8v22.6m1 -25.5v25.1m1 -20.2v26.8m1 -24.0v18.7m1 -21.8v19.7m1 -17.8v24.4m1 -22.1v19.3m1 -20.4v17.6m1 -16.8v19.7m1 -16.9v13.6m1 -14.3v11.2m1 -10.3v13.3m1 -13.2v10.4m1 -11.2v9.0m1 -6.7v8.4m1 -8.0v5.5m1 -2.9v1.9m1 -1.5v0.6m1 -0.5v0.7m1 -0.8v0.8m1 -0.9v0.8m1 -0.6v0.7m1 -0.7v0.7m1 -0.6v0.6m1 -0.6v0.7m1 -0.8v0.6m1 -0.6v0.9m1 -1.0v0.9m1 -0.9v0.7m1 -0.7v0.8m1 -0.6v0.6m1 -25.2v46.5m1 -42.0v35.6m1 -34.9v32.8m1 -28.6v35.2m1 -40.6v37.1m1 -31.3v28.8m1 -23.5v24.9m1 -29.4v23.0m1 -19.7v21.7m1 -26.2v30.0m1 -24.1v19.2m1 -19.2v17.3m1 -16.0v16.8m1 -16.0v18.5m1 -17.3v17.6m1 -22.0v17.8m1 -14.8v16.9m1 -20.3v16.8m1 -15.2v15.9m1 -15.5v17.7m1 -15.1v11.7m1 -11.3v13.7m1 -14.8v12.2m1 -10.1v10.7m1 -9.4v10.0m1 -13.5v11.2m1 -7.5v10.0m1 -12.4v12.6m1 -11.5v11.6m1 -12.7v10.0m1 -8.1v7.1m1 -7.4v9.2m1 -9.1v8.7m1 -9.6v10.4m1 -8.4v5.7m1 -5.1v7.5m1 -7.7v7.6m1 -8.4v5.8m1 -5.3v5.6m1 -5.1v5.4m1 -5.0v4.1m1 -3.7v5.6m1 -6.3v5.2m1 -4.5v4.3m1 -5.5v6.2m1 -5.1v5.1m1 -5.9v4.6m1 -3.5v3.3m1 -3.4v3.1m1 -3.6v4.7m1 -4.4v4.2m1 -4.6v4.8m1 -4.2v3.7m1 -3.8v4.0m1 -3.9v3.6m1 -3.5v3.4m1 -3.6v2.8m1 -2.8v3.1m1 -2.7v3.0m1 -2.4v2.2m1 -2.7v2.6m1 -2.4v2.4m1 -2.3v2.1m1 -2.3v2.5m1 -2.3v2.3m1 -2.3v2.0m1 -1.9v1.8m1 -1.8v1.9m1 -1.7v1.2m1 -1.1v1.2m1 -1.3v1.4m1 -1.3v1.2m1 -1.0v0.7m1 -0.6v0.6m1 -0.8v0.7m1 -0.6v0.7m1 -0.6v0.6m1 -0.6v0.7m1 -0.7v0.8m1 -0.7v0.7m1 -0.9v0.9m1 -0.8v0.6m1 -0.7v0.8m1 -0.6v0.7m1 -0.8v0.6m1 -0.7v0.9m1 -0.7v0.6m1 -0.7v0.8m1 -0.9v0.7m1 -0.8v0.8m1 -0.6v0.7m1 -0.8v0.8m1 -0.7v0.8m1 -0.8v0.7m1 -0.7v0.6m1 -0.5v0.6m1 -0.6v0.7m1 -0.7v0.6m1 -0.8v0.8m1 -0.9v0.8m1 -0.6v0.7m1 -0.7v0.6m1 -0.8v0.9m1 -0.9v1.0m1 -0.9v0.6m1 -0.7v0.9m1 -0.7v0.6m1 -0.8v0.7m1 -0.6v0.6m1 -0.8v0.7m1 -0.5v0.6m1 -16.2v32.2m1 -37.1v30.8m1 -22.6v27.5m1 -24.4v21.1m1 -29.9v36.4m1 -31.7v30.6m1 -27.2v24.9m1 -28.8v29.4m1 -24.1v20.2m1 -25.8v26.8m1 -23.5v20.5m1 -22.1v24.8m1 -19.2v18.4m1 -19.1v18.4m1 -17.7v15.9m1 -19.9v16.9m1 -13.9v13.6m1 -10.8v9.6m1 -10.5v11.3m1 -13.6v12.9m1 -10.7v10.1m1 -8.2v11.0m1 -14.0v13.5m1 -12.5v9.6m1 -8.6v9.4m1 -10.4v12.1m1 -10.6v9.2m1 -7.6v7.7m1 -7.6v9.0m1 -9.0v8.3m1 -9.8v9.0m1 -7.7v7.0m1 -7.4v6.9m1 -7.6v7.2m1 -5.5v6.5m1 -6.3v7.0m1 -8.1v5.8m1 -6.4v7.4m1 -5.4v5.2m1 -6.6v6.0m1 -5.5v5.4m1 -4.2v4.4m1 -5.0v4.7m1 -5.6v6.4m1 -5.6v5.2m1 -5.6v4.9m1 -4.6v4.1m1 -3.2v3.4m1 -3.9v3.5m1 -3.9v4.6m1 -4.3v4.0m1 -4.0v4.3m1 -4.0v3.6m1 -3.1v3.4m1 -3.1v2.4m1 -2.7v2.9m1 -2.4v2.2m1 -2.3v2.8m1 -3.3v3.3m1 -3.2v3.2m1 -3.2v2.7m1 -2.0v1.8m1 -2.0v1.9m1 -1.6v1.6m1 -2.3v2.0m1 -1.5v1.6m1 -1.5v1.9m1 -2.0v1.9m1 -1.6v1.3m1 -1.5v1.3m1 -1.2v1.3m1 -1.5v1.7m1 -1.6v1.5m1 -1.3v1.0m1 -0.7v0.6m1 -0.8v0.9m1 -0.9v0.7m1 -0.6v0.6m1 -0.5v0.7m1 -0.8v0.8m1 -0.8v0.8m1 -0.9v0.9m1 -0.7v0.6m1 -0.6v0.6m1 -0.8v0.8m1 -0.8v0.9m1 -0.8v0.7m1 -0.6v0.8m1 -0.9v0.8m1 -0.7v0.7m1 -0.7v0.6m1 -0.6v0.8m1 -1.0v0.8m1 -0.8v0.8m1 -0.7v0.7m1 -0.9v0.6m1 -0.6v0.7m1 -0.7v0.9m1 -0.8v0.7m1 -0.9v0.8m1 -0.7v0.8m1 -0.8v0.7m1 -0.7v0.6m1 -0.7v0.9m1 -0.8v0.7m1 -0.6v0.6m1 -0.6v0.6m1 -0.7v0.8m1 -0.9v0.7m1 -17.0v34.9m1 -32.2v35.3m1 -41.4v34.5m1 -30.7v36.3m1 -38.3v36.7m1 -30.2v30.7m1 -33.7v26.0m1 -24.1v25.3m1 -25.4v28.5m1 -23.1v21.6m1 -28.5v22.7m1 -20.5v23.7m1 -21.9v20.5m1 -20.1v18.1m1 -13.3v12.3m1 -11.9v10.8m1 -10.9v10.2m1 -12.1v15.4m1 -13.0v11.6m1 -12.5v9.1m1 -7.0v8.1m1 -9.0v9.1m1 -6.6v4.3m1 -4.3v3.1m1 -1.7v0.6m1 -0.6v0.7m1 -0.7v0.6m1 -0.6v0.7m1 -0.7v0.7m1 -0.9v0.9m1 -0.9v0.7m1 -0.7v0.8m1 -0.7v0.6m1 -0.7v0.6m1 -0.8v1.0m1 -0.9v0.8m1 -0.6v0.6m1 -13.8v28.8m1 -34.4v32.9m1 -28.2v24.4m1 -28.0v33.4m1 -32.2v27.6m1 -23.5v26.0m1 -28.2v23.7m1 -23.3v27.6m1 -23.5v21.0m1 -26.4v23.9m1 -21.5v26.3m1 -23.1v17.3m1 -15.6v21.8m1 -25.9v19.1m1 -16.4v21.6m1 -17.6v16.5m1 -18.7v13.2m1 -10.9v12.6m1 -11.2v9.0m1 -11.1v10.3m1 -9.0v10.6m1 -9.8v6.4m1 -4.0v3.7m1 -2.3v0.6m1 -0.6v0.6m1 -0.7v0.9m1 -0.7v0.7m1 -0.7v0.7m1 -0.8v0.7m1 -0.7v0.7m1 -0.6v0.8m1 -0.9v0.8m1 -0.6v0.6m1 -0.9v0.7m1 -0.5v0.8m1 -1.0v0.8m1 -0.5v0.6m1 -16.0v29.2m1 -31.0v36.4m1 -38.7v39.2m1 -36.9v28.3m1 -24.0v27.3m1 -29.9v24.6m1 -22.9v28.6m1 -28.2v30.1m1 -31.2v22.6m1 -23.1v24.7m1 -18.7v19.9m1 -24.5v22.7m1 -16.8v16.5m1 -14.6v14.3m1 -16.3v19.7m1 -22.5v16.8m1 -14.5v18.8m1 -15.5v11.2m1 -14.1v15.0m1 -16.2v16.7m1 -16.5v16.3m1 -14.7v11.8m1 -11.0v12.6m1 -11.5v11.1m1 -12.4v12.2m1 -10.4v12.0m1 -12.2v10.3m1 -10.3v8.7m1 -8.5v8.3m1 -8.6v9.2m1 -6.9v7.9m1 -9.5v10.4m1 -10.7v8.1m1 -6.2v7.3m1 -9.1v8.7m1 -7.7v7.4m1 -7.3v6.4m1 -5.1v6.6m1 -7.5v7.0m1 -5.5v5.6m1 -7.4v7.1m1 -6.1v6.7m1 -6.8v6.7m1 -6.4v5.6m1 -6.0v6.2m1 -5.5v4.3m1 -3.5v3.8m1 -5.1v5.9m1 -5.2v4.7m1 -4.0v3.2m1 -2.8v3.5m1 -3.9v2.9m1 -3.2v3.6m1 -3.7v4.2m1 -3.1v2.0m1 -2.6v2.7m1 -2.6v3.4m1 -3.2v2.3m1 -2.6v2.6m1 -2.8v3.4m1 -3.2v2.8m1 -2.3v2.4m1 -2.3v2.0m1 -2.0v1.4m1 -2.0v2.7m1 -2.7v2.2m1 -1.7v1.8m1 -1.8v1.8m1 -2.1v1.7m1 -1.1v1.1m1 -1.3v1.5m1 -1.5v1.2m1 -1.4v1.1m1 -0.7v0.6m1 -0.5v0.7m1 -0.9v0.9m1 -0.8v0.7m1 -0.7v0.6m1 -0.8v0.8m1 -0.6v0.6m1 -0.7v0.7m1 -0.6v0.6m1 -0.7v0.7m1 -0.5v0.7m1 -0.8v0.6m1 -0.6v0.7m1 -0.6v0.6m1 -0.9v0.9m1 -0.8v1.0m1 -0.8v0.7m1 -0.6v0.6m1 -0.8v1.0m1 -0.9v0.6m1 -0.7v0.7m1 -0.6v0.7m1 -0.8v0.8m1 -0.7v0.7m1 -0.8v0.9m1 -0.7v0.6m1 -0.7v0.6m1 -0.6v0.6m1 -0.8v0.8m1 -0.7v0.8m1 -0.7v0.7m1 -0.6v0.6m1 -0.8v0.7m1 -0.5v0.6m1 -0.8v0.7m1 -0.7v0.8m1 -0.6v0.6m1 -20.4v38.5m1 -32.8v26.0m1 -20.4v22.9m1 -30.3v25.2m1 -18.5v20.8m1 -23.3v19.1m1 -14.1v18.6m1 -20.8v21.7m1 -19.0v14.0m1 -14.4v15.7m1 -14.2v13.0m1 -12.7v10.7m1 -11.1v12.6m1 -13.8v12.5m1 -10.1v8.2m1 -8.3v10.3m1 -11.8v11.5m1 -10.6v8.4m1 -5.8v6.1m1 -7.2v6.0m1 -6.4v7.3" fill="none" stroke="#4b3b20" stroke-width="1.1"/>
<path d="M581.5 451.6v0.6m1 -26.6v37.1m1 -39.8v45.3m1 -41.0v33.9m1 -30.5v31.4m1 -26.2v30.8m1 -40.7v32.7m1 -29.5v33.3m1 -26.0v23.2m1 -25.9v26.7m1 -25.9v26.7m1 -19.8v19.9m1 -28.2v28.9m1 -24.3v18.8m1 -12.3v12.6m1 -20.5v21.1m1 -15.5v17.9m1 -17.0v15.1m1 -15.6v13.3m1 -13.9v16.8m1 -13.3v10.7m1 -12.0v11.1m1 -11.3v13.8m1 -14.4v13.2m1 -13.9v12.5m1 -10.5v11.0m1 -10.8v9.9m1 -10.4v10.2m1 -7.0v8.7m1 -11.9v10.8m1 -8.2v7.6m1 -6.8v7.5m1 -7.0v5.8m1 -6.6v6.6m1 -7.0v8.2m1 -8.4v7.6m1 -6.0v5.8m1 -4.6v5.0m1 -5.8v5.1m1 -4.2v4.3m1 -5.5v5.3m1 -5.9v6.2m1 -4.5v4.2m1 -5.6v5.5m1 -4.6v4.0m1 -3.6v4.0m1 -3.7v3.6m1 -3.8v3.9m1 -3.6v3.2m1 -3.0v3.7m1 -3.5v2.6m1 -1.9v2.3m1 -2.3v1.9m1 -1.9v2.1m1 -3.2v3.1m1 -2.4v2.3m1 -2.3v2.2m1 -2.4v2.6m1 -2.4v2.1m1 -2.0v2.2m1 -1.7v1.3m1 -1.6v1.8m1 -1.7v1.6m1 -1.6v1.5m1 -1.4v1.5m1 -1.2v1.1m1 -1.1v1.0m1 -0.6v0.6m1 -0.8v0.7m1 -0.8v0.7m1 -0.6v0.6m1 -0.6v0.7m1 -0.5v0.6m1 -0.6v0.6m1 -0.6v0.6m1 -0.8v0.8m1 -0.6v0.6m1 -0.7v0.6m1 -0.5v0.6m1 -0.6v0.6m1 -0.5v0.6m1 -0.7v0.6m1 -0.6v0.6m1 -0.7v0.7m1 -0.5v0.6m1 -0.6v0.6m1 -0.6v0.6m1 -0.7v0.7m1 -0.5v0.6m1 -0.7v0.6m1 -0.5v0.6m1 -0.6v0.6m1 -0.6v0.6m1 -0.6v0.6m1 -0.7v0.6m1 -0.7v0.6m1 -0.6v0.7m1 -0.8v0.7m1 -0.5v0.6m1 -0.8v0.6m1 -0.5v0.6m1 -0.7v0.6m1 -0.5v0.6m1 -0.6v0.6m1 -0.8v0.7m1 -0.6v0.6m1 -0.8v0.6m1 -0.5v0.6m1 -0.7v0.7m1 -0.5v0.6m1 -0.8v0.7m1 -26.8v44.3m1 -47.4v48.0m1 -38.7v28.9m1 -34.1v33.7m1 -30.4v37.1m1 -33.4v30.5m1 -26.3v22.2m1 -27.5v32.5m1 -36.7v30.1m1 -28.0v31.0m1 -23.1v21.9m1 -23.9v23.2m1 -17.7v20.5m1 -25.8v23.9m1 -23.3v24.9m1 -19.1v17.8m1 -23.2v20.4m1 -17.5v17.8m1 -14.3v13.9m1 -13.2v15.1m1 -15.0v13.4m1 -15.8v16.9m1 -17.9v15.3m1 -12.1v10.8m1 -8.5v9.2m1 -14.3v13.3m1 -8.5v10.2m1 -10.9v9.4m1 -12.1v11.6m1 -9.4v10.4m1 -8.9v8.1m1 -7.1v7.5m1 -9.8v9.8m1 -9.6v10.4m1 -7.8v7.6m1 -9.0v7.9m1 -7.4v8.2m1 -7.6v5.9m1 -7.6v7.6m1 -4.6v5.6m1 -6.1v5.2m1 -6.1v6.9m1 -5.9v5.8m1 -6.4v5.8m1 -5.5v4.5m1 -3.5v4.3m1 -5.4v4.6m1 -4.3v4.7m1 -4.5v4.3m1 -3.5v3.4m1 -4.7v4.5m1 -4.1v4.4m1 -2.9v3.1m1 -2.9v2.9m1 -3.3v3.3m1 -3.8v3.3m1 -3.0v3.4m1 -2.7v2.1m1 -2.2v2.6m1 -2.4v2.0m1 -2.3v2.5m1 -2.2v2.1m1 -1.7v1.3m1 -1.3v1.3m1 -1.9v2.3m1 -1.7v1.3m1 -1.2v1.2m1 -1.6v1.6m1 -1.7v1.6m1 -1.0v0.9m1 -1.0v1.0m1 -0.7v0.7m1 -0.7v0.6m1 -0.6v0.6m1 -0.6v0.6m1 -0.7v0.6m1 -0.5v0.6m1 -0.6v0.6m1 -0.6v0.6m1 -0.8v0.7m1 -0.6v0.6m1 -0.7v0.6m1 -0.6v0.6m1 -0.6v0.6m1 -0.6v0.6m1 -0.5v0.6m1 -0.7v0.6m1 -0.6v0.6m1 -0.6v0.6m1 -0.5v0.6m1 -0.6v0.6m1 -0.6v0.6m1 -0.7v0.6m1 -0.7v0.7m1 -0.6v0.6m1 -0.5v0.6m1 -0.7v0.6m1 -0.6v0.6m1 -0.7v0.6m1 -0.6v0.6m1 -0.6v0.6m1 -0.6v0.6m1 -0.7v0.6m1 -0.5v0.6m1 -0.7v0.7m1 -0.5v0.6m1 -0.7v0.7m1 -0.7v0.6m1 -0.7v0.8m1 -0.6v0.6m1 -30.1v47.0m1 -44.0v35.5m1 -23.6v25.8m1 -31.5v30.5m1 -34.2v37.7m1 -31.4v30.3m1 -26.6v28.0m1 -27.9v21.4m1 -22.4v26.9m1 -28.6v26.8m1 -28.1v25.7m1 -25.9v28.8m1 -23.3v21.2m1 -22.9v21.4m1 -14.2v13.8m1 -15.2v15.2m1 -12.5v8.8m1 -7.6v7.5m1 -7.1v6.5m1 -4.8v4.4m1 -2.1v0.6m1 -0.7v0.6m1 -0.7v0.6m1 -0.6v0.7m1 -0.5v0.6m1 -0.7v0.6m1 -0.5v0.6m1 -0.7v0.6m1 -0.6v0.6m1 -0.5v0.6m1 -0.6v0.6m1 -0.8v0.7m1 -0.6v0.6m1 -0.5v0.6m1 -0.8v0.7m1 -0.7v0.6m1 -0.4v0.6m1 -26.2v40.8m1 -41.1v36.7m1 -35.2v36.2m1 -28.4v28.4m1 -31.5v29.4m1 -32.8v37.4m1 -34.2v26.7m1 -25.1v29.3m1 -32.0v29.1m1 -20.9v21.0m1 -19.4v21.5m1 -19.4v17.5m1 -25.1v21.6m1 -14.0v18.7m1 -19.1v17.3m1 -14.2v12.2m1 -11.6v10.2m1 -9.2v10.2m1 -11.7v10.0m1 -8.5v8.6m1 -6.7v4.8m1 -2.9v2.6m1 -1.7v0.6m1 -0.6v0.6m1 -0.6v0.6m1 -0.6v0.6m1 -0.7v0.7m1 -0.6v0.6m1 -0.5v0.6m1 -0.8v0.6m1 -0.6v0.6m1 -0.4v0.6m1 -0.7v0.6m1 -0.5v0.6m1 -0.7v0.6m1 -0.5v0.6m1 -19.0v32.3m1 -35.5v33.8m1 -39.4v37.0m1 -38.0v43.3m1 -34.9v34.3m1 -34.1v33.7m1 -31.8v31.6m1 -34.0v31.0m1 -33.0v32.7m1 -22.8v22.0m1 -20.5v18.5m1 -23.7v22.0m1 -18.4v18.3m1 -17.6v17.3m1 -19.4v22.2m1 -19.6v18.6m1 -20.3v20.4m1 -20.1v19.1m1 -18.0v18.0m1 -15.9v15.9m1 -13.2v12.6m1 -15.2v14.2m1 -13.6v14.6m1 -15.3v14.3m1 -14.5v14.8m1 -11.3v11.0m1 -13.6v12.6m1 -12.4v11.1m1 -10.1v10.2m1 -8.1v8.6m1 -8.4v8.3m1 -6.7v5.6m1 -7.8v8.2m1 -6.3v7.0m1 -8.5v8.1m1 -8.0v7.6m1 -7.5v7.9m1 -7.6v7.7m1 -7.1v7.1m1 -7.1v6.2m1 -4.4v4.2m1 -5.3v4.7m1 -4.5v5.0m1 -4.5v4.0m1 -3.0v3.7m1 -4.0v3.3m1 -4.4v4.2m1 -3.8v4.5m1 -4.7v4.5m1 -2.9v2.6m1 -3.9v3.8m1 -3.1v3.4m1 -3.3v2.9m1 -2.9v2.9m1 -2.4v2.1m1 -1.9v2.5m1 -2.5v2.0m1 -2.7v2.5m1 -1.6v1.8m1 -1.9v1.9m1 -1.6v1.5m1 -1.6v1.6m1 -1.1v1.3m1 -1.8v1.6m1 -1.6v1.5m1 -1.4v1.5m1 -1.2v1.0m1 -0.9v0.9m1 -0.6v0.6m1 -0.5v0.6m1 -0.8v0.7m1 -0.5v0.6m1 -0.5v0.6m1 -0.8v0.7m1 -0.7v0.6m1 -0.5v0.6m1 -0.7v0.6m1 -0.5v0.6m1 -0.5v0.6m1 -0.8v0.6m1 -0.6v0.6m1 -0.5v0.6m1 -0.7v0.7m1 -0.7v0.7m1 -0.7v0.7m1 -0.6v0.6m1 -0.7v0.7m1 -0.6v0.6m1 -0.6v0.6m1 -0.5v0.6m1 -0.7v0.6m1 -0.7v0.6m1 -0.7v0.6m1 -0.5v0.6m1 -0.5v0.6m1 -0.8v0.7m1 -0.6v0.6m1 -0.4v0.6m1 -0.6v0.6m1 -0.8v0.6m1 -0.4v0.6m1 -0.7v0.6m1 -0.7v0.6m1 -0.6v0.6m1 -0.7v0.7m1 -0.6v0.6m1 -0.7v0.6m1 -0.5v0.7m1 -0.6v0.6m1 -0.6v0.6m1 -0.7v0.6m1 -27.1v41.7m1 -29.5v27.3m1 -27.9v23.2m1 -25.3v28.6m1 -25.9v22.7m1 -19.9v20.9m1 -24.1v25.3m1 -26.9v21.5m1 -13.9v14.2m1 -14.8v17.5m1 -18.8v18.3m1 -20.4v18.4m1 -11.4v10.4m1 -14.4v15.5m1 -12.2v12.6m1 -11.1v8.7m1 -11.3v12.5m1 -14.3v13.4m1 -12.3v12.3m1 -9.3v10.4m1 -11.0v10.1m1 -8.9v9.1m1 -9.6v7.4m1 -5.5v6.0m1 -7.2v6.6m1 -7.8v8.5m1 -8.5v8.6m1 -7.8v6.8m1 -4.3v4.3m1 -5.2v4.8m1 -6.0v6.3m1 -5.7v5.2m1 -5.1v5.5m1 -4.5v4.7m1 -4.8v4.3m1 -3.4v3.5m1 -3.9v3.4m1 -2.7v2.7m1 -3.6v4.2m1 -4.0v3.9m1 -2.6v2.2m1 -3.3v3.4m1 -2.5v2.2m1 -2.8v2.8m1 -2.0v2.1m1 -2.3v2.6m1 -2.6v2.6m1 -2.0v1.9m1 -2.2v1.8m1 -1.6v1.9m1 -1.4v1.1m1 -1.4v1.5m1 -1.4v1.5m1 -1.3v1.1m1 -1.1v1.1m1 -0.9v0.9m1 -0.8v0.7m1 -0.7v0.7m1 -0.5v0.6m1 -0.6v0.6m1 -0.7v0.6m1 -0.7v0.7m1 -0.7v0.7m1 -0.5v0.6m1 -0.7v0.6m1 -0.6v0.6m1 -0.4v0.6m1 -0.7v0.6m1 -0.5v0.6m1 -0.7v0.6m1 -0.6v0.6m1 -0.8v0.7m1 -0.5v0.6m1 -0.6v0.6m1 -0.6v0.6m1 -0.8v0.6m1 -0.7v0.7m1 -0.7v0.6m1 -0.6v0.7m1 -0.5v0.6m1 -0.8v0.6m1 -0.5v0.6m1 -0.7v0.6m1 -0.5v0.6m1 -0.6v0.6m1 -0.7v0.6m1 -0.6v0.6m1 -0.6v0.6m1 -0.7v0.7m1 -0.6v0.6m1 -0.7v0.6m1 -0.6v0.7m1 -0.6v0.6m1 -0.7v0.7m1 -0.6v0.6m1 -0.4v0.6m1 -0.8v0.6m1 -0.6v0.6m1 -0.4v0.6m1 -0.6v0.6m1 -0.8v0.6m1 -0.7v0.6m1 -0.4v0.6m1 -0.8v0.7m1 -0.6v0.6m1 -0.7v0.6m1 -0.4v0.6m1 -0.8v0.7m1 -0.6v0.6m1 -26.7v44.4m1 -37.4v30.7m1 -29.7v31.9m1 -32.8v34.5m1 -39.1v35.8m1 -36.1v32.8m1 -24.2v25.6m1 -26.8v26.5m1 -33.4v32.1m1 -29.0v32.1m1 -24.6v21.1m1 -17.0v18.3m1 -22.3v18.7m1 -21.5v22.5m1 -15.4v15.0m1 -13.5v11.8m1 -14.0v15.0m1 -10.5v9.9m1 -11.9v10.4m1 -7.9v7.1m1 -5.1v4.0m1 -1.8v0.6m1 -0.6v0.6m1 -0.7v0.6m1 -0.7v0.7m1 -0.6v0.6m1 -0.6v0.6m1 -0.5v0.6m1 -0.7v0.6m1 -0.7v0.6m1 -0.6v0.7m1 -0.5v0.6m1 -0.7v0.6m1 -0.8v0.7m1 -0.6v0.7m1 -0.5v0.6m1 -0.7v0.7m1 -0.7v0.7m1 -17.8v28.3m1 -28.2v30.4m1 -42.8v39.3m1 -30.0v32.1m1 -33.1v31.2m1 -29.0v26.2m1 -18.9v23.0m1 -23.9v24.2m1 -27.8v26.1m1 -23.9v26.6m1 -26.5v26.0m1 -22.0v19.9m1 -20.7v22.1m1 -19.9v18.8m1 -25.5v22.5m1 -14.9v16.1m1 -21.2v21.0m1 -19.6v19.1m1 -15.9v14.6m1 -16.9v15.0m1 -9.8v9.4m1 -7.5v8.4m1 -8.2v5.5m1 -4.7v4.9m1 -4.4v3.4m1 -1.4v0.7m1 -0.8v0.7m1 -0.6v0.6m1 -0.6v0.7m1 -0.5v0.6m1 -0.8v0.6m1 -0.6v0.7m1 -0.7v0.7m1 -0.6v0.6m1 -0.7v0.6m1 -0.6v0.6m1 -24.8v38.8m1 -32.4v30.5m1 -28.2v33.2m1 -33.5v30.3m1 -31.6v33.2m1 -41.4v36.9m1 -26.7v22.7m1 -24.5v25.9m1 -22.3v26.2m1 -30.6v24.4m1 -21.8v22.8m1 -25.9v27.1m1 -17.8v17.1m1 -21.5v19.6m1 -18.6v18.3m1 -14.9v14.8m1 -22.1v20.7m1 -16.3v19.7m1 -21.6v19.7m1 -17.8v17.6m1 -16.0v14.4m1 -15.8v18.2m1 -13.9v12.9m1 -12.1v12.5m1 -11.8v9.5m1 -11.3v11.5m1 -11.0v10.2m1 -11.4v11.4m1 -7.8v8.8m1 -12.2v12.4m1 -11.6v10.3m1 -8.3v9.1m1 -8.6v7.9m1 -9.6v8.9m1 -8.1v8.4m1 -6.7v7.7m1 -9.6v7.9m1 -5.1v5.6m1 -6.6v6.6m1 -7.1v6.9m1 -5.4v6.4m1 -8.5v8.1m1 -7.5v7.6m1 -7.2v6.5m1 -4.4v3.8m1 -5.0v5.4m1 -5.8v5.1m1 -3.9v4.0m1 -3.5v3.9m1 -4.7v5.1m1 -4.9v4.4m1 -4.0v4.2m1 -4.4v3.8m1 -4.0v4.5m1 -4.1v3.9m1 -3.5v3.0m1 -2.2v2.1m1 -2.0v2.1m1 -3.3v3.6m1 -2.1v2.3m1 -2.3v1.9m1 -2.5v2.3m1 -2.6v2.7m1 -2.3v2.5m1 -2.1v2.0m1 -2.4v2.2m1 -1.7v1.9m1 -1.9v1.6m1 -1.7v1.6m1 -1.4v1.4m1 -1.3v1.3m1 -0.9v1.0m1 -1.1v0.8m1 -0.7v0.9m1 -0.9v0.7m1 -0.6v0.6m1 -0.7v0.7m1 -0.7v0.7m1 -0.5v0.6m1 -0.8v0.6m1 -0.5v0.6m1 -0.7v0.6m1 -0.5v0.6m1 -0.8v0.7m1 -0.7v0.7m1 -0.5v0.6m1 -0.8v0.7m1 -0.6v0.6m1 -0.6v0.6m1 -0.7v0.6m1 -0.5v0.6m1 -0.7v0.6m1 -0.5v0.6m1 -0.8v0.6m1 -0.6v0.6m1 -0.5v0.6m1 -0.8v0.7m1 -0.5v0.6m1 -0.5v0.6m1 -0.6v0.6m1 -0.6v0.6m1 -0.6v0.6m1 -0.6v0.6m1 -0.7v0.6m1 -0.5v0.6m1 -0.7v0.7m1 -0.6v0.6m1 -0.5v0.6m1 -0.8v0.6m1 -0.7v0.7m1 -18.3v26.4m1 -28.8v29.8m1 -37.5v36.8m1 -32.0v34.1m1 -36.4v36.2m1 -31.1v34.5m1 -29.7v25.7m1 -26.1v27.1m1 -23.8v18.9m1 -24.4v27.4m1 -23.2v21.8m1 -25.2v24.1m1 -17.4v20.1m1 -19.9v19.4m1 -16.6v13.7m1 -15.5v17.8m1 -18.4v18.8m1 -20.9v19.2m1 -15.4v14.5m1 -15.7v15.1m1 -11.5v10.8m1 -13.1v12.8m1 -12.8v12.6m1 -13.8v13.4m1 -12.2v13.9m1 -14.8v14.8m1 -12.0v10.1m1 -7.4v8.3m1 -12.0v12.0m1 -10.4v10.9m1 -11.3v10.5m1 -10.9v10.6m1 -10.6v9.0m1 -8.0v8.5m1 -9.1v10.3m1 -9.4v9.1m1 -6.4v4.7m1 -5.6v5.5m1 -7.2v7.2m1 -5.0v5.3m1 -5.7v6.5m1 -5.1v4.3m1 -4.4v4.6m1 -5.5v4.8m1 -5.0v5.0m1 -3.6v4.3m1 -4.2v3.9m1 -5.0v4.4m1 -4.5v4.7m1 -4.0v4.0m1 -4.7v5.1m1 -3.9v3.2m1 -4.1v4.5m1 -4.3v4.2m1 -4.4v3.7m1 -3.5v3.7m1 -3.0v2.8m1 -3.1v3.3m1 -2.2v2.3m1 -2.8v2.3m1 -2.4v2.5m1 -2.1v2.0m1 -2.6v2.4m1 -1.9v2.0m1 -1.5v1.5m1 -1.9v2.0m1 -1.9v1.7m1 -1.2v1.4m1 -1.9v1.7m1 -1.3v1.4m1 -1.4v1.4m1 -1.5v1.4m1 -1.3v1.2m1 -0.7v0.7m1 -0.5v0.6m1 -0.8v0.7m1 -0.6v0.6m1 -0.7v0.6m1 -0.5v0.6m1 -0.7v0.6m1 -0.5v0.6m1 -0.6v0.6m1 -0.6v0.6m1 -0.7v0.6m1 -0.5v0.6m1 -0.5v0.6m1 -0.7v0.6m1 -0.6v0.6m1 -0.6v0.6m1 -0.7v0.6m1 -0.5v0.6m1 -0.7v0.6m1 -0.5v0.6m1 -0.8v0.7m1 -0.6v0.6m1 -0.7v0.6m1 -0.7v0.7m1 -0.7v0.6m1 -0.5v0.6m1 -0.6v0.6m1 -0.7v0.6m1 -0.4v0.6m1 -0.7v0.6m1 -0.6v0.6m1 -0.5v0.6m1 -0.8v0.7m1 -0.5v0.6m1 -0.6v0.6m1 -0.7v0.6m1 -0.7v0.6m1 -23.4v34.4m1 -32.3v35.1m1 -42.1v43.4m1 -44.4v42.2m1 -36.0v34.2m1 -29.2v31.6m1 -27.7v26.3m1 -27.2v21.8m1 -26.0v31.1m1 -30.2v31.0m1 -34.3v32.4m1 -30.0v30.2m1 -25.0v24.1m1 -19.6v20.3m1 -21.3v17.2m1 -18.3v17.3m1 -14.0v16.7m1 -22.8v22.0m1 -18.2v14.4m1 -13.4v15.5m1 -12.5v9.2m1 -9.7v11.0m1 -8.4v7.1m1 -6.1v5.1m1 -2.2v0.6m1 -0.4v0.6m1 -0.8v0.7m1 -0.5v0.6m1 -0.6v0.6m1 -0.6v0.6m1 -0.7v0.6m1 -0.6v0.7m1 -0.6v0.6m1 -0.7v0.6m1 -0.5v0.6m1 -0.7v0.7m1 -0.6v0.6m1 -0.6v0.6m1 -25.4v40.2m1 -40.1v37.2m1 -35.7v31.1m1 -33.2v35.4m1 -23.5v20.5m1 -26.8v27.6m1 -27.6v28.2m1 -23.1v22.9m1 -26.5v30.3m1 -30.9v24.7m1 -15.2v17.8m1 -24.2v25.0m1 -22.3v21.9m1 -20.4v18.1m1 -12.7v13.5m1 -14.0v11.5m1 -13.1v12.5m1 -13.4v14.9m1 -9.5v8.2m1 -8.2v6.5m1 -5.1v5.1m1 -3.2v1.8m1 -1.3v0.6m1 -0.4v0.6m1 -0.8v0.6m1 -0.5v0.6m1 -0.7v0.6m1 -0.5v0.6m1 -0.7v0.6m1 -0.7v0.7m1 -0.6v0.6m1 -0.6v0.6m1 -0.5v0.6m1 -0.7v0.6m1 -0.7v0.6m1 -0.6v0.6m1 -26.4v44.7m1 -43.8v38.1m1 -40.8v40.2m1 -34.5v37.0m1 -29.5v23.7m1 -21.2v24.1m1 -34.9v34.1m1 -28.9v29.1m1 -21.7v16.6m1 -19.2v20.0m1 -17.8v22.3m1 -27.7v25.4m1 -25.8v21.4m1 -14.0v14.0m1 -21.4v25.3m1 -23.0v21.0m1 -22.0v22.5m1 -14.3v13.2m1 -15.5v14.0m1 -18.0v18.8m1 -16.7v15.0m1 -11.0v10.6m1 -13.2v15.7m1 -13.2v13.3m1 -13.7v12.5m1 -10.5v8.6m1 -12.1v14.5m1 -10.3v7.8m1 -8.9v10.4m1 -10.6v10.9m1 -11.3v9.9m1 -6.9v7.5m1 -9.4v9.6m1 -8.0v6.3m1 -7.7v8.1m1 -8.5v7.8m1 -6.1v7.1m1 -8.6v8.1m1 -7.3v6.5m1 -5.7v5.4m1 -4.4v5.6m1 -6.1v5.0m1 -4.8v5.1m1 -6.0v5.6m1 -4.5v5.4m1 -5.4v4.8m1 -4.5v4.0m1 -3.2v3.7m1 -3.9v4.0m1 -5.3v4.8m1 -3.4v3.6m1 -4.7v4.8m1 -3.9v3.6m1 -3.2v2.7m1 -2.3v2.2m1 -2.8v2.8m1 -3.0v3.3m1 -2.4v2.2m1 -2.4v2.5m1 -2.7v2.4m1 -2.1v2.4m1 -2.7v2.8m1 -1.8v1.6m1 -1.6v1.6m1 -2.3v2.1m1 -1.5v1.5m1 -1.4v1.3m1 -1.2v1.2m1 -1.0v0.9m1 -0.9v1.1m1 -0.9v0.9m1 -1.0v0.9m1 -0.6v0.6m1 -0.5v0.6m1 -0.9v0.7m1 -0.6v0.6m1 -0.5v0.6m1 -0.6v0.6m1 -0.7v0.6m1 -0.5v0.6m1 -0.5v0.6m1 -0.7v0.6m1 -0.7v0.7m1 -0.7v0.6m1 -0.6v0.6m1 -0.5v0.6m1 -0.7v0.7m1 -0.5v0.6m1 -0.8v0.7m1 -0.6v0.6m1 -0.6v0.6m1 -0.6v0.6m1 -0.5v0.6m1 -0.6v0.6m1 -0.6v0.6m1 -0.7v0.6m1 -0.6v0.6m1 -0.5v0.6m1 -0.7v0.6m1 -0.7v0.6m1 -0.4v0.6m1 -0.7v0.6m1 -0.6v0.6m1 -0.7v0.6m1 -0.6v0.6m1 -0.8v0.6m1 -0.6v0.7m1 -0.6v0.6m1 -0.5v0.6m1 -0.7v0.6m1 -0.7v0.7m1 -16.5v26.3m1 -38.3v36.2m1 -23.9v28.1m1 -35.6v31.7m1 -21.5v22.7m1 -24.3v23.6m1 -22.6v23.4m1 -24.4v21.1m1 -19.5v21.9m1 -22.1v21.2m1 -22.8v25.0m1 -25.0v21.1m1 -19.2v20.7m1 -16.0v16.2m1 -22.1v22.5m1 -20.6v19.5m1 -17.8v15.2m1 -15.2v14.5m1 -10.3v10.3m1 -11.1v11.4m1 -14.5v15.6m1 -11.5v10.8m1 -14.0v15.4m1 -14.6v13.0m1 -10.2v11.5m1 -14.4v13.8m1 -10.9v10.6m1 -9.8v8.2m1 -7.2v7.8m1 -11.2v11.3m1 -10.2v10.7m1 -11.1v11.2m1 -7.7v6.2m1 -5.9v6.5m1 -9.1v8.6m1 -8.6v8.2m1 -6.9v7.0m1 -6.4v7.2m1 -7.7v6.2m1 -6.1v7.3m1 -7.0v6.6m1 -7.0v6.7m1 -6.3v5.5m1 -3.5v3.6m1 -3.7v4.5m1 -5.8v4.7m1 -4.8v5.5m1 -4.1v4.2m1 -4.6v3.8m1 -3.3v3.5m1 -3.4v3.6m1 -4.1v3.5m1 -4.0v4.0m1 -2.8v3.0m1 -3.6v3.8m1 -3.5v3.2m1 -2.7v2.4m1 -2.2v2.4m1 -2.0v2.1m1 -3.0v2.6m1 -2.1v2.5m1 -2.2v1.8m1 -1.9v2.0m1 -2.5v2.3m1 -1.8v2.1m1 -2.1v1.8m1 -1.4v1.3m1 -1.6v1.8m1 -1.6v1.6m1 -1.2v1.1m1 -1.6v1.6m1 -1.2v1.0m1 -0.8v0.9m1 -0.8v0.9m1 -1.0v0.8m1 -0.7v0.6m1 -0.6v0.7m1 -0.6v0.6m1 -0.6v0.6m1 -0.6v0.6m1 -0.7v0.7m1 -0.7v0.7m1 -0.6v0.6m1 -0.7v0.6m1 -0.4v0.6m1 -0.7v0.6m1 -0.5v0.6m1 -0.6v0.6m1 -0.6v0.6m1 -0.5v0.6m1 -0.8v0.6m1 -0.5v0.6m1 -0.6v0.6m1 -0.6v0.6m1 -0.5v0.6m1 -0.8v0.7m1 -0.6v0.6m1 -0.7v0.6m1 -0.4v0.6m1 -0.8v0.7m1 -0.5v0.6m1 -0.6v0.6m1 -0.8v0.6m1 -0.5v0.6m1 -0.7v0.6m1 -0.6v0.6m1 -0.6v0.6m1 -0.8v0.7m1 -0.5v0.6m1 -29.0v38.2m1 -38.3v41.6m1 -27.5v23.7m1 -25.2v24.1m1 -20.8v20.2m1 -24.2v25.8m1 -25.4v22.9m1 -26.5v29.1m1 -19.3v18.6m1 -24.8v22.8m1 -26.0v24.9m1 -16.6v17.4m1 -19.4v17.9m1 -13.4v14.1m1 -14.4v15.8m1 -20.8v18.7m1 -14.7v16.6m1 -16.9v15.0m1 -11.3v10.2m1 -12.9v13.3m1 -8.7v8.5m1 -8.1v6.0m1 -4.3v4.5m1 -3.3v2.6m1 -1.6v0.6m1 -0.6v0.6m1 -0.6v0.6m1 -0.8v0.7m1 -0.5v0.6m1 -0.6v0.6m1 -0.5v0.6m1 -0.8v0.7m1 -0.5v0.6m1 -0.8v0.7m1 -0.7v0.7m1 -0.7v0.7m1 -0.6v0.6m1 -18.1v28.6m1 -26.0v26.7m1 -39.2v37.7m1 -32.6v30.4m1 -29.0v30.0m1 -26.1v29.1m1 -29.9v26.1m1 -20.7v21.1m1 -20.0v21.3m1 -20.7v22.1m1 -21.0v15.3m1 -24.0v27.0m1 -25.4v26.8m1 -20.7v17.0m1 -15.8v17.3m1 -14.2v11.5m1 -14.0v15.9m1 -15.4v12.4m1 -12.0v13.2m1 -9.2v9.3m1 -11.7v10.7m1 -7.0v5.4m1 -5.0v4.2m1 -1.9v0.6m1 -0.7v0.6m1 -0.6v0.7m1 -0.7v0.7m1 -0.6v0.6m1 -0.6v0.6m1 -0.7v0.7m1 -0.8v0.6m1 -0.6v0.7m1 -0.7v0.6m1 -0.4v0.6m1 -0.7v0.6m1 -0.6v0.6m1 -0.5v0.6m1 -33.6v46.9m1 -43.7v44.3m1 -32.8v26.0m1 -35.8v43.7m1 -34.0v30.3m1 -33.0v33.3m1 -30.6v31.1m1 -23.5v18.3m1 -23.5v22.7m1 -21.4v22.1m1 -19.8v20.8m1 -26.1v24.4m1 -19.2v18.8m1 -15.9v18.3m1 -24.6v21.6m1 -15.5v14.5m1 -16.2v18.8m1 -15.7v14.6m1 -12.8v11.6m1 -11.3v13.7m1 -19.1v17.9m1 -16.2v14.2m1 -10.4v11.6m1 -12.5v12.7m1 -13.9v12.1m1 -9.9v9.2m1 -12.5v14.1m1 -9.5v8.3m1 -10.0v11.4m1 -8.8v8.4m1 -11.5v11.3m1 -10.7v9.8m1 -7.3v6.0m1 -7.7v8.2m1 -8.1v7.8m1 -6.8v7.1m1 -5.7v5.3m1 -5.7v6.5m1 -8.0v7.5m1 -8.0v8.4m1 -6.5v5.4m1 -4.6v5.1m1 -4.8v4.4m1 -4.6v4.4m1 -5.3v5.3m1 -5.2v4.9m1 -4.0v4.3m1 -5.0v5.0m1 -4.3v4.3m1 -4.7v4.2m1 -3.1v3.2m1 -4.0v3.7m1 -3.0v3.6m1 -4.4v4.0m1 -2.8v2.9m1 -2.9v2.5m1 -3.3v3.1m1 -3.0v3.5m1 -3.1v3.1m1 -2.8v2.7m1 -2.9v2.8m1 -2.6v2.2m1 -2.6v2.4m1 -1.6v1.5m1 -1.9v2.1m1 -2.2v2.4m1 -1.7v1.5m1 -1.8v1.6m1 -1.4v1.5m1 -1.4v1.4m1 -1.2v1.1m1 -1.1v0.9m1 -0.8v0.9m1 -0.7v0.7m1 -0.7v0.6m1 -0.5v0.6m1 -0.7v0.6m1 -0.7v0.6m1 -0.5v0.6m1 -0.6v0.6m1 -0.5v0.6m1 -0.6v0.6m1 -0.7v0.6m1 -0.5v0.6m1 -0.5v0.6m1 -0.7v0.6m1 -0.5v0.6m1 -0.6v0.6m1 -0.6v0.6m1 -0.6v0.7m1 -0.5v0.6m1 -0.7v0.7m1 -0.5v0.6m1 -0.6v0.6m1 -0.8v0.7m1 -0.6v0.6m1 -0.7v0.6m1 -0.5v0.6m1 -0.8v0.6m1 -0.5v0.6m1 -0.7v0.7m1 -0.6v0.6m1 -0.5v0.6m1 -0.6v0.6m1 -0.7v0.6m1 -0.6v0.6m1 -0.5v0.6m1 -0.7v0.6m1 -0.6v0.6m1 -0.6v0.6m1 -14.6v23.2m1 -27.3v26.7m1 -27.5v28.8m1 -32.4v34.1m1 -28.6v29.2m1 -26.5v22.4m1 -24.2v21.2m1 -15.2v15.8m1 -15.2v14.1m1 -17.2v18.0m1 -13.2v13.4m1 -16.1v16.3m1 -13.7v13.7m1 -15.6v14.6m1 -10.9v8.7m1 -9.9v11.5m1 -11.1v10.9m1 -9.1v8.4m1 -8.8v7.7m1 -7.4v7.0m1 -7.3v8.2" fill="none" stroke="#45423c" stroke-width="1.1"/>
<rect x="1095.9" y="388.5" width="146.39999999999986" height="81.0" fill="#d4af6d"/>
<rect x="1095.9" y="414" width="146.4" height="1" fill="rgba(90,70,30,0.35)" />
<rect x="1131.8" y="415" width="1" height="54.5" fill="rgba(110,85,40,0.30)" />
<rect x="1168.5" y="415" width="1" height="54.5" fill="rgba(110,85,40,0.30)" />
<rect x="1205.2" y="415" width="1" height="54.5" fill="rgba(110,85,40,0.30)" />
<text x="1099.9" y="406.5" font-size="12" fill="#2e2516" font-weight="normal" text-anchor="start" stroke="#2e2516" stroke-width="0.2" >24 PS - Melody Bass</text>
<rect x="1683" y="388.5" width="146.5999999999999" height="81.0" fill="#d4af6d"/>
<rect x="1683" y="414" width="146.6" height="1" fill="rgba(90,70,30,0.35)" />
<rect x="1719" y="415" width="1" height="54.5" fill="rgba(110,85,40,0.30)" />
<rect x="1755.7" y="415" width="1" height="54.5" fill="rgba(110,85,40,0.30)" />
<rect x="1792.4" y="415" width="1" height="54.5" fill="rgba(110,85,40,0.30)" />
<text x="1687" y="406.5" font-size="12" fill="#2e2516" font-weight="normal" text-anchor="start" stroke="#2e2516" stroke-width="0.2" >28 PS - Melody Bass</text>
<clipPath id="mixc"><rect x="1096" y="415" width="146.3" height="54.5"/><rect x="1683" y="415" width="146.6" height="54.5"/></clipPath>
<g clip-path="url(#mixc)" fill="none" stroke="#ad8e57" stroke-width="1.1"><path d="M1096.5 426.8v39.7m1 -48.7v47.5m1 -37.6v38.2m1 -30.9v29.8m1 -37.3v39.0m1 -28.2v24.2m1 -23.4v26.4m1 -35.3v29.8m1 -32.8v38.1m1 -31.8v29.1m1 -21.1v17.4m1 -21.0v20.9m1 -15.7v16.2m1 -13.5v14.0m1 -16.8v17.6m1 -16.8v15.4m1 -13.6v12.9m1 -10.9v9.2m1 -9.4v9.8m1 -6.0v4.4m1 -1.5v0.6m1 -0.6v0.6m1 -0.7v0.6m1 -0.6v0.6m1 -0.6v0.7m1 -0.4v0.6m1 -0.9v0.6m1 -0.6v0.6m1 -0.4v0.6m1 -0.8v0.6m1 -0.4v0.6m1 -0.8v0.7m1 -0.4v0.6m1 -0.6v0.6m1 -0.8v0.6m1 -0.5v0.6m1 -0.5v0.6m1 -21.0v33.4m1 -32.5v30.2m1 -31.6v30.1m1 -44.5v48.4m1 -34.5v34.7m1 -32.2v28.1m1 -39.0v40.4m1 -26.3v28.3m1 -29.5v24.2m1 -32.4v32.5m1 -24.2v22.3m1 -18.5v21.2m1 -22.6v22.3m1 -23.1v21.9m1 -28.2v27.9m1 -22.1v23.4m1 -18.2v14.6m1 -20.8v23.0m1 -15.7v12.9m1 -15.7v17.7m1 -12.4v11.8m1 -14.7v13.1m1 -9.0v7.4m1 -4.5v5.2m1 -4.1v2.8m1 -1.3v0.6m1 -0.7v0.6m1 -0.5v0.6m1 -0.6v0.6m1 -0.7v0.6m1 -0.6v0.6m1 -0.7v0.6m1 -0.4v0.6m1 -0.7v0.6m1 -0.5v0.6m1 -0.7v0.6m1 -28.4v44.5m1 -57.1v54.2m1 -45.9v44.6m1 -31.7v26.6m1 -23.3v29.8m1 -41.6v41.4m1 -28.0v25.1m1 -32.1v32.3m1 -28.6v29.8m1 -25.3v22.0m1 -30.9v32.6m1 -31.6v30.0m1 -29.7v30.5m1 -23.9v22.3m1 -28.3v28.8m1 -22.3v21.6m1 -25.8v24.6m1 -21.2v20.1m1 -19.0v19.7m1 -14.3v14.2m1 -22.1v22.8m1 -19.7v17.7m1 -17.2v17.6m1 -14.7v15.3m1 -12.2v11.7m1 -11.0v10.3m1 -13.2v12.0m1 -13.1v13.6m1 -12.7v13.6m1 -11.0v8.6m1 -8.6v10.0m1 -9.2v7.9m1 -11.4v12.4m1 -9.6v10.0m1 -9.1v8.5m1 -7.7v7.1m1 -9.6v10.4m1 -10.4v9.4m1 -7.8v7.6m1 -5.6v5.8m1 -8.3v8.7m1 -8.0v8.1m1 -6.3v5.1m1 -5.5v5.6m1 -4.7v4.8m1 -5.9v5.9m1 -4.8v5.2m1 -6.9v6.3m1 -3.7v3.2m1 -5.1v5.1m1 -4.5v5.0m1 -3.9v4.0m1 -3.3v2.7m1 -3.5v3.3m1 -4.0v4.1m1 -2.6v2.5m1 -3.2v3.5m1 -3.4v3.5m1 -3.6v3.8m1 -3.5v2.9m1 -2.5v2.5m1 -1.7v1.9m1 -2.7v2.5m1 -1.9v1.9m1 -2.3v2.4m1 -2.2v2.3m1 -1.9v1.9m1 -2.3v2.0m1 -1.9v2.1m1 -1.3v1.2m1 -1.5v1.6m1 -1.3v1.2m1 -1.4v1.4"/><path d="M1683.5 428.7v37.6m1 -40.5v36.2m1 -23.0v24.5m1 -28.8v31.7m1 -38.3v36.4m1 -33.2v33.3m1 -25.7v23.9m1 -23.5v26.1m1 -23.9v22.9m1 -22.6v21.4m1 -24.3v22.4m1 -28.1v25.8m1 -15.1v19.2m1 -23.7v19.4m1 -23.5v26.9m1 -16.8v14.2m1 -13.6v12.8m1 -16.0v15.2m1 -14.5v13.8m1 -9.0v10.6m1 -10.9v9.4m1 -8.9v8.5m1 -6.0v4.8m1 -3.5v3.6m1 -1.6v0.7m1 -0.5v0.6m1 -0.7v0.6m1 -0.4v0.6m1 -0.7v0.6m1 -0.7v0.6m1 -0.4v0.6m1 -0.7v0.6m1 -0.5v0.6m1 -0.6v0.6m1 -0.5v0.6m1 -0.6v0.6m1 -0.6v0.6m1 -23.9v35.3m1 -28.9v27.1m1 -29.6v27.9m1 -32.2v36.9m1 -36.1v35.6m1 -29.4v28.8m1 -31.3v26.1m1 -31.3v35.6m1 -23.3v19.0m1 -29.4v29.5m1 -21.2v19.0m1 -15.6v18.5m1 -29.4v30.8m1 -24.0v18.9m1 -16.0v18.9m1 -23.0v21.9m1 -15.1v14.2m1 -15.3v15.1m1 -12.4v12.7m1 -15.6v12.9m1 -8.0v9.1m1 -7.7v7.0m1 -6.1v4.8m1 -1.9v0.6m1 -0.5v0.6m1 -0.7v0.6m1 -0.4v0.6m1 -0.7v0.6m1 -0.6v0.6m1 -0.6v0.6m1 -0.7v0.7m1 -0.6v0.6m1 -0.6v0.6m1 -0.7v0.6m1 -0.5v0.6m1 -0.7v0.6m1 -0.4v0.6m1 -38.9v53.0m1 -51.0v51.2m1 -42.1v40.4m1 -36.0v30.1m1 -28.5v29.7m1 -38.8v41.0m1 -33.0v32.1m1 -24.4v23.4m1 -31.4v30.1m1 -22.5v22.3m1 -22.6v23.8m1 -20.7v17.2m1 -18.8v21.6m1 -26.2v25.7m1 -26.8v25.2m1 -14.5v14.8m1 -18.7v17.1m1 -18.8v19.2m1 -14.5v14.3m1 -20.2v18.8m1 -13.1v13.9m1 -12.2v12.5m1 -12.3v13.6m1 -15.4v14.5m1 -11.6v10.7m1 -13.5v14.4m1 -11.6v10.4m1 -13.9v14.7m1 -10.4v9.6m1 -12.4v11.9m1 -11.0v11.5m1 -12.7v12.3m1 -10.5v9.9m1 -9.8v9.7m1 -8.3v8.3m1 -7.2v6.7m1 -6.1v6.7m1 -6.6v5.7m1 -7.7v8.0m1 -8.2v8.6m1 -6.4v6.7m1 -8.2v7.4m1 -4.6v5.0m1 -7.1v6.9m1 -6.5v6.2m1 -5.5v5.3m1 -4.6v4.6m1 -4.4v4.4m1 -5.3v5.0m1 -3.4v3.4m1 -5.1v5.3m1 -3.1v3.3m1 -4.9v4.8m1 -3.7v3.5m1 -3.3v2.8m1 -3.7v4.2m1 -2.9v2.9m1 -2.5v2.1m1 -2.0v1.9m1 -2.0v2.3m1 -2.4v2.1m1 -1.9v1.9m1 -2.7v2.8m1 -1.8v1.8m1 -2.2v2.0m1 -1.9v2.0m1 -2.2v2.1m1 -1.8v1.8m1 -1.7v1.6m1 -1.3v1.3m1 -1.5v1.4m1 -1.4v1.4"/></g>
<path d="M568 465.5 L581.8 465.5 L875.8 436 Q892 453 912.6 465.5 L1095.9 465.5 L1095.9 469.5 L568 469.5Z" fill="rgba(212,175,109,0.28)"/>
<path d="M568 465.5 L581.8 465.5 L875.8 436 Q892 453 912.6 465.5 L1095.9 465.5" stroke="#d6b26f" stroke-width="1.8" fill="none"/>
<circle cx="581.8" cy="465.5" r="2.5" fill="#1e1e1e" stroke="#e8c888" stroke-width="1.2"/>
<circle cx="875.8" cy="436" r="2.5" fill="#1e1e1e" stroke="#e8c888" stroke-width="1.2"/>
<circle cx="912.6" cy="465.5" r="2.5" fill="#1e1e1e" stroke="#e8c888" stroke-width="1.2"/>
<rect x="1242.3" y="464.6" width="440.7" height="1.8" fill="#d6b26f" />
<rect x="1242.3" y="466" width="440.7" height="3.5" fill="rgba(212,175,109,0.16)" />
<rect x="1829.6" y="464.6" width="59.4" height="1.8" fill="#d6b26f" />
<rect x="1829.6" y="466" width="59.4" height="3.5" fill="rgba(212,175,109,0.16)" />
<path d="M1095.9 464.3 L1132.9 464.3 M1133.9 437.5 L1143.9 437.5 M1140.9 448.8 L1152.9 448.8 M1158.9 464.3 L1169.9 464.3 L1169.9 451 L1205.9 451 M1205.9 464.3 L1241.9 464.3" stroke="#111" stroke-width="1.7" fill="none"/>
<rect x="1093.4" y="461.8" width="5" height="5" fill="#d4af6d" stroke="#111" stroke-width="1.2"/>
<rect x="1130.9" y="435" width="5" height="5" fill="#d4af6d" stroke="#111" stroke-width="1.2"/>
<rect x="1137.9" y="446.3" width="5" height="5" fill="#d4af6d" stroke="#111" stroke-width="1.2"/>
<rect x="1167.4" y="448.5" width="5" height="5" fill="#d4af6d" stroke="#111" stroke-width="1.2"/>
<rect x="1203.4" y="461.8" width="5" height="5" fill="#d4af6d" stroke="#111" stroke-width="1.2"/>
<circle cx="1158.9" cy="464.3" r="2.6" fill="#d4af6d" stroke="#111" stroke-width="1.2"/>
<circle cx="1169.9" cy="464.3" r="2.6" fill="#d4af6d" stroke="#111" stroke-width="1.2"/>
<path d="M1683 464.3 L1720 464.3 M1721 437.5 L1731 437.5 M1728 448.8 L1740 448.8 M1746 464.3 L1757 464.3 L1757 451 L1793 451 M1793 464.3 L1829 464.3" stroke="#111" stroke-width="1.7" fill="none"/>
<rect x="1680.5" y="461.8" width="5" height="5" fill="#d4af6d" stroke="#111" stroke-width="1.2"/>
<rect x="1718" y="435" width="5" height="5" fill="#d4af6d" stroke="#111" stroke-width="1.2"/>
<rect x="1725" y="446.3" width="5" height="5" fill="#d4af6d" stroke="#111" stroke-width="1.2"/>
<rect x="1754.5" y="448.5" width="5" height="5" fill="#d4af6d" stroke="#111" stroke-width="1.2"/>
<rect x="1790.5" y="461.8" width="5" height="5" fill="#d4af6d" stroke="#111" stroke-width="1.2"/>
<circle cx="1746" cy="464.3" r="2.6" fill="#d4af6d" stroke="#111" stroke-width="1.2"/>
<circle cx="1757" cy="464.3" r="2.6" fill="#d4af6d" stroke="#111" stroke-width="1.2"/>
<rect x="581.8" y="471" width="734.0" height="62.5" rx="3" fill="#4ba4c5"/>
<text x="585.8" y="488.6" font-size="12" fill="#17323d" font-weight="normal" text-anchor="start" stroke="#17323d" stroke-width="0.2" >Panther Bass</text>
<rect x="1315.8" y="471" width="573.2" height="62.5" rx="3" fill="#4ba4c5"/>
<text x="1319.8" y="488.6" font-size="12" fill="#17323d" font-weight="normal" text-anchor="start" stroke="#17323d" stroke-width="0.2" >Panther Bass</text>
<rect x="1315.3" y="471" width="1" height="62.5" fill="#2e6f88" />
<rect x="1168.5" y="471" width="1" height="62.5" fill="rgba(30,80,100,0.5)" />
<rect x="581.8" y="497" width="1307.2" height="1" fill="rgba(20,70,90,0.35)" />
<rect x="581.3" y="498" width="1" height="35" fill="rgba(20,80,100,0.25)" />
<rect x="618" y="498" width="1" height="35" fill="rgba(20,80,100,0.25)" />
<rect x="654.7" y="498" width="1" height="35" fill="rgba(20,80,100,0.25)" />
<rect x="691.4" y="498" width="1" height="35" fill="rgba(20,80,100,0.25)" />
<rect x="728.1" y="498" width="1" height="35" fill="rgba(20,80,100,0.25)" />
<rect x="764.8" y="498" width="1" height="35" fill="rgba(20,80,100,0.25)" />
<rect x="801.5" y="498" width="1" height="35" fill="rgba(20,80,100,0.25)" />
<rect x="838.2" y="498" width="1" height="35" fill="rgba(20,80,100,0.25)" />
<rect x="874.9" y="498" width="1" height="35" fill="rgba(20,80,100,0.25)" />
<rect x="911.6" y="498" width="1" height="35" fill="rgba(20,80,100,0.25)" />
<rect x="948.3" y="498" width="1" height="35" fill="rgba(20,80,100,0.25)" />
<rect x="985" y="498" width="1" height="35" fill="rgba(20,80,100,0.25)" />
<rect x="1021.7" y="498" width="1" height="35" fill="rgba(20,80,100,0.25)" />
<rect x="1058.4" y="498" width="1" height="35" fill="rgba(20,80,100,0.25)" />
<rect x="1095.1" y="498" width="1" height="35" fill="rgba(20,80,100,0.25)" />
<rect x="1131.8" y="498" width="1" height="35" fill="rgba(20,80,100,0.25)" />
<rect x="1168.5" y="498" width="1" height="35" fill="rgba(20,80,100,0.25)" />
<rect x="1205.2" y="498" width="1" height="35" fill="rgba(20,80,100,0.25)" />
<rect x="1241.9" y="498" width="1" height="35" fill="rgba(20,80,100,0.25)" />
<rect x="1278.6" y="498" width="1" height="35" fill="rgba(20,80,100,0.25)" />
<rect x="1315.3" y="498" width="1" height="35" fill="rgba(20,80,100,0.25)" />
<rect x="1352" y="498" width="1" height="35" fill="rgba(20,80,100,0.25)" />
<rect x="1388.7" y="498" width="1" height="35" fill="rgba(20,80,100,0.25)" />
<rect x="1425.4" y="498" width="1" height="35" fill="rgba(20,80,100,0.25)" />
<rect x="1462.1" y="498" width="1" height="35" fill="rgba(20,80,100,0.25)" />
<rect x="1498.8" y="498" width="1" height="35" fill="rgba(20,80,100,0.25)" />
<rect x="1535.5" y="498" width="1" height="35" fill="rgba(20,80,100,0.25)" />
<rect x="1572.2" y="498" width="1" height="35" fill="rgba(20,80,100,0.25)" />
<rect x="1608.9" y="498" width="1" height="35" fill="rgba(20,80,100,0.25)" />
<rect x="1645.6" y="498" width="1" height="35" fill="rgba(20,80,100,0.25)" />
<rect x="1682.3" y="498" width="1" height="35" fill="rgba(20,80,100,0.25)" />
<rect x="1719" y="498" width="1" height="35" fill="rgba(20,80,100,0.25)" />
<rect x="1755.7" y="498" width="1" height="35" fill="rgba(20,80,100,0.25)" />
<rect x="1792.4" y="498" width="1" height="35" fill="rgba(20,80,100,0.25)" />
<rect x="1829.1" y="498" width="1" height="35" fill="rgba(20,80,100,0.25)" />
<rect x="1865.8" y="498" width="1" height="35" fill="rgba(20,80,100,0.25)" />
<rect x="1095.6" y="498" width="73.4" height="35" fill="rgba(20,60,80,0.15)" />
<rect x="1279.1" y="498" width="36.7" height="35" fill="rgba(20,60,80,0.15)" />
<rect x="581.8" y="528" width="42" height="2" fill="#2f7590" />
<rect x="619.3" y="520.8" width="35.5" height="2" fill="#2f7590" />
<rect x="655.8" y="516.4" width="33" height="2" fill="#2f7590" />
<rect x="691.8" y="512" width="22" height="2" fill="#2f7590" />
<rect x="711.8" y="505" width="10" height="2" fill="#2f7590" />
<rect x="728.6" y="520.8" width="34" height="2" fill="#2f7590" />
<rect x="765.6" y="516.4" width="36" height="2" fill="#2f7590" />
<rect x="802.6" y="512" width="28" height="2" fill="#2f7590" />
<rect x="820.6" y="505" width="16" height="2" fill="#2f7590" />
<rect x="829.6" y="501" width="9" height="2" fill="#2f7590" />
<rect x="838.6" y="512" width="36" height="2" fill="#2f7590" />
<rect x="886.4" y="528" width="39" height="2" fill="#2f7590" />
<rect x="930.4" y="520.8" width="39" height="2" fill="#2f7590" />
<rect x="971.4" y="516.4" width="34" height="2" fill="#2f7590" />
<rect x="1001.4" y="512" width="21" height="2" fill="#2f7590" />
<rect x="1025.2" y="520.8" width="39" height="2" fill="#2f7590" />
<rect x="1066.2" y="516.4" width="42" height="2" fill="#2f7590" />
<rect x="1108.2" y="512" width="24" height="2" fill="#2f7590" />
<rect x="1118.2" y="505" width="26" height="2" fill="#2f7590" />
<rect x="1139.2" y="516.4" width="29" height="2" fill="#2f7590" />
<rect x="1169" y="528" width="42" height="2" fill="#2f7590" />
<rect x="1206.5" y="520.8" width="35.5" height="2" fill="#2f7590" />
<rect x="1243" y="516.4" width="33" height="2" fill="#2f7590" />
<rect x="1279" y="512" width="22" height="2" fill="#2f7590" />
<rect x="1299" y="505" width="10" height="2" fill="#2f7590" />
<rect x="1315.8" y="520.8" width="34" height="2" fill="#2f7590" />
<rect x="1352.8" y="516.4" width="36" height="2" fill="#2f7590" />
<rect x="1389.8" y="512" width="28" height="2" fill="#2f7590" />
<rect x="1407.8" y="505" width="16" height="2" fill="#2f7590" />
<rect x="1416.8" y="501" width="9" height="2" fill="#2f7590" />
<rect x="1425.8" y="512" width="36" height="2" fill="#2f7590" />
<rect x="1473.6" y="528" width="39" height="2" fill="#2f7590" />
<rect x="1517.6" y="520.8" width="39" height="2" fill="#2f7590" />
<rect x="1558.6" y="516.4" width="34" height="2" fill="#2f7590" />
<rect x="1588.6" y="512" width="21" height="2" fill="#2f7590" />
<rect x="1612.4" y="520.8" width="39" height="2" fill="#2f7590" />
<rect x="1653.4" y="516.4" width="42" height="2" fill="#2f7590" />
<rect x="1695.4" y="512" width="24" height="2" fill="#2f7590" />
<rect x="1705.4" y="505" width="26" height="2" fill="#2f7590" />
<rect x="1726.4" y="516.4" width="29" height="2" fill="#2f7590" />
<rect x="1756.2" y="528" width="42" height="2" fill="#2f7590" />
<rect x="1793.7" y="520.8" width="35.5" height="2" fill="#2f7590" />
<rect x="1830.2" y="516.4" width="33" height="2" fill="#2f7590" />
<rect x="1866.2" y="512" width="22" height="2" fill="#2f7590" />
<rect x="1886.2" y="505" width="2.8" height="2" fill="#2f7590" />
<path d="M568 626 L655.5 625.5 L765.4 617.5 L765.4 629.5 L568 629.5Z" fill="rgba(85,185,220,0.18)"/>
<path d="M568 626 L655.5 625.5 L765.4 617.5" stroke="#5ec0e2" stroke-width="1.8" fill="none"/>
<circle cx="655.5" cy="625.5" r="2.4" fill="#293033" stroke="#8fd8f0" stroke-width="1.1"/>
<rect x="765.6" y="534.5" width="183.3" height="95.0" fill="#4a9ed8"/>
<rect x="765.6" y="560.5" width="183.3" height="1" fill="rgba(0,0,0,0.12)" />
<rect x="801.5" y="561.5" width="1" height="68" fill="rgba(0,0,0,0.13)" />
<rect x="838.2" y="561.5" width="1" height="68" fill="rgba(0,0,0,0.13)" />
<rect x="874.9" y="561.5" width="1" height="68" fill="rgba(0,0,0,0.13)" />
<rect x="911.6" y="561.5" width="1" height="68" fill="rgba(0,0,0,0.13)" />
<text x="770.1" y="551.5" font-size="12" fill="#16283a" font-weight="normal" text-anchor="start" stroke="#16283a" stroke-width="0.1" >Main</text>
<rect x="948.9" y="534.5" width="183.4" height="95.0" fill="#4a9ed8"/>
<rect x="948.9" y="560.5" width="183.4" height="1" fill="rgba(0,0,0,0.12)" />
<rect x="985" y="561.5" width="1" height="68" fill="rgba(0,0,0,0.13)" />
<rect x="1021.7" y="561.5" width="1" height="68" fill="rgba(0,0,0,0.13)" />
<rect x="1058.4" y="561.5" width="1" height="68" fill="rgba(0,0,0,0.13)" />
<rect x="1095.1" y="561.5" width="1" height="68" fill="rgba(0,0,0,0.13)" />
<text x="953.4" y="551.5" font-size="12" fill="#16283a" font-weight="normal" text-anchor="start" stroke="#16283a" stroke-width="0.1" >Main</text>
<rect x="1132.3" y="534.5" width="183.5" height="95.0" fill="#4ba4c5"/>
<rect x="1132.3" y="560.5" width="183.5" height="1" fill="rgba(0,0,0,0.12)" />
<rect x="1168.5" y="561.5" width="1" height="68" fill="rgba(0,0,0,0.13)" />
<rect x="1205.2" y="561.5" width="1" height="68" fill="rgba(0,0,0,0.13)" />
<rect x="1241.9" y="561.5" width="1" height="68" fill="rgba(0,0,0,0.13)" />
<rect x="1278.6" y="561.5" width="1" height="68" fill="rgba(0,0,0,0.13)" />
<text x="1136.8" y="551.5" font-size="12" fill="#16283a" font-weight="normal" text-anchor="start" stroke="#16283a" stroke-width="0.1" >Peak</text>
<rect x="1389.5" y="534.5" width="183.3" height="95.0" fill="#a0bddb"/>
<rect x="1389.5" y="560.5" width="183.3" height="1" fill="rgba(0,0,0,0.12)" />
<rect x="1425.4" y="561.5" width="1" height="68" fill="rgba(0,0,0,0.13)" />
<rect x="1462.1" y="561.5" width="1" height="68" fill="rgba(0,0,0,0.13)" />
<rect x="1498.8" y="561.5" width="1" height="68" fill="rgba(0,0,0,0.13)" />
<rect x="1535.5" y="561.5" width="1" height="68" fill="rgba(0,0,0,0.13)" />
<text x="1394" y="551.5" font-size="12" fill="#16283a" font-weight="normal" text-anchor="start" stroke="#16283a" stroke-width="0.1" >Mellow</text>
<rect x="1610" y="534.5" width="183.4" height="95.0" fill="#4ba4c5"/>
<rect x="1610" y="560.5" width="183.4" height="1" fill="rgba(0,0,0,0.12)" />
<rect x="1645.6" y="561.5" width="1" height="68" fill="rgba(0,0,0,0.13)" />
<rect x="1682.3" y="561.5" width="1" height="68" fill="rgba(0,0,0,0.13)" />
<rect x="1719" y="561.5" width="1" height="68" fill="rgba(0,0,0,0.13)" />
<rect x="1755.7" y="561.5" width="1" height="68" fill="rgba(0,0,0,0.13)" />
<text x="1614.5" y="551.5" font-size="12" fill="#16283a" font-weight="normal" text-anchor="start" stroke="#16283a" stroke-width="0.1" >Follow</text>
<rect x="1830" y="534.5" width="59" height="95.0" fill="#4ba4c5"/>
<rect x="1830" y="560.5" width="59" height="1" fill="rgba(0,0,0,0.12)" />
<rect x="1865.8" y="561.5" width="1" height="68" fill="rgba(0,0,0,0.13)" />
<text x="1834.5" y="551.5" font-size="12" fill="#16283a" font-weight="normal" text-anchor="start" stroke="#16283a" stroke-width="0.1" >29 Panther Bass</text>
<rect x="1889" y="534.5" width="31" height="95.5" fill="#383838" />
<rect x="1315.8" y="625.3" width="73.70000000000005" height="4.2000000000000455" fill="rgba(85,185,220,0.18)"/>
<rect x="1315.8" y="624.4" width="73.7" height="1.8" fill="#5ec0e2" />
<rect x="1572.8" y="625.3" width="37.200000000000045" height="4.2000000000000455" fill="rgba(85,185,220,0.18)"/>
<rect x="1572.8" y="624.4" width="37.2" height="1.8" fill="#5ec0e2" />
<rect x="1793.4" y="625.3" width="36.59999999999991" height="4.2000000000000455" fill="rgba(85,185,220,0.18)"/>
<rect x="1793.4" y="624.4" width="36.6" height="1.8" fill="#5ec0e2" />
<path d="M765.9 617.4 Q774.9 622.5 784 624 Q791.9 604.6 801.6 604.6 Q815.9 612 829.8 621 Q834.9 612 839.1 585.7 Q843.9 622 857.6 624 Q869.9 625 875.3 610 L875.3 629.5 L765.9 629.5Z" fill="rgba(20,60,100,0.20)"/>
<path d="M765.9 617.4 Q774.9 622.5 784 624 Q791.9 604.6 801.6 604.6 Q815.9 612 829.8 621 Q834.9 612 839.1 585.7 Q843.9 622 857.6 624 Q869.9 625 875.3 610" stroke="#0d0d0d" stroke-width="1.6" fill="none"/>
<circle cx="765.9" cy="617.4" r="2.5" fill="#4a9ed8" stroke="#0d0d0d" stroke-width="1.2"/>
<circle cx="784" cy="624" r="2.5" fill="#4a9ed8" stroke="#0d0d0d" stroke-width="1.2"/>
<circle cx="801.6" cy="604.6" r="2.5" fill="#4a9ed8" stroke="#0d0d0d" stroke-width="1.2"/>
<circle cx="829.8" cy="621" r="2.5" fill="#4a9ed8" stroke="#0d0d0d" stroke-width="1.2"/>
<circle cx="839.1" cy="585.7" r="2.5" fill="#4a9ed8" stroke="#0d0d0d" stroke-width="1.2"/>
<circle cx="857.6" cy="624" r="2.5" fill="#4a9ed8" stroke="#0d0d0d" stroke-width="1.2"/>
<path d="M875.3 610 h11" stroke="#0d0d0d" stroke-width="1.6"/>
<rect x="872.9" y="607.6" width="4.8" height="4.8" fill="#4a9ed8" stroke="#0d0d0d" stroke-width="1.2"/>
<path d="M885 624 h10" stroke="#0d0d0d" stroke-width="1.6"/>
<rect x="882.6" y="621.6" width="4.8" height="4.8" fill="#4a9ed8" stroke="#0d0d0d" stroke-width="1.2"/>
<path d="M893.8 615.2 h37.9" stroke="#0d0d0d" stroke-width="1.6"/>
<rect x="891.4" y="612.8" width="4.8" height="4.8" fill="#4a9ed8" stroke="#0d0d0d" stroke-width="1.2"/>
<path d="M931.2 624 Q941.9 621 948.9 614.3" stroke="#0d0d0d" stroke-width="1.6" fill="none"/>
<circle cx="931.2" cy="624" r="2.5" fill="#4a9ed8" stroke="#0d0d0d" stroke-width="1.2"/>
<circle cx="948.9" cy="614.3" r="2.5" fill="#4a9ed8" stroke="#0d0d0d" stroke-width="1.2"/>
<path d="M948.9 617.4 Q957.9 622.5 967 624 Q974.9 604.6 984.6 604.6 Q998.9 612 1012.8 621 Q1017.9 612 1022.1 585.7 Q1026.9 622 1040.6 624 Q1052.9 625 1058.3 610 L1058.3 629.5 L948.9 629.5Z" fill="rgba(20,60,100,0.20)"/>
<path d="M948.9 617.4 Q957.9 622.5 967 624 Q974.9 604.6 984.6 604.6 Q998.9 612 1012.8 621 Q1017.9 612 1022.1 585.7 Q1026.9 622 1040.6 624 Q1052.9 625 1058.3 610" stroke="#0d0d0d" stroke-width="1.6" fill="none"/>
<circle cx="948.9" cy="617.4" r="2.5" fill="#4a9ed8" stroke="#0d0d0d" stroke-width="1.2"/>
<circle cx="967" cy="624" r="2.5" fill="#4a9ed8" stroke="#0d0d0d" stroke-width="1.2"/>
<circle cx="984.6" cy="604.6" r="2.5" fill="#4a9ed8" stroke="#0d0d0d" stroke-width="1.2"/>
<circle cx="1012.8" cy="621" r="2.5" fill="#4a9ed8" stroke="#0d0d0d" stroke-width="1.2"/>
<circle cx="1022.1" cy="585.7" r="2.5" fill="#4a9ed8" stroke="#0d0d0d" stroke-width="1.2"/>
<circle cx="1040.6" cy="624" r="2.5" fill="#4a9ed8" stroke="#0d0d0d" stroke-width="1.2"/>
<path d="M1058.3 610 h11" stroke="#0d0d0d" stroke-width="1.6"/>
<rect x="1055.9" y="607.6" width="4.8" height="4.8" fill="#4a9ed8" stroke="#0d0d0d" stroke-width="1.2"/>
<path d="M1068 624 h10" stroke="#0d0d0d" stroke-width="1.6"/>
<rect x="1065.6" y="621.6" width="4.8" height="4.8" fill="#4a9ed8" stroke="#0d0d0d" stroke-width="1.2"/>
<path d="M1076.8 615.2 h37.9" stroke="#0d0d0d" stroke-width="1.6"/>
<rect x="1074.4" y="612.8" width="4.8" height="4.8" fill="#4a9ed8" stroke="#0d0d0d" stroke-width="1.2"/>
<path d="M1114.2 624 Q1124.9 621 1131.9 614.3" stroke="#0d0d0d" stroke-width="1.6" fill="none"/>
<circle cx="1114.2" cy="624" r="2.5" fill="#4a9ed8" stroke="#0d0d0d" stroke-width="1.2"/>
<circle cx="1131.9" cy="614.3" r="2.5" fill="#4a9ed8" stroke="#0d0d0d" stroke-width="1.2"/>
<circle cx="948.9" cy="619.6" r="2.5" fill="#4a9ed8" stroke="#0d0d0d" stroke-width="1.2"/>
<circle cx="1132.3" cy="619.6" r="2.5" fill="#4a9ed8" stroke="#0d0d0d" stroke-width="1.2"/>
<path d="M940.5 534.5 L940.5 545.5 Q940.5 548.5 943.1 548.5 Q945.7 548.5 945.7 545.5 L945.7 543.0" stroke="#0c0c0c" stroke-width="2.6" fill="none"/><path d="M940.5 534.5 L940.5 545.5 Q940.5 548.5 943.1 548.5 Q945.7 548.5 945.7 545.5 L945.7 543.0" stroke="#7a7a7a" stroke-width="0.6" fill="none"/>
<path d="M1124 534.5 L1124 545.5 Q1124 548.5 1126.6 548.5 Q1129.2 548.5 1129.2 545.5 L1129.2 543.0" stroke="#0c0c0c" stroke-width="2.6" fill="none"/><path d="M1124 534.5 L1124 545.5 Q1124 548.5 1126.6 548.5 Q1129.2 548.5 1129.2 545.5 L1129.2 543.0" stroke="#7a7a7a" stroke-width="0.6" fill="none"/>
<path d="M1132.3 619.6 Q1141 621 1150.8 624 Q1160 605 1169.3 604.6 Q1183 612 1197.1 621 Q1202 605 1206 576 Q1240 585 1261.2 615.2 Q1265 620 1270.9 622.3 Q1285 624 1297.3 624 L1315.8 624.5 L1315.8 629.5 L1132.3 629.5Z" fill="rgba(20,50,70,0.25)"/>
<path d="M1132.3 619.6 Q1141 621 1150.8 624 Q1160 605 1169.3 604.6 Q1183 612 1197.1 621 Q1202 605 1206 576 Q1240 585 1261.2 615.2 Q1265 620 1270.9 622.3 Q1285 624 1297.3 624 L1315.8 624.5" stroke="#0d0d0d" stroke-width="1.6" fill="none"/>
<circle cx="1150.8" cy="624" r="2.4" fill="#4ba4c5" stroke="#0d0d0d" stroke-width="1.2"/>
<circle cx="1169.3" cy="604.6" r="2.4" fill="#4ba4c5" stroke="#0d0d0d" stroke-width="1.2"/>
<circle cx="1197.1" cy="621" r="2.4" fill="#4ba4c5" stroke="#0d0d0d" stroke-width="1.2"/>
<circle cx="1206" cy="576" r="2.4" fill="#4ba4c5" stroke="#0d0d0d" stroke-width="1.2"/>
<circle cx="1261.2" cy="615.2" r="2.4" fill="#4ba4c5" stroke="#0d0d0d" stroke-width="1.2"/>
<circle cx="1270.9" cy="622.3" r="2.4" fill="#4ba4c5" stroke="#0d0d0d" stroke-width="1.2"/>
<circle cx="1297.3" cy="624" r="2.4" fill="#4ba4c5" stroke="#0d0d0d" stroke-width="1.2"/>
<path d="M1389.5 624.8 L1408 623.8 L1453 621.2 L1481 624 L1500 616 L1509 624.5 L1518 615.5 L1527 621.5 L1555 624 L1572.8 624.5 L1572.8 629.5 L1389.5 629.5Z" fill="rgba(60,90,120,0.12)"/>
<path d="M1389.5 624.8 L1408 623.8 L1453 621.2 L1481 624 L1500 616 L1509 624.5 L1518 615.5 L1527 621.5 L1555 624 L1572.8 624.5" stroke="#0d0d0d" stroke-width="1.6" fill="none" stroke-linejoin="round"/>
<circle cx="1408" cy="623.8" r="2.3" fill="#a0bddb" stroke="#0d0d0d" stroke-width="1.2"/>
<circle cx="1453" cy="621.2" r="2.3" fill="#a0bddb" stroke="#0d0d0d" stroke-width="1.2"/>
<circle cx="1481" cy="624" r="2.3" fill="#a0bddb" stroke="#0d0d0d" stroke-width="1.2"/>
<circle cx="1500" cy="616" r="2.3" fill="#a0bddb" stroke="#0d0d0d" stroke-width="1.2"/>
<circle cx="1509" cy="624.5" r="2.3" fill="#a0bddb" stroke="#0d0d0d" stroke-width="1.2"/>
<circle cx="1518" cy="615.5" r="2.3" fill="#a0bddb" stroke="#0d0d0d" stroke-width="1.2"/>
<circle cx="1527" cy="621.5" r="2.3" fill="#a0bddb" stroke="#0d0d0d" stroke-width="1.2"/>
<circle cx="1555" cy="624" r="2.3" fill="#a0bddb" stroke="#0d0d0d" stroke-width="1.2"/>
<path d="M1610 625.5 L1627.5 623.5 L1646.3 615 L1675 620.5 L1683 603 L1701 624 L1720 615.5 L1729 624.5 L1738 615.5 L1748 621.5 L1775 624 L1793.4 625 L1793.4 629.5 L1610 629.5Z" fill="rgba(20,50,70,0.18)"/>
<path d="M1610 625.5 L1627.5 623.5 L1646.3 615 L1675 620.5 L1683 603 L1701 624 L1720 615.5 L1729 624.5 L1738 615.5 L1748 621.5 L1775 624 L1793.4 625" stroke="#0d0d0d" stroke-width="1.6" fill="none" stroke-linejoin="round"/>
<circle cx="1610" cy="625.5" r="2.3" fill="#4ba4c5" stroke="#0d0d0d" stroke-width="1.2"/>
<circle cx="1627.5" cy="623.5" r="2.3" fill="#4ba4c5" stroke="#0d0d0d" stroke-width="1.2"/>
<circle cx="1646.3" cy="615" r="2.3" fill="#4ba4c5" stroke="#0d0d0d" stroke-width="1.2"/>
<circle cx="1675" cy="620.5" r="2.3" fill="#4ba4c5" stroke="#0d0d0d" stroke-width="1.2"/>
<circle cx="1683" cy="603" r="2.3" fill="#4ba4c5" stroke="#0d0d0d" stroke-width="1.2"/>
<circle cx="1701" cy="624" r="2.3" fill="#4ba4c5" stroke="#0d0d0d" stroke-width="1.2"/>
<circle cx="1720" cy="615.5" r="2.3" fill="#4ba4c5" stroke="#0d0d0d" stroke-width="1.2"/>
<circle cx="1729" cy="624.5" r="2.3" fill="#4ba4c5" stroke="#0d0d0d" stroke-width="1.2"/>
<circle cx="1738" cy="615.5" r="2.3" fill="#4ba4c5" stroke="#0d0d0d" stroke-width="1.2"/>
<circle cx="1748" cy="621.5" r="2.3" fill="#4ba4c5" stroke="#0d0d0d" stroke-width="1.2"/>
<circle cx="1775" cy="624" r="2.3" fill="#4ba4c5" stroke="#0d0d0d" stroke-width="1.2"/>
<circle cx="1793.4" cy="625" r="2.3" fill="#4ba4c5" stroke="#0d0d0d" stroke-width="1.2"/>
<path d="M1830 625 L1848.5 623 L1867 605.5 L1889 618 L1889 629.5 L1830 629.5Z" fill="rgba(20,50,70,0.18)"/>
<path d="M1830 625 L1848.5 623 L1867 605.5 L1889 618" stroke="#0d0d0d" stroke-width="1.6" fill="none" stroke-linejoin="round"/>
<circle cx="1830" cy="625" r="2.3" fill="#4ba4c5" stroke="#0d0d0d" stroke-width="1.2"/>
<circle cx="1848.5" cy="623" r="2.3" fill="#4ba4c5" stroke="#0d0d0d" stroke-width="1.2"/>
<circle cx="1867" cy="605.5" r="2.3" fill="#4ba4c5" stroke="#0d0d0d" stroke-width="1.2"/>
<defs><linearGradient id="resg" x1="0" y1="0" x2="1" y2="0"><stop offset="0" stop-color="#000" stop-opacity="0"/><stop offset="0.5" stop-color="#000" stop-opacity="0.02"/><stop offset="1" stop-color="#000" stop-opacity="0.2"/></linearGradient></defs>
<path d="M568 712 L581.8 711.8 L692.5 699 L728.8 716 L875.8 711 L1023.2 711 L1023.2 729 L568 729Z" fill="rgba(85,185,220,0.18)"/>
<path d="M568 712 L581.8 711.8 L692.5 699 L728.8 716 L875.8 711 L1023.2 711" stroke="#5ec0e2" stroke-width="1.8" fill="none"/>
<circle cx="581.8" cy="711.8" r="2.4" fill="#293033" stroke="#8fd8f0" stroke-width="1.1"/>
<circle cx="692.5" cy="699" r="2.4" fill="#293033" stroke="#8fd8f0" stroke-width="1.1"/>
<circle cx="728.8" cy="716" r="2.4" fill="#293033" stroke="#8fd8f0" stroke-width="1.1"/>
<circle cx="875.8" cy="711" r="2.4" fill="#293033" stroke="#8fd8f0" stroke-width="1.1"/>
<rect x="1022.7" y="631" width="146.8" height="98.0" fill="#4a9ed8"/>
<rect x="1022.2" y="657" width="36.7" height="72" fill="url(#resg)" />
<rect x="1058.9" y="657" width="36.7" height="72" fill="url(#resg)" />
<rect x="1095.6" y="657" width="36.7" height="72" fill="url(#resg)" />
<rect x="1132.3" y="657" width="36.7" height="72" fill="url(#resg)" />
<rect x="1022.7" y="657" width="146.8" height="1" fill="rgba(0,0,0,0.12)" />
<rect x="1058.4" y="658" width="1" height="71" fill="rgba(0,0,0,0.13)" />
<rect x="1095.1" y="658" width="1" height="71" fill="rgba(0,0,0,0.13)" />
<rect x="1131.8" y="658" width="1" height="71" fill="rgba(0,0,0,0.13)" />
<text x="1027.2" y="648" font-size="12" fill="#16283a" font-weight="normal" text-anchor="start" stroke="#16283a" stroke-width="0.1" >Motion</text>
<rect x="1389.5" y="631" width="293.6" height="98.0" fill="#a0bddb"/>
<rect x="1389.2" y="657" width="36.7" height="72" fill="url(#resg)" />
<rect x="1425.9" y="657" width="36.7" height="72" fill="url(#resg)" />
<rect x="1462.6" y="657" width="36.7" height="72" fill="url(#resg)" />
<rect x="1499.3" y="657" width="36.7" height="72" fill="url(#resg)" />
<rect x="1536" y="657" width="36.7" height="72" fill="url(#resg)" />
<rect x="1572.7" y="657" width="36.7" height="72" fill="url(#resg)" />
<rect x="1609.4" y="657" width="36.7" height="72" fill="url(#resg)" />
<rect x="1646.1" y="657" width="36.7" height="72" fill="url(#resg)" />
<rect x="1389.5" y="657" width="293.6" height="1" fill="rgba(0,0,0,0.12)" />
<rect x="1425.4" y="658" width="1" height="71" fill="rgba(0,0,0,0.13)" />
<rect x="1462.1" y="658" width="1" height="71" fill="rgba(0,0,0,0.13)" />
<rect x="1498.8" y="658" width="1" height="71" fill="rgba(0,0,0,0.13)" />
<rect x="1535.5" y="658" width="1" height="71" fill="rgba(0,0,0,0.13)" />
<rect x="1572.2" y="658" width="1" height="71" fill="rgba(0,0,0,0.13)" />
<rect x="1608.9" y="658" width="1" height="71" fill="rgba(0,0,0,0.13)" />
<rect x="1645.6" y="658" width="1" height="71" fill="rgba(0,0,0,0.13)" />
<text x="1394" y="648" font-size="12" fill="#16283a" font-weight="normal" text-anchor="start" stroke="#16283a" stroke-width="0.1" >Slower</text>
<rect x="1169.5" y="711" width="220.0" height="18" fill="rgba(85,185,220,0.18)"/>
<rect x="1169.5" y="710.1" width="220" height="1.8" fill="#5ec0e2" />
<rect x="1683.1" y="711" width="205.9000000000001" height="18" fill="rgba(85,185,220,0.18)"/>
<rect x="1683.1" y="710.1" width="205.9" height="1.8" fill="#5ec0e2" />
<path d="M1022.7 711 Q1030.7 708 1032 683.5 L1037.3 706.5 L1059.3 711 Q1067.3 708 1068.6 683.5 L1073.9 706.5 L1095.9 711 Q1103.9 708 1105.2 683.5 L1110.5 706.5 L1132.5 711 Q1140.5 708 1141.8 683.5 L1147.1 706.5 L1169.1 711 " stroke="#0d0d0d" stroke-width="1.6" fill="none"/>
<circle cx="1022.7" cy="711" r="2.3" fill="#4a9ed8" stroke="#0d0d0d" stroke-width="1.2"/>
<circle cx="1032" cy="683.5" r="2.3" fill="#4a9ed8" stroke="#0d0d0d" stroke-width="1.2"/>
<circle cx="1037.3" cy="706.5" r="2.3" fill="#4a9ed8" stroke="#0d0d0d" stroke-width="1.2"/>
<circle cx="1059.3" cy="711" r="2.3" fill="#4a9ed8" stroke="#0d0d0d" stroke-width="1.2"/>
<circle cx="1068.6" cy="683.5" r="2.3" fill="#4a9ed8" stroke="#0d0d0d" stroke-width="1.2"/>
<circle cx="1073.9" cy="706.5" r="2.3" fill="#4a9ed8" stroke="#0d0d0d" stroke-width="1.2"/>
<circle cx="1095.9" cy="711" r="2.3" fill="#4a9ed8" stroke="#0d0d0d" stroke-width="1.2"/>
<circle cx="1105.2" cy="683.5" r="2.3" fill="#4a9ed8" stroke="#0d0d0d" stroke-width="1.2"/>
<circle cx="1110.5" cy="706.5" r="2.3" fill="#4a9ed8" stroke="#0d0d0d" stroke-width="1.2"/>
<circle cx="1132.5" cy="711" r="2.3" fill="#4a9ed8" stroke="#0d0d0d" stroke-width="1.2"/>
<circle cx="1141.8" cy="683.5" r="2.3" fill="#4a9ed8" stroke="#0d0d0d" stroke-width="1.2"/>
<circle cx="1147.1" cy="706.5" r="2.3" fill="#4a9ed8" stroke="#0d0d0d" stroke-width="1.2"/>
<circle cx="1169.2" cy="711" r="2.3" fill="#4a9ed8" stroke="#0d0d0d" stroke-width="1.2"/>
<defs><filter id="blr" x="-1" y="-1" width="3" height="3"><feGaussianBlur stdDeviation="1.3"/></filter></defs>
<rect x="1413.5" y="678" width="6" height="10" fill="#000" opacity="0.55" filter="url(#blr)"/>
<rect x="1422.5" y="709" width="6" height="8" fill="#000" opacity="0.45" filter="url(#blr)"/>
<rect x="1486.8" y="678" width="6" height="10" fill="#000" opacity="0.55" filter="url(#blr)"/>
<rect x="1495.8" y="709" width="6" height="8" fill="#000" opacity="0.45" filter="url(#blr)"/>
<rect x="1560.1" y="678" width="6" height="10" fill="#000" opacity="0.55" filter="url(#blr)"/>
<rect x="1569.1" y="709" width="6" height="8" fill="#000" opacity="0.45" filter="url(#blr)"/>
<rect x="1633.4" y="678" width="6" height="10" fill="#000" opacity="0.55" filter="url(#blr)"/>
<rect x="1642.4" y="709" width="6" height="8" fill="#000" opacity="0.45" filter="url(#blr)"/>
<path d="M1389.5 711 Q1411.5 708 1416.5 683.5 L1425.5 713.5 L1453.5 708.5 L1462.8 711 Q1484.8 708 1489.8 683.5 L1498.8 713.5 L1526.8 708.5 L1536.1 711 Q1558.1 708 1563.1 683.5 L1572.1 713.5 L1600.1 708.5 L1609.4 711 Q1631.4 708 1636.4 683.5 L1645.4 713.5 L1673.4 708.5 L1682.7 711 " stroke="#0d0d0d" stroke-width="1.6" fill="none"/>
<circle cx="1389.5" cy="711" r="2.3" fill="#a0bddb" stroke="#0d0d0d" stroke-width="1.2"/>
<circle cx="1416.5" cy="683.5" r="2.3" fill="#a0bddb" stroke="#0d0d0d" stroke-width="1.2"/>
<circle cx="1425.5" cy="713.5" r="2.3" fill="#a0bddb" stroke="#0d0d0d" stroke-width="1.2"/>
<circle cx="1453.5" cy="708.5" r="2.3" fill="#a0bddb" stroke="#0d0d0d" stroke-width="1.2"/>
<circle cx="1462.8" cy="711" r="2.3" fill="#a0bddb" stroke="#0d0d0d" stroke-width="1.2"/>
<circle cx="1489.8" cy="683.5" r="2.3" fill="#a0bddb" stroke="#0d0d0d" stroke-width="1.2"/>
<circle cx="1498.8" cy="713.5" r="2.3" fill="#a0bddb" stroke="#0d0d0d" stroke-width="1.2"/>
<circle cx="1526.8" cy="708.5" r="2.3" fill="#a0bddb" stroke="#0d0d0d" stroke-width="1.2"/>
<circle cx="1536.1" cy="711" r="2.3" fill="#a0bddb" stroke="#0d0d0d" stroke-width="1.2"/>
<circle cx="1563.1" cy="683.5" r="2.3" fill="#a0bddb" stroke="#0d0d0d" stroke-width="1.2"/>
<circle cx="1572.1" cy="713.5" r="2.3" fill="#a0bddb" stroke="#0d0d0d" stroke-width="1.2"/>
<circle cx="1600.1" cy="708.5" r="2.3" fill="#a0bddb" stroke="#0d0d0d" stroke-width="1.2"/>
<circle cx="1609.4" cy="711" r="2.3" fill="#a0bddb" stroke="#0d0d0d" stroke-width="1.2"/>
<circle cx="1636.4" cy="683.5" r="2.3" fill="#a0bddb" stroke="#0d0d0d" stroke-width="1.2"/>
<circle cx="1645.4" cy="713.5" r="2.3" fill="#a0bddb" stroke="#0d0d0d" stroke-width="1.2"/>
<circle cx="1673.4" cy="708.5" r="2.3" fill="#a0bddb" stroke="#0d0d0d" stroke-width="1.2"/>
<clipPath id="gccut"><rect x="765" y="561.5" width="1124" height="67.5"/></clipPath><g clip-path="url(#gccut)">
<rect x="581.8" y="599" width="42" height="2" fill="rgba(30,50,70,0.16)" />
<rect x="619.3" y="591.8" width="35.5" height="2" fill="rgba(30,50,70,0.16)" />
<rect x="655.8" y="587.4" width="33" height="2" fill="rgba(30,50,70,0.16)" />
<rect x="691.8" y="583" width="22" height="2" fill="rgba(30,50,70,0.16)" />
<rect x="711.8" y="576" width="10" height="2" fill="rgba(30,50,70,0.16)" />
<rect x="728.6" y="591.8" width="34" height="2" fill="rgba(30,50,70,0.16)" />
<rect x="765.6" y="587.4" width="36" height="2" fill="rgba(30,50,70,0.16)" />
<rect x="802.6" y="583" width="28" height="2" fill="rgba(30,50,70,0.16)" />
<rect x="820.6" y="576" width="16" height="2" fill="rgba(30,50,70,0.16)" />
<rect x="829.6" y="572" width="9" height="2" fill="rgba(30,50,70,0.16)" />
<rect x="838.6" y="583" width="36" height="2" fill="rgba(30,50,70,0.16)" />
<rect x="886.4" y="599" width="39" height="2" fill="rgba(30,50,70,0.16)" />
<rect x="930.4" y="591.8" width="39" height="2" fill="rgba(30,50,70,0.16)" />
<rect x="971.4" y="587.4" width="34" height="2" fill="rgba(30,50,70,0.16)" />
<rect x="1001.4" y="583" width="21" height="2" fill="rgba(30,50,70,0.16)" />
<rect x="1025.2" y="591.8" width="39" height="2" fill="rgba(30,50,70,0.16)" />
<rect x="1066.2" y="587.4" width="42" height="2" fill="rgba(30,50,70,0.16)" />
<rect x="1108.2" y="583" width="24" height="2" fill="rgba(30,50,70,0.16)" />
<rect x="1118.2" y="576" width="26" height="2" fill="rgba(30,50,70,0.16)" />
<rect x="1139.2" y="587.4" width="29" height="2" fill="rgba(30,50,70,0.16)" />
<rect x="1169" y="599" width="42" height="2" fill="rgba(30,50,70,0.16)" />
<rect x="1206.5" y="591.8" width="35.5" height="2" fill="rgba(30,50,70,0.16)" />
<rect x="1243" y="587.4" width="33" height="2" fill="rgba(30,50,70,0.16)" />
<rect x="1279" y="583" width="22" height="2" fill="rgba(30,50,70,0.16)" />
<rect x="1299" y="576" width="10" height="2" fill="rgba(30,50,70,0.16)" />
<rect x="1315.8" y="591.8" width="34" height="2" fill="rgba(30,50,70,0.16)" />
<rect x="1352.8" y="587.4" width="36" height="2" fill="rgba(30,50,70,0.16)" />
<rect x="1389.8" y="583" width="28" height="2" fill="rgba(30,50,70,0.16)" />
<rect x="1407.8" y="576" width="16" height="2" fill="rgba(30,50,70,0.16)" />
<rect x="1416.8" y="572" width="9" height="2" fill="rgba(30,50,70,0.16)" />
<rect x="1425.8" y="583" width="36" height="2" fill="rgba(30,50,70,0.16)" />
<rect x="1473.6" y="599" width="39" height="2" fill="rgba(30,50,70,0.16)" />
<rect x="1517.6" y="591.8" width="39" height="2" fill="rgba(30,50,70,0.16)" />
<rect x="1558.6" y="587.4" width="34" height="2" fill="rgba(30,50,70,0.16)" />
<rect x="1588.6" y="583" width="21" height="2" fill="rgba(30,50,70,0.16)" />
<rect x="1612.4" y="591.8" width="39" height="2" fill="rgba(30,50,70,0.16)" />
<rect x="1653.4" y="587.4" width="42" height="2" fill="rgba(30,50,70,0.16)" />
<rect x="1695.4" y="583" width="24" height="2" fill="rgba(30,50,70,0.16)" />
<rect x="1705.4" y="576" width="26" height="2" fill="rgba(30,50,70,0.16)" />
<rect x="1726.4" y="587.4" width="29" height="2" fill="rgba(30,50,70,0.16)" />
<rect x="1756.2" y="599" width="42" height="2" fill="rgba(30,50,70,0.16)" />
<rect x="1793.7" y="591.8" width="35.5" height="2" fill="rgba(30,50,70,0.16)" />
<rect x="1830.2" y="587.4" width="33" height="2" fill="rgba(30,50,70,0.16)" />
<rect x="1866.2" y="583" width="22" height="2" fill="rgba(30,50,70,0.16)" />
<rect x="1886.2" y="576" width="2.8" height="2" fill="rgba(30,50,70,0.16)" />
</g>
<clipPath id="gcres"><rect x="765" y="658" width="1124" height="70.5"/></clipPath><g clip-path="url(#gcres)">
<rect x="581.8" y="696" width="42" height="2" fill="rgba(30,50,70,0.16)" />
<rect x="619.3" y="688.8" width="35.5" height="2" fill="rgba(30,50,70,0.16)" />
<rect x="655.8" y="684.4" width="33" height="2" fill="rgba(30,50,70,0.16)" />
<rect x="691.8" y="680" width="22" height="2" fill="rgba(30,50,70,0.16)" />
<rect x="711.8" y="673" width="10" height="2" fill="rgba(30,50,70,0.16)" />
<rect x="728.6" y="688.8" width="34" height="2" fill="rgba(30,50,70,0.16)" />
<rect x="765.6" y="684.4" width="36" height="2" fill="rgba(30,50,70,0.16)" />
<rect x="802.6" y="680" width="28" height="2" fill="rgba(30,50,70,0.16)" />
<rect x="820.6" y="673" width="16" height="2" fill="rgba(30,50,70,0.16)" />
<rect x="829.6" y="669" width="9" height="2" fill="rgba(30,50,70,0.16)" />
<rect x="838.6" y="680" width="36" height="2" fill="rgba(30,50,70,0.16)" />
<rect x="886.4" y="696" width="39" height="2" fill="rgba(30,50,70,0.16)" />
<rect x="930.4" y="688.8" width="39" height="2" fill="rgba(30,50,70,0.16)" />
<rect x="971.4" y="684.4" width="34" height="2" fill="rgba(30,50,70,0.16)" />
<rect x="1001.4" y="680" width="21" height="2" fill="rgba(30,50,70,0.16)" />
<rect x="1025.2" y="688.8" width="39" height="2" fill="rgba(30,50,70,0.16)" />
<rect x="1066.2" y="684.4" width="42" height="2" fill="rgba(30,50,70,0.16)" />
<rect x="1108.2" y="680" width="24" height="2" fill="rgba(30,50,70,0.16)" />
<rect x="1118.2" y="673" width="26" height="2" fill="rgba(30,50,70,0.16)" />
<rect x="1139.2" y="684.4" width="29" height="2" fill="rgba(30,50,70,0.16)" />
<rect x="1169" y="696" width="42" height="2" fill="rgba(30,50,70,0.16)" />
<rect x="1206.5" y="688.8" width="35.5" height="2" fill="rgba(30,50,70,0.16)" />
<rect x="1243" y="684.4" width="33" height="2" fill="rgba(30,50,70,0.16)" />
<rect x="1279" y="680" width="22" height="2" fill="rgba(30,50,70,0.16)" />
<rect x="1299" y="673" width="10" height="2" fill="rgba(30,50,70,0.16)" />
<rect x="1315.8" y="688.8" width="34" height="2" fill="rgba(30,50,70,0.16)" />
<rect x="1352.8" y="684.4" width="36" height="2" fill="rgba(30,50,70,0.16)" />
<rect x="1389.8" y="680" width="28" height="2" fill="rgba(30,50,70,0.16)" />
<rect x="1407.8" y="673" width="16" height="2" fill="rgba(30,50,70,0.16)" />
<rect x="1416.8" y="669" width="9" height="2" fill="rgba(30,50,70,0.16)" />
<rect x="1425.8" y="680" width="36" height="2" fill="rgba(30,50,70,0.16)" />
<rect x="1473.6" y="696" width="39" height="2" fill="rgba(30,50,70,0.16)" />
<rect x="1517.6" y="688.8" width="39" height="2" fill="rgba(30,50,70,0.16)" />
<rect x="1558.6" y="684.4" width="34" height="2" fill="rgba(30,50,70,0.16)" />
<rect x="1588.6" y="680" width="21" height="2" fill="rgba(30,50,70,0.16)" />
<rect x="1612.4" y="688.8" width="39" height="2" fill="rgba(30,50,70,0.16)" />
<rect x="1653.4" y="684.4" width="42" height="2" fill="rgba(30,50,70,0.16)" />
<rect x="1695.4" y="680" width="24" height="2" fill="rgba(30,50,70,0.16)" />
<rect x="1705.4" y="673" width="26" height="2" fill="rgba(30,50,70,0.16)" />
<rect x="1726.4" y="684.4" width="29" height="2" fill="rgba(30,50,70,0.16)" />
<rect x="1756.2" y="696" width="42" height="2" fill="rgba(30,50,70,0.16)" />
<rect x="1793.7" y="688.8" width="35.5" height="2" fill="rgba(30,50,70,0.16)" />
<rect x="1830.2" y="684.4" width="33" height="2" fill="rgba(30,50,70,0.16)" />
<rect x="1866.2" y="680" width="22" height="2" fill="rgba(30,50,70,0.16)" />
<rect x="1886.2" y="673" width="2.8" height="2" fill="rgba(30,50,70,0.16)" />
</g>
<defs><linearGradient id="amtg" x1="0" y1="0" x2="0" y2="1"><stop offset="0" stop-color="#4fa3c0" stop-opacity="0.42"/><stop offset="1" stop-color="#4fa3c0" stop-opacity="0.22"/></linearGradient></defs>
<path d="M568.8 806 C578.4 805.7 587.9 805.7 597.5 805.2 C601.5 805 605.4 803.4 609.4 802.6 C612.5 802 615.5 801 618.6 800.8 C629.9 800 641.3 800.5 652.6 799.5 C654.4 799.3 656.1 798.1 657.9 797.7 C659.5 797.3 661.1 796.8 662.7 796.8 C664.5 796.8 666.2 796.8 668 796.8 C678.6 796.8 689.2 796.8 699.8 796.8 C705.5 796.8 711.3 793 717 793 C717.9 793 718.7 794.8 719.6 795 C723.7 795.7 727.9 795.5 732 796 C736.1 796.5 740.2 797.6 744.3 798.6 C748 799.5 751.6 798.9 755.3 801.7 C755.5 801.9 755.7 807 755.9 807 C764.5 807 773.2 807 781.8 807 C786.9 807 792.1 806.1 797.2 805.2 C801.9 804.4 806.6 802.1 811.3 800.8 C821.6 797.9 831.9 796.6 842.2 793.3 C845.1 792.4 848.1 790.7 851 789.8 C855.9 788.3 860.7 787.7 865.6 786.3 C868.8 785.3 872.1 783.2 875.3 782.7 C881.2 781.7 887.1 782 893 781 C894.4 780.8 895.9 780.2 897.3 779.7 C901 778.5 904.6 776.8 908.3 776 C914.2 774.6 920.1 774.6 926 773 C928.9 772.2 931.9 768.6 934.8 768.6 C952.4 768.6 970.1 769 987.7 770 C990.6 770.2 993.6 771.3 996.5 772.2 C1000.9 773.5 1005.3 776.1 1009.7 777.5 C1012.7 778.5 1015.6 779.1 1018.6 780 C1023 781.4 1027.4 784.2 1031.8 785 C1037.4 786 1042.9 786.6 1048.5 787 C1055.1 787.5 1061.8 788 1068.4 788 C1073.5 788 1078.7 788 1083.8 788 C1086.3 788 1088.8 790.6 1091.3 790.7 C1111.6 791.8 1131.9 791.5 1152.2 792 C1171.1 792.5 1190.1 793.8 1209 793.8 C1220.8 793.8 1232.6 793.8 1244.4 793.8 C1246.6 793.8 1248.8 795.4 1251 796 C1253.2 796.6 1255.4 797.2 1257.6 797.7 C1259.1 798 1260.5 798.3 1262 798.6 C1269.3 799.9 1276.7 800.5 1284 801.7 C1292.8 803.2 1301.7 807 1310.5 807 C1443.5 807 1576.6 807 1709.6 807 C1722.8 807 1736.1 795.4 1749.3 789.8 C1751.5 788.9 1753.8 788.1 1756 787 C1758.9 785.6 1761.8 782.9 1764.7 781.9 C1770.1 780.1 1775.6 779.3 1781 778.3 C1786.1 777.3 1791.3 775.7 1796.4 775.7 C1826.9 775.7 1857.5 776.3 1888 776.6 L1888 811.5 L568.8 811.5Z" fill="url(#amtg)"/>
<path d="M568.8 806 C578.4 805.7 587.9 805.7 597.5 805.2 C601.5 805 605.4 803.4 609.4 802.6 C612.5 802 615.5 801 618.6 800.8 C629.9 800 641.3 800.5 652.6 799.5 C654.4 799.3 656.1 798.1 657.9 797.7 C659.5 797.3 661.1 796.8 662.7 796.8 C664.5 796.8 666.2 796.8 668 796.8 C678.6 796.8 689.2 796.8 699.8 796.8 C705.5 796.8 711.3 793 717 793 C717.9 793 718.7 794.8 719.6 795 C723.7 795.7 727.9 795.5 732 796 C736.1 796.5 740.2 797.6 744.3 798.6 C748 799.5 751.6 798.9 755.3 801.7 C755.5 801.9 755.7 807 755.9 807 C764.5 807 773.2 807 781.8 807 C786.9 807 792.1 806.1 797.2 805.2 C801.9 804.4 806.6 802.1 811.3 800.8 C821.6 797.9 831.9 796.6 842.2 793.3 C845.1 792.4 848.1 790.7 851 789.8 C855.9 788.3 860.7 787.7 865.6 786.3 C868.8 785.3 872.1 783.2 875.3 782.7 C881.2 781.7 887.1 782 893 781 C894.4 780.8 895.9 780.2 897.3 779.7 C901 778.5 904.6 776.8 908.3 776 C914.2 774.6 920.1 774.6 926 773 C928.9 772.2 931.9 768.6 934.8 768.6 C952.4 768.6 970.1 769 987.7 770 C990.6 770.2 993.6 771.3 996.5 772.2 C1000.9 773.5 1005.3 776.1 1009.7 777.5 C1012.7 778.5 1015.6 779.1 1018.6 780 C1023 781.4 1027.4 784.2 1031.8 785 C1037.4 786 1042.9 786.6 1048.5 787 C1055.1 787.5 1061.8 788 1068.4 788 C1073.5 788 1078.7 788 1083.8 788 C1086.3 788 1088.8 790.6 1091.3 790.7 C1111.6 791.8 1131.9 791.5 1152.2 792 C1171.1 792.5 1190.1 793.8 1209 793.8 C1220.8 793.8 1232.6 793.8 1244.4 793.8 C1246.6 793.8 1248.8 795.4 1251 796 C1253.2 796.6 1255.4 797.2 1257.6 797.7 C1259.1 798 1260.5 798.3 1262 798.6 C1269.3 799.9 1276.7 800.5 1284 801.7 C1292.8 803.2 1301.7 807 1310.5 807 C1443.5 807 1576.6 807 1709.6 807 C1722.8 807 1736.1 795.4 1749.3 789.8 C1751.5 788.9 1753.8 788.1 1756 787 C1758.9 785.6 1761.8 782.9 1764.7 781.9 C1770.1 780.1 1775.6 779.3 1781 778.3 C1786.1 777.3 1791.3 775.7 1796.4 775.7 C1826.9 775.7 1857.5 776.3 1888 776.6" stroke="#5ec0e2" stroke-width="1.8" fill="none"/>
<circle cx="597.5" cy="805.2" r="2.3" fill="#293033" stroke="#8fd8f0" stroke-width="1.1"/>
<circle cx="609.4" cy="802.6" r="2.3" fill="#293033" stroke="#8fd8f0" stroke-width="1.1"/>
<circle cx="618.6" cy="800.8" r="2.3" fill="#293033" stroke="#8fd8f0" stroke-width="1.1"/>
<circle cx="652.6" cy="799.5" r="2.3" fill="#293033" stroke="#8fd8f0" stroke-width="1.1"/>
<circle cx="657.9" cy="797.7" r="2.3" fill="#293033" stroke="#8fd8f0" stroke-width="1.1"/>
<circle cx="662.7" cy="796.8" r="2.3" fill="#293033" stroke="#8fd8f0" stroke-width="1.1"/>
<circle cx="668" cy="796.8" r="2.3" fill="#293033" stroke="#8fd8f0" stroke-width="1.1"/>
<circle cx="699.8" cy="796.8" r="2.3" fill="#293033" stroke="#8fd8f0" stroke-width="1.1"/>
<circle cx="717" cy="793" r="2.3" fill="#293033" stroke="#8fd8f0" stroke-width="1.1"/>
<circle cx="719.6" cy="795" r="2.3" fill="#293033" stroke="#8fd8f0" stroke-width="1.1"/>
<circle cx="732" cy="796" r="2.3" fill="#293033" stroke="#8fd8f0" stroke-width="1.1"/>
<circle cx="744.3" cy="798.6" r="2.3" fill="#293033" stroke="#8fd8f0" stroke-width="1.1"/>
<circle cx="755.3" cy="801.7" r="2.3" fill="#293033" stroke="#8fd8f0" stroke-width="1.1"/>
<circle cx="755.3" cy="807" r="2.3" fill="#293033" stroke="#8fd8f0" stroke-width="1.1"/>
<circle cx="781.8" cy="807" r="2.3" fill="#293033" stroke="#8fd8f0" stroke-width="1.1"/>
<circle cx="797.2" cy="805.2" r="2.3" fill="#293033" stroke="#8fd8f0" stroke-width="1.1"/>
<circle cx="811.3" cy="800.8" r="2.3" fill="#293033" stroke="#8fd8f0" stroke-width="1.1"/>
<circle cx="842.2" cy="793.3" r="2.3" fill="#293033" stroke="#8fd8f0" stroke-width="1.1"/>
<circle cx="851" cy="789.8" r="2.3" fill="#293033" stroke="#8fd8f0" stroke-width="1.1"/>
<circle cx="865.6" cy="786.3" r="2.3" fill="#293033" stroke="#8fd8f0" stroke-width="1.1"/>
<circle cx="875.3" cy="782.7" r="2.3" fill="#293033" stroke="#8fd8f0" stroke-width="1.1"/>
<circle cx="893" cy="781" r="2.3" fill="#293033" stroke="#8fd8f0" stroke-width="1.1"/>
<circle cx="897.3" cy="779.7" r="2.3" fill="#293033" stroke="#8fd8f0" stroke-width="1.1"/>
<circle cx="908.3" cy="776" r="2.3" fill="#293033" stroke="#8fd8f0" stroke-width="1.1"/>
<circle cx="926" cy="773" r="2.3" fill="#293033" stroke="#8fd8f0" stroke-width="1.1"/>
<circle cx="934.8" cy="768.6" r="2.3" fill="#293033" stroke="#8fd8f0" stroke-width="1.1"/>
<circle cx="987.7" cy="770" r="2.3" fill="#293033" stroke="#8fd8f0" stroke-width="1.1"/>
<circle cx="996.5" cy="772.2" r="2.3" fill="#293033" stroke="#8fd8f0" stroke-width="1.1"/>
<circle cx="1009.7" cy="777.5" r="2.3" fill="#293033" stroke="#8fd8f0" stroke-width="1.1"/>
<circle cx="1018.6" cy="780" r="2.3" fill="#293033" stroke="#8fd8f0" stroke-width="1.1"/>
<circle cx="1031.8" cy="785" r="2.3" fill="#293033" stroke="#8fd8f0" stroke-width="1.1"/>
<circle cx="1048.5" cy="787" r="2.3" fill="#293033" stroke="#8fd8f0" stroke-width="1.1"/>
<circle cx="1068.4" cy="788" r="2.3" fill="#293033" stroke="#8fd8f0" stroke-width="1.1"/>
<circle cx="1083.8" cy="788" r="2.3" fill="#293033" stroke="#8fd8f0" stroke-width="1.1"/>
<circle cx="1091.3" cy="790.7" r="2.3" fill="#293033" stroke="#8fd8f0" stroke-width="1.1"/>
<circle cx="1152.2" cy="792" r="2.3" fill="#293033" stroke="#8fd8f0" stroke-width="1.1"/>
<circle cx="1209" cy="793.8" r="2.3" fill="#293033" stroke="#8fd8f0" stroke-width="1.1"/>
<circle cx="1244.4" cy="793.8" r="2.3" fill="#293033" stroke="#8fd8f0" stroke-width="1.1"/>
<circle cx="1251" cy="796" r="2.3" fill="#293033" stroke="#8fd8f0" stroke-width="1.1"/>
<circle cx="1257.6" cy="797.7" r="2.3" fill="#293033" stroke="#8fd8f0" stroke-width="1.1"/>
<circle cx="1262" cy="798.6" r="2.3" fill="#293033" stroke="#8fd8f0" stroke-width="1.1"/>
<circle cx="1284" cy="801.7" r="2.3" fill="#293033" stroke="#8fd8f0" stroke-width="1.1"/>
<circle cx="1310.5" cy="807" r="2.3" fill="#293033" stroke="#8fd8f0" stroke-width="1.1"/>
<circle cx="1709.6" cy="807" r="2.3" fill="#293033" stroke="#8fd8f0" stroke-width="1.1"/>
<circle cx="1749.3" cy="789.8" r="2.3" fill="#293033" stroke="#8fd8f0" stroke-width="1.1"/>
<circle cx="1756" cy="787" r="2.3" fill="#293033" stroke="#8fd8f0" stroke-width="1.1"/>
<circle cx="1764.7" cy="781.9" r="2.3" fill="#293033" stroke="#8fd8f0" stroke-width="1.1"/>
<circle cx="1781" cy="778.3" r="2.3" fill="#293033" stroke="#8fd8f0" stroke-width="1.1"/>
<circle cx="1796.4" cy="775.7" r="2.3" fill="#293033" stroke="#8fd8f0" stroke-width="1.1"/>
<rect x="581.8" y="813.5" width="293.6" height="20" rx="3" fill="#d4af6d"/>
<rect x="1864" y="88" width="25" height="735" fill="url(#shR)" opacity="0.8"/>
<rect x="1889" y="86" width="31" height="737" fill="#383838" />
<rect x="1889" y="86" width="1.2" height="737" fill="#222" />
<rect x="1917.5" y="86" width="2.5" height="737" fill="#4e4e4e" />
<path d="M1899 94 L1910 104 L1905 104.5 L1908 109.5 L1906 110.5 L1903 105.5 L1899.5 108.5 Z" fill="#ee8c37"/>
<path d="M1901.5 117.5 Q1904 117.5 1904.5 119.5 Q1905 117.5 1907.5 117.5 M1904.5 119.5 L1904.5 130.5 M1901.5 132.5 Q1904 132.5 1904.5 130.5 Q1905 132.5 1907.5 132.5" stroke="#7a7a7a" stroke-width="1.2" fill="none"/>
<path d="M1901 155 L1902 148 L1908 141.5 L1910.5 144 L1904.5 150.5 Z" stroke="#6a6a6a" stroke-width="1.2" fill="none"/>
<rect x="1901.5" y="169" width="6" height="11" rx="1" stroke="#6a6a6a" stroke-width="1.2" fill="none"/><circle cx="1904.5" cy="166.5" r="1" fill="#6a6a6a"/>
<path d="M1899 198 L1905.5 188.5 L1911 192 L1904.5 201.5 Z" stroke="#6a6a6a" stroke-width="1.2" fill="none"/><path d="M1899 198 L1904.5 201.5 L1903 203.5 L1898 200.5 Z" fill="#6a6a6a"/><path d="M1898 203.5 h14" stroke="#555" stroke-width="0.8"/>
<path d="M1898.5 210.5 L1906 218 L1903 221 Z" fill="#6a6a6a"/><path d="M1906 218 L1910.5 222.5 Q1911 225.5 1908 225 L1903 221 Z" fill="#7a7a7a"/>
<path d="M1898.5 238.5 h3 l4.5 -4 v14 l-4.5 -4 h-3 Z" fill="#5e5e5e"/><path d="M1907.5 236 a5 5 0 0 1 0 10" fill="#4a4a4a"/>
<path d="M1168.7 89.5 L1176.0 96.5 L1168.7 103.5 Z" fill="#56b9f4"/>
<rect x="251.4" y="123.5" width="94.5" height="53.5" fill="#e8897b" />
<rect x="251.4" y="149.5" width="94.5" height="1" fill="rgba(0,0,0,0.10)" />
<path d="M258.3 129.3 L268.5 136 L258.3 142.7 Z" fill="#a65a50"/>
<text x="273.8" y="140.9" font-size="12" fill="#5a302a" font-weight="normal" text-anchor="start" >S1</text>
<rect x="274.225" y="150.5" width="1" height="26.5" fill="rgba(120,60,50,0.22)" />
<rect x="298.15" y="150.5" width="1" height="26.5" fill="rgba(120,60,50,0.22)" />
<rect x="322.075" y="150.5" width="1" height="26.5" fill="rgba(120,60,50,0.22)" />
<path d="M251.5 159.0v7.2m1 -6.3v6.2m1 -5.9v5.2m1 -4.9v4.7m1 -4.6v4.1m1 -3.6v3.4m1 -2.7v2.0m1 -4.5v7.1m1 -6.9v6.5m1 -6.2v5.5m1 -4.7v4.0m1 -3.3v3.1m1 -2.8v2.3m1 -4.4v6.2m1 -5.6v5.1m1 -4.2v3.5m1 -2.9v2.5m1 -5.4v7.3m1 -6.2v5.8m1 -8.2v10.7m1 -10.3v9.8m1 -9.3v8.7m1 -8.3v8.1m1 -7.1v6.1m1 -6.3v5.9m1 -5.2v5.3m1 -5.8v5.5m1 -5.1v5.3m1 -5.1v4.7m1 -5.9v6.9m1 -6.2v5.7m1 -4.9v4.1m1 -3.3v2.7m1 -4.2v5.6m1 -5.2v4.7m1 -4.0v3.4m1 -2.8v2.3m1 -4.5v6.3m1 -5.8v5.4m1 -4.8v4.7m1 -4.5v4.0m1 -3.4v3.1m1 -2.6v2.2m1 -3.9v5.6m1 -5.2v4.6m1 -4.3v4.0m1 -3.1v2.5m1 -2.0v1.6m1 -3.7v5.5m1 -5.0v4.7m1 -4.2v3.9m1 -3.7v3.0m1 -2.8v2.7m1 -2.2v1.8m1 -4.1v5.8m1 -5.2v5.2m1 -7.7v10.0m1 -9.9v9.4m1 -8.8v8.6m1 -7.8v7.1m1 -6.9v6.5m1 -6.4v6.7m1 -6.6v6.1m1 -5.8v5.9m1 -6.1v6.1m1 -6.3v6.1m1 -4.5v3.7m1 -3.1v2.5m1 -3.9v5.2m1 -4.6v4.2m1 -3.6v3.0m1 -2.3v1.8m1 -3.9v5.7m1 -5.4v5.0m1 -4.1v3.4m1 -2.9v2.2m1 -4.5v6.2m1 -5.2v4.8m1 -4.3v3.9m1 -3.3v2.6m1 -4.2v5.5m1 -4.9v4.2m1 -3.4v3.0m1 -2.6v2.3m1 -4.3v6.7m1 -5.9v4.7m1 -4.3v3.9m1 -3.0v2.3m1 -3.6v5.0m1 -5.0v4.5m1 -4.1v3.9m1 -3.4v3.1m1 -2.8v2.6m1 -2.1v1.7m1 -3.4v4.6" fill="none" stroke="#5c2e28" stroke-opacity="0.95" stroke-width="1"/>
<rect x="347.1" y="123.5" width="94.5" height="53.5" fill="#e8897b" />
<rect x="347.1" y="149.5" width="94.5" height="1" fill="rgba(0,0,0,0.10)" />
<path d="M354 129.3 L364.2 136 L354 142.7 Z" fill="#a65a50"/>
<text x="369.5" y="140.9" font-size="12" fill="#5a302a" font-weight="normal" text-anchor="start" >S2</text>
<rect x="369.925" y="150.5" width="1" height="26.5" fill="rgba(120,60,50,0.22)" />
<rect x="393.85" y="150.5" width="1" height="26.5" fill="rgba(120,60,50,0.22)" />
<rect x="417.775" y="150.5" width="1" height="26.5" fill="rgba(120,60,50,0.22)" />
<path d="M347.5 157.6v10.1m1 -9.9v9.9m1 -9.2v8.2m1 -7.9v8.2m1 -7.5v7.0m1 -7.2v6.6m1 -6.3v6.4m1 -6.2v6.5m1 -6.1v5.5m1 -6.0v6.2m1 -6.0v6.2m1 -5.6v5.4m1 -4.6v3.6m1 -3.1v2.6m1 -4.8v6.7m1 -5.8v5.1m1 -4.9v4.9m1 -4.1v3.6m1 -3.5v3.1m1 -2.4v2.1m1 -4.0v5.3m1 -4.8v4.4m1 -3.7v3.4m1 -3.1v2.7m1 -2.4v2.1m1 -4.2v6.0m1 -5.3v4.6m1 -3.6v2.7m1 -4.2v5.4m1 -5.0v4.5m1 -3.8v3.9m1 -3.6v3.2m1 -2.7v2.3m1 -2.1v1.8m1 -3.9v5.4m1 -4.6v4.6m1 -4.2v3.9m1 -3.5v3.0m1 -2.5v2.4m1 -2.0v1.5m1 -3.0v4.4m1 -4.2v3.7m1 -3.1v2.7m1 -2.2v1.7m1 -4.5v6.8m1 -5.9v5.2m1 -4.9v4.9m1 -4.7v4.4m1 -4.0v3.3m1 -2.8v2.7m1 -4.7v6.2m1 -5.8v5.6m1 -5.1v4.6m1 -4.1v4.1m1 -3.7v3.2m1 -2.9v2.4m1 -4.5v6.1m1 -5.0v4.5m1 -4.1v3.6m1 -3.0v2.4m1 -3.8v5.2m1 -4.7v4.4m1 -3.9v3.4m1 -2.8v2.7m1 -2.4v2.1m1 -4.2v6.0m1 -5.3v5.1m1 -4.7v4.1m1 -3.8v3.5m1 -3.2v2.9m1 -2.6v2.3m1 -4.7v7.2m1 -6.9v6.2m1 -5.0v4.2m1 -3.9v3.1m1 -5.1v7.5m1 -6.8v5.8m1 -5.3v4.6m1 -3.5v2.8m1 -4.6v6.4m1 -5.9v5.4m1 -4.7v4.0m1 -3.7v3.4m1 -2.8v2.4m1 -4.3v5.7m1 -5.0v4.7m1 -4.3v3.8m1 -3.2v2.5m1 -2.1v1.8m1 -3.1v4.5m1 -4.1v3.5m1 -3.0v2.6m1 -2.0v1.7m1 -3.6v5.1" fill="none" stroke="#5c2e28" stroke-opacity="0.95" stroke-width="1"/>
<rect x="442.8" y="123.5" width="94.6" height="53.5" fill="#e8897b" />
<rect x="442.8" y="149.5" width="94.6" height="1" fill="rgba(0,0,0,0.10)" />
<path d="M449.7 129.3 L459.9 136 L449.7 142.7 Z" fill="#a65a50"/>
<text x="465.2" y="140.9" font-size="12" fill="#5a302a" font-weight="normal" text-anchor="start" >S3</text>
<rect x="465.65" y="150.5" width="1" height="26.5" fill="rgba(120,60,50,0.22)" />
<rect x="489.6" y="150.5" width="1" height="26.5" fill="rgba(120,60,50,0.22)" />
<rect x="513.55" y="150.5" width="1" height="26.5" fill="rgba(120,60,50,0.22)" />
<path d="M443.5 158.8v8.0m1 -7.7v7.8m1 -7.5v7.0m1 -6.4v6.0m1 -6.3v6.1m1 -6.0v6.1m1 -5.5v5.0m1 -6.5v7.5m1 -6.8v7.2m1 -7.9v7.9m1 -6.6v5.2m1 -4.2v3.8m1 -3.6v3.2m1 -2.4v2.0m1 -3.7v5.2m1 -5.0v4.7m1 -4.3v4.3m1 -3.8v3.3m1 -3.1v2.6m1 -2.1v1.8m1 -3.7v5.1m1 -4.6v4.3m1 -4.0v4.0m1 -3.6v3.0m1 -2.6v2.5m1 -2.2v1.8m1 -3.6v5.0m1 -5.0v4.7m1 -4.1v4.0m1 -3.6v3.2m1 -2.8v2.7m1 -2.6v2.2m1 -5.0v7.7m1 -7.4v6.6m1 -5.8v5.2m1 -4.5v3.9m1 -3.5v3.0m1 -2.4v1.9m1 -4.5v6.9m1 -6.4v5.5m1 -4.7v4.2m1 -3.5v3.5m1 -3.1v2.6m1 -4.1v5.0m1 -4.7v4.7m1 -4.1v3.4m1 -3.0v2.8m1 -2.4v2.1m1 -1.9v1.7m1 -3.9v6.0m1 -5.9v5.3m1 -5.0v4.6m1 -4.1v3.6m1 -3.2v2.9m1 -2.2v1.9m1 -6.1v9.4m1 -8.8v8.1m1 -7.0v6.6m1 -7.0v7.2m1 -6.9v6.9m1 -6.9v7.1m1 -6.6v6.4m1 -6.5v6.3m1 -6.1v5.7m1 -6.2v6.5m1 -7.1v7.8m1 -7.1v6.2m1 -5.6v5.7m1 -5.2v4.3m1 -3.7v3.7m1 -3.5v2.9m1 -2.2v1.9m1 -4.2v5.8m1 -5.7v5.6m1 -7.0v8.1m1 -7.9v8.2m1 -7.6v6.8m1 -7.1v7.5m1 -7.1v6.7m1 -6.8v6.7m1 -6.2v6.0m1 -6.0v5.9m1 -5.8v5.9m1 -5.9v6.2m1 -6.5v6.7m1 -6.3v5.2m1 -4.1v3.6m1 -3.1v2.4m1 -4.3v6.2m1 -6.0v5.4m1 -4.5v4.1m1 -3.5v2.9m1 -5.2v6.6m1 -5.9v5.7" fill="none" stroke="#5c2e28" stroke-opacity="0.95" stroke-width="1"/>
<circle cx="262.1" cy="213" r="4.9" fill="#8c8c8c"/>
<rect x="347.1" y="178.5" width="94.5" height="69" fill="#6bdca0" />
<rect x="347.1" y="203.5" width="94.5" height="1" fill="rgba(0,0,0,0.10)" />
<path d="M354 184.3 L364.2 191 L354 197.7 Z" fill="#3d9a69"/>
<text x="369.5" y="195.9" font-size="12" fill="#1f3b2b" font-weight="normal" text-anchor="start" >Mad</text>
<rect x="369.925" y="204.5" width="1" height="43" fill="rgba(30,110,70,0.25)" />
<rect x="393.85" y="204.5" width="1" height="43" fill="rgba(30,110,70,0.25)" />
<rect x="417.775" y="204.5" width="1" height="43" fill="rgba(30,110,70,0.25)" />
<rect x="442.8" y="178.5" width="94.6" height="69" fill="#6bdca0" />
<rect x="442.8" y="203.5" width="94.6" height="1" fill="rgba(0,0,0,0.10)" />
<path d="M449.7 184.3 L459.9 191 L449.7 197.7 Z" fill="#3d9a69"/>
<text x="465.2" y="195.9" font-size="12" fill="#1f3b2b" font-weight="normal" text-anchor="start" >Mad</text>
<rect x="465.65" y="204.5" width="1" height="43" fill="rgba(30,110,70,0.25)" />
<rect x="489.6" y="204.5" width="1" height="43" fill="rgba(30,110,70,0.25)" />
<rect x="513.55" y="204.5" width="1" height="43" fill="rgba(30,110,70,0.25)" />
<rect x="346.94" y="240.283" width="4.8905" height="2" fill="#2f7a52" />
<rect x="352.894" y="237.094" width="4.8905" height="2" fill="#2f7a52" />
<rect x="359.273" y="224.974" width="4.2526" height="2" fill="#2f7a52" />
<rect x="365.226" y="217.319" width="4.67787" height="2" fill="#2f7a52" />
<rect x="371.393" y="212.216" width="4.8905" height="2" fill="#2f7a52" />
<rect x="377.346" y="210.09" width="4.67787" height="2" fill="#2f7a52" />
<rect x="382.662" y="210.09" width="5.31576" height="2" fill="#2f7a52" />
<rect x="389.041" y="215.193" width="4.8905" height="2" fill="#2f7a52" />
<rect x="394.995" y="237.094" width="4.67787" height="2" fill="#2f7a52" />
<rect x="400.736" y="237.094" width="4.67787" height="2" fill="#2f7a52" />
<rect x="407.115" y="232.203" width="4.2526" height="2" fill="#2f7a52" />
<rect x="412.43" y="229.864" width="4.8905" height="2" fill="#2f7a52" />
<rect x="418.384" y="224.974" width="4.67787" height="2" fill="#2f7a52" />
<rect x="424.125" y="224.974" width="4.67787" height="2" fill="#2f7a52" />
<rect x="430.079" y="220.083" width="4.67787" height="2" fill="#2f7a52" />
<rect x="436.458" y="207.326" width="4.67787" height="2" fill="#2f7a52" />
<rect x="442.836" y="240.283" width="14.8841" height="2" fill="#2f7a52" />
<rect x="458.784" y="237.094" width="14.2462" height="2" fill="#2f7a52" />
<rect x="475.156" y="223.911" width="13.821" height="2" fill="#2f7a52" />
<rect x="491.104" y="215.831" width="13.821" height="2" fill="#2f7a52" />
<rect x="506.413" y="210.09" width="14.4589" height="2" fill="#2f7a52" />
<rect x="521.935" y="207.326" width="14.8841" height="2" fill="#2f7a52" />
<path d="M433.5 178 L433.5 189 Q433.5 192 436.1 192 Q438.7 192 438.7 189 L438.7 186.5" stroke="#0c0c0c" stroke-width="2.6" fill="none"/><path d="M433.5 178 L433.5 189 Q433.5 192 436.1 192 Q438.7 192 438.7 189 L438.7 186.5" stroke="#7a7a7a" stroke-width="0.6" fill="none"/>
<circle cx="262.1" cy="270" r="4.9" fill="#8c8c8c"/>
<circle cx="357.8" cy="270" r="4.9" fill="#8c8c8c"/>
<circle cx="453.5" cy="270" r="4.9" fill="#8c8c8c"/>
<rect x="257.3" y="335" width="10" height="10" fill="#444444" />
<rect x="448.7" y="335" width="10" height="10" fill="#444444" />
<rect x="347.1" y="293" width="94.5" height="94" fill="#f2c87b" />
<rect x="347.1" y="318.5" width="94.5" height="1" fill="rgba(0,0,0,0.10)" />
<path d="M354 298.8 L364.2 305.5 L354 312.2 Z" fill="#9f8452"/>
<text x="369.5" y="310.4" font-size="12" fill="#2e2516" font-weight="normal" text-anchor="start" >PS - Melo1</text>
<rect x="394.3" y="319" width="1" height="68" fill="rgba(110,85,40,0.22)" />
<rect x="347" y="352.5" width="95" height="1" fill="rgba(110,85,40,0.25)" />
<path d="M347.5 338.2v31.2m1 -34.3v28.5m1 -20.5v17.9m1 -15.9v14.8m1 -14.3v17.3m1 -22.1v22.2m1 -17.3v14.5m1 -15.4v14.2m1 -10.4v12.2m1 -14.2v10.2m1 -7.5v7.0m1 -9.7v9.4m1 -7.8v10.1m1 -8.0v5.8m1 -6.7v7.7m1 -6.7v4.8m1 -4.7v4.0m1 -4.6v5.8m1 -5.2v3.6m1 -3.8v4.7m1 -4.4v3.6m1 -3.6v3.8m1 -3.3v3.0m1 -2.5v2.3m1 -2.7v2.7m1 -2.2v2.2m1 -2.4v1.7m1 -1.2v1.2m1 -1.0v1.2m1 -1.3v1.0m1 -1.0v0.8m1 -0.6v0.6m1 -0.6v0.8m1 -0.8v0.6m1 -0.6v0.6m1 -18.8v30.7m1 -24.6v30.8m1 -38.4v37.5m1 -30.5v30.3m1 -29.6v21.8m1 -21.4v28.5m1 -31.8v26.0m1 -27.6v33.6m1 -27.5v28.1m1 -27.4v18.3m1 -20.1v26.8m1 -27.0v23.6m1 -22.0v19.3m1 -17.3v17.7m1 -18.9v22.1m1 -18.3v12.9m1 -17.8v19.7m1 -13.9v12.0m1 -14.4v16.0m1 -12.7v11.6m1 -13.7v10.3m1 -8.5v9.5m1 -7.8v6.2m1 -5.8v3.5m1 -1.7v0.6m1 -0.6v0.7m1 -0.8v0.6m1 -0.7v0.8m1 -0.7v0.6m1 -0.7v0.8m1 -0.7v0.7m1 -1.0v0.9m1 -0.9v0.8m1 -0.8v0.9m1 -0.8v0.8m1 -0.6v0.7m1 -18.3v27.4m1 -21.2v25.8m1 -23.6v18.2m1 -16.8v14.7m1 -12.9v14.3m1 -14.9v14.4m1 -11.5v7.2m1 -5.4v3.8m1 -2.1v0.8m1 -0.7v0.7m1 -0.7v0.7m1 -0.9v0.7m1 -21.8v34.0m1 -22.8v21.3m1 -26.6v34.6m1 -36.8v27.8m1 -21.3v27.3m1 -29.5v26.4m1 -20.0v14.3m1 -12.2v10.6m1 -10.0v10.1m1 -7.9v3.6m1 -1.7v0.6m1 -0.8v0.8" fill="none" stroke="#4b3b20" stroke-width="1.1"/>
<rect x="257.3" y="424" width="10" height="10" fill="#444444" />
<rect x="448.7" y="424" width="10" height="10" fill="#444444" />
<rect x="347.1" y="388.5" width="94.5" height="81" fill="#f2c87b" />
<rect x="347.1" y="413.5" width="94.5" height="1" fill="rgba(0,0,0,0.10)" />
<path d="M354 394.3 L364.2 401 L354 407.7 Z" fill="#9f8452"/>
<text x="369.5" y="405.9" font-size="12" fill="#2e2516" font-weight="normal" text-anchor="start" >S2</text>
<rect x="369.925" y="414.5" width="1" height="55" fill="rgba(110,85,40,0.22)" />
<rect x="393.85" y="414.5" width="1" height="55" fill="rgba(110,85,40,0.22)" />
<rect x="417.775" y="414.5" width="1" height="55" fill="rgba(110,85,40,0.22)" />
<path d="M347 464 L370.9 464 L370.9 437.9 L377 437.9 L377 449.4 L387 449.4 L387 464 L394.6 464 L394.6 450.8 L418.1 450.8 L418.1 464 L442 464 L442 469.5 L347 469.5Z" fill="#d9b36b"/>
<path d="M347 464.3 L370.9 464.3 M370.9 437.9 L377 437.9 M377 449.4 L387 449.4 M386.9 464.3 L394.6 464.3 L394.6 450.8 L418.1 450.8 M418.1 464.3 L442 464.3" stroke="#111" stroke-width="1.8" fill="none"/>
<rect x="251.4" y="471" width="94.5" height="62" fill="#57bde1" />
<rect x="251.4" y="497" width="94.5" height="1" fill="rgba(0,0,0,0.10)" />
<path d="M258.3 476.8 L268.5 483.5 L258.3 490.2 Z" fill="#2f84a8"/>
<text x="273.8" y="488.4" font-size="12" fill="#10303c" font-weight="normal" text-anchor="start" >PantherBs</text>
<rect x="274.225" y="498" width="1" height="35" fill="rgba(20,80,110,0.22)" />
<rect x="298.15" y="498" width="1" height="35" fill="rgba(20,80,110,0.22)" />
<rect x="322.075" y="498" width="1" height="35" fill="rgba(20,80,110,0.22)" />
<rect x="347.1" y="471" width="94.5" height="62" fill="#57bde1" />
<rect x="347.1" y="497" width="94.5" height="1" fill="rgba(0,0,0,0.10)" />
<path d="M354 476.8 L364.2 483.5 L354 490.2 Z" fill="#2f84a8"/>
<text x="369.5" y="488.4" font-size="12" fill="#10303c" font-weight="normal" text-anchor="start" >PantherBs</text>
<rect x="369.925" y="498" width="1" height="35" fill="rgba(20,80,110,0.22)" />
<rect x="393.85" y="498" width="1" height="35" fill="rgba(20,80,110,0.22)" />
<rect x="417.775" y="498" width="1" height="35" fill="rgba(20,80,110,0.22)" />
<rect x="442.8" y="471" width="94.6" height="62" fill="#57bde1" />
<rect x="442.8" y="497" width="94.6" height="1" fill="rgba(0,0,0,0.10)" />
<path d="M449.7 476.8 L459.9 483.5 L449.7 490.2 Z" fill="#2f84a8"/>
<text x="465.2" y="488.4" font-size="12" fill="#10303c" font-weight="normal" text-anchor="start" >PantherBs</text>
<rect x="465.65" y="498" width="1" height="35" fill="rgba(20,80,110,0.22)" />
<rect x="489.6" y="498" width="1" height="35" fill="rgba(20,80,110,0.22)" />
<rect x="513.55" y="498" width="1" height="35" fill="rgba(20,80,110,0.22)" />
<rect x="251.588" y="525.8" width="5.3817" height="2" fill="#1f6482" />
<rect x="256.97" y="519.222" width="5.97967" height="2" fill="#1f6482" />
<rect x="262.949" y="514.837" width="4.98306" height="2" fill="#1f6482" />
<rect x="267.932" y="510.452" width="3.98645" height="2" fill="#1f6482" />
<rect x="271.919" y="503.875" width="1.19593" height="2" fill="#1f6482" />
<rect x="272.915" y="519.222" width="6.37831" height="2" fill="#1f6482" />
<rect x="280.888" y="514.837" width="5.97967" height="2" fill="#1f6482" />
<rect x="286.868" y="510.452" width="2.98983" height="2" fill="#1f6482" />
<rect x="289.858" y="503.875" width="1.19593" height="2" fill="#1f6482" />
<rect x="290.456" y="498.892" width="1.39526" height="2" fill="#1f6482" />
<rect x="300.222" y="525.8" width="3.5878" height="2" fill="#1f6482" />
<rect x="304.807" y="519.222" width="4.98306" height="2" fill="#1f6482" />
<rect x="310.787" y="514.837" width="4.58441" height="2" fill="#1f6482" />
<rect x="315.77" y="510.452" width="2.98983" height="2" fill="#1f6482" />
<rect x="318.759" y="503.875" width="1.19593" height="2" fill="#1f6482" />
<rect x="320.753" y="519.222" width="5.97967" height="2" fill="#1f6482" />
<rect x="327.729" y="514.837" width="5.97967" height="2" fill="#1f6482" />
<rect x="333.709" y="498.892" width="2.98983" height="2" fill="#1f6482" />
<rect x="336.698" y="503.875" width="1.99322" height="2" fill="#1f6482" />
<rect x="338.692" y="510.452" width="1.99322" height="2" fill="#1f6482" />
<rect x="340.685" y="514.837" width="4.98306" height="2" fill="#1f6482" />
<rect x="347.063" y="525.8" width="12.5573" height="2" fill="#1f6482" />
<rect x="359.62" y="519.222" width="9.96612" height="2" fill="#1f6482" />
<rect x="371.181" y="514.837" width="8.37154" height="2" fill="#1f6482" />
<rect x="383.141" y="510.452" width="5.97967" height="2" fill="#1f6482" />
<rect x="388.522" y="503.875" width="2.59119" height="2" fill="#1f6482" />
<rect x="391.512" y="519.222" width="12.9559" height="2" fill="#1f6482" />
<rect x="407.458" y="514.837" width="9.96612" height="2" fill="#1f6482" />
<rect x="418.421" y="510.452" width="5.58102" height="2" fill="#1f6482" />
<rect x="424.4" y="503.875" width="3.98645" height="2" fill="#1f6482" />
<rect x="426.393" y="498.892" width="2.59119" height="2" fill="#1f6482" />
<rect x="430.38" y="519.222" width="4.98306" height="2" fill="#1f6482" />
<rect x="436.36" y="514.837" width="2.98983" height="2" fill="#1f6482" />
<rect x="438.353" y="510.452" width="2.59119" height="2" fill="#1f6482" />
<rect x="442.937" y="513.243" width="20.7295" height="2" fill="#1f6482" />
<rect x="466.657" y="514.837" width="24.118" height="2" fill="#1f6482" />
<rect x="491.173" y="510.452" width="11.9593" height="2" fill="#1f6482" />
<rect x="502.734" y="503.875" width="8.77018" height="2" fill="#1f6482" />
<rect x="508.116" y="498.892" width="4.98306" height="2" fill="#1f6482" />
<rect x="514.095" y="519.222" width="11.9593" height="2" fill="#1f6482" />
<rect x="526.055" y="514.837" width="6.97628" height="2" fill="#1f6482" />
<rect x="532.034" y="510.452" width="4.98306" height="2" fill="#1f6482" />
<rect x="251.4" y="534.5" width="94.5" height="95" fill="#57bde1" />
<rect x="251.4" y="560.5" width="94.5" height="1" fill="rgba(0,0,0,0.10)" />
<path d="M258.3 540.3 L268.5 547 L258.3 553.7 Z" fill="#2f84a8"/>
<text x="273.8" y="551.9" font-size="12" fill="#10303c" font-weight="normal" text-anchor="start" >S1</text>
<rect x="274.225" y="561.5" width="1" height="68" fill="rgba(20,80,110,0.20)" />
<rect x="298.15" y="561.5" width="1" height="68" fill="rgba(20,80,110,0.20)" />
<rect x="322.075" y="561.5" width="1" height="68" fill="rgba(20,80,110,0.20)" />
<rect x="347.1" y="534.5" width="94.5" height="95" fill="#57bde1" />
<rect x="347.1" y="560.5" width="94.5" height="1" fill="rgba(0,0,0,0.10)" />
<path d="M354 540.3 L364.2 547 L354 553.7 Z" fill="#2f84a8"/>
<text x="369.5" y="551.9" font-size="12" fill="#10303c" font-weight="normal" text-anchor="start" >Peak</text>
<rect x="369.925" y="561.5" width="1" height="68" fill="rgba(20,80,110,0.20)" />
<rect x="393.85" y="561.5" width="1" height="68" fill="rgba(20,80,110,0.20)" />
<rect x="417.775" y="561.5" width="1" height="68" fill="rgba(20,80,110,0.20)" />
<rect x="442.8" y="534.5" width="94.6" height="95" fill="#57bde1" />
<rect x="442.8" y="560.5" width="94.6" height="1" fill="rgba(0,0,0,0.10)" />
<path d="M449.7 540.3 L459.9 547 L449.7 553.7 Z" fill="#2f84a8"/>
<text x="465.2" y="551.9" font-size="12" fill="#10303c" font-weight="normal" text-anchor="start" >S3</text>
<rect x="465.65" y="561.5" width="1" height="68" fill="rgba(20,80,110,0.20)" />
<rect x="489.6" y="561.5" width="1" height="68" fill="rgba(20,80,110,0.20)" />
<rect x="513.55" y="561.5" width="1" height="68" fill="rgba(20,80,110,0.20)" />
<path d="M251.6 621.5 L255.6 605.5 L258 622.5 L261 585.2 L263.5 623.5 L265.5 610.5 L267.5 616.5 L273.9 615.5 L277.9 605.5 L280.3 623.5 L284.3 585.2 L286.9 623.5 L288.9 610.5 L290.9 616.5 L296.8 615.5 L301.8 605.5 L304.2 623.5 L307.8 585.2 L310.4 623.5 L312.4 610.5 L314.4 616.5 L320.4 615.5 L324.7 605.5 L328.7 621.5 L331.7 575.6 L335.3 587.6 L339.3 621.5 L346.1 623.5 L346.1 629.5 L251.6 629.5Z" fill="rgba(20,50,70,0.18)"/>
<path d="M251.6 621.5 L255.6 605.5 L258 622.5 L261 585.2 L263.5 623.5 L265.5 610.5 L267.5 616.5 L273.9 615.5 L277.9 605.5 L280.3 623.5 L284.3 585.2 L286.9 623.5 L288.9 610.5 L290.9 616.5 L296.8 615.5 L301.8 605.5 L304.2 623.5 L307.8 585.2 L310.4 623.5 L312.4 610.5 L314.4 616.5 L320.4 615.5 L324.7 605.5 L328.7 621.5 L331.7 575.6 L335.3 587.6 L339.3 621.5 L346.1 623.5" stroke="#0d0d0d" stroke-width="1.6" fill="none" stroke-linejoin="round"/>
<path d="M347 623 Q356 615 364 605.5 Q371 615 379.3 621 L385 575.5 Q400 582 414.5 620 Q420 624 442 624 L442 629.5 L347 629.5Z" fill="rgba(20,50,70,0.20)"/>
<path d="M347 623 Q356 615 364 605.5 Q371 615 379.3 621 L385 575.5 Q400 582 414.5 620 Q420 624 442 624" stroke="#0d0d0d" stroke-width="1.6" fill="none"/>
<path d="M442.2 624 L458.6 622.3 L467.4 619.6 L470.9 618.7 L472.7 615.2 L474.4 620.9 L476.2 615.2 L478.4 622.3 L485 624 L526.9 624 L529.1 618.7 L532.2 604.6 L534.4 612.1 L537.9 622.3 L537.9 629.5 L442.2 629.5Z" fill="rgba(20,50,70,0.18)"/>
<path d="M442.2 624 L458.6 622.3 L467.4 619.6 L470.9 618.7 L472.7 615.2 L474.4 620.9 L476.2 615.2 L478.4 622.3 L485 624 L526.9 624 L529.1 618.7 L532.2 604.6 L534.4 612.1 L537.9 622.3" stroke="#0d0d0d" stroke-width="1.6" fill="none" stroke-linejoin="round"/>
<rect x="251.4" y="631" width="94.5" height="98" fill="#57bde1" />
<rect x="251.4" y="657" width="94.5" height="1" fill="rgba(0,0,0,0.10)" />
<path d="M258.3 636.8 L268.5 643.5 L258.3 650.2 Z" fill="#2f84a8"/>
<text x="273.8" y="648.4" font-size="12" fill="#10303c" font-weight="normal" text-anchor="start" >Motion</text>
<rect x="274.225" y="658" width="1" height="71" fill="rgba(20,80,110,0.20)" />
<rect x="298.15" y="658" width="1" height="71" fill="rgba(20,80,110,0.20)" />
<rect x="322.075" y="658" width="1" height="71" fill="rgba(20,80,110,0.20)" />
<rect x="347.1" y="631" width="94.5" height="98" fill="#57bde1" />
<rect x="347.1" y="657" width="94.5" height="1" fill="rgba(0,0,0,0.10)" />
<path d="M354 636.8 L364.2 643.5 L354 650.2 Z" fill="#2f84a8"/>
<text x="369.5" y="648.4" font-size="12" fill="#10303c" font-weight="normal" text-anchor="start" >Motion</text>
<rect x="369.925" y="658" width="1" height="71" fill="rgba(20,80,110,0.20)" />
<rect x="393.85" y="658" width="1" height="71" fill="rgba(20,80,110,0.20)" />
<rect x="417.775" y="658" width="1" height="71" fill="rgba(20,80,110,0.20)" />
<rect x="442.8" y="631" width="94.6" height="98" fill="#b8dcf6" />
<rect x="442.8" y="657" width="94.6" height="1" fill="rgba(0,0,0,0.10)" />
<path d="M449.7 636.8 L459.9 643.5 L449.7 650.2 Z" fill="#7a8a99"/>
<text x="465.2" y="648.4" font-size="12" fill="#10303c" font-weight="normal" text-anchor="start" >Slower</text>
<rect x="465.65" y="658" width="1" height="71" fill="rgba(20,80,110,0.20)" />
<rect x="489.6" y="658" width="1" height="71" fill="rgba(20,80,110,0.20)" />
<rect x="513.55" y="658" width="1" height="71" fill="rgba(20,80,110,0.20)" />
<path d="M251 711.3 Q268 708 274.7 684 Q281 704 290 705.5 L346 711.3 L346 729 L251 729Z" fill="rgba(20,50,70,0.18)"/>
<path d="M251 711.3 Q268 708 274.7 684 Q281 704 290 705.5 L346 711.3" stroke="#0d0d0d" stroke-width="1.6" fill="none"/>
<path d="M347 711.3 L361.5 699.5 L366 715.5 L372 711.3 L385.5 711.3 L385.5 684 L388.1 711.8 L390.2 711.3 L390.2 684 L392.8 711.8 L394.9 711.3 L394.9 684 L397.5 711.8 L399.6 711.3 L399.6 684 L402.2 711.8 L404.3 711.3 L404.3 684 L406.9 711.8 L409 711.3 L409 684 L411.6 711.8 L413.7 711.3 L413.7 684 L416.3 711.8 L418.4 711.3 L418.4 684 L421 711.8 L423.1 711.3 L442 711.3 L442 729.5 L347 729.5Z" fill="rgba(20,50,70,0.16)"/>
<path d="M347 711.3 L361.5 699.5 L366 715.5 L372 711.3 L385.5 711.3 L385.5 684 L388.1 711.8 L390.2 711.3 L390.2 684 L392.8 711.8 L394.9 711.3 L394.9 684 L397.5 711.8 L399.6 711.3 L399.6 684 L402.2 711.8 L404.3 711.3 L404.3 684 L406.9 711.8 L409 711.3 L409 684 L411.6 711.8 L413.7 711.3 L413.7 684 L416.3 711.8 L418.4 711.3 L418.4 684 L421 711.8 L423.1 711.3 L442 711.3" stroke="#0d0d0d" stroke-width="1.5" fill="none" stroke-linejoin="round"/>
<path d="M443 711.3 L459.4 711.3 L459.4 683.5 L460.9 713.2 L464 708.3 L466.2 707.1 L467.8 710.9 L470.8 683.5 L472.3 713.2 L476.1 708.3 L478.4 707.1 L479.9 710.9 L483.4 683.5 L484.9 713.2 L488.5 708.3 L490.8 707.1 L492.2 710.9 L495.1 683.5 L496.7 713.2 L501.2 707.4 L502.8 711.3 L537.5 711.3 L537.5 729.5 L443 729.5Z" fill="rgba(60,90,120,0.10)"/>
<path d="M443 711.3 L459.4 711.3 L459.4 683.5 L460.9 713.2 L464 708.3 L466.2 707.1 L467.8 710.9 L470.8 683.5 L472.3 713.2 L476.1 708.3 L478.4 707.1 L479.9 710.9 L483.4 683.5 L484.9 713.2 L488.5 708.3 L490.8 707.1 L492.2 710.9 L495.1 683.5 L496.7 713.2 L501.2 707.4 L502.8 711.3 L537.5 711.3" stroke="#0d0d0d" stroke-width="1.5" fill="none" stroke-linejoin="round"/>
<rect x="520" y="123.5" width="18" height="700" fill="url(#shR)"/>
<rect x="257.3" y="766" width="10" height="10" fill="#444444" />
<rect x="353" y="766" width="10" height="10" fill="#444444" />
<rect x="448.7" y="766" width="10" height="10" fill="#444444" />
<rect x="347.1" y="813.5" width="94.5" height="9" fill="#f2c87b" />
<rect x="347.1" y="838.5" width="94.5" height="1" fill="rgba(0,0,0,0.10)" />
<path d="M354 819.3 L364.2 826 L354 832.7 Z" fill="#9f8452"/>
<text x="369.5" y="830.9" font-size="12" fill="#2e2516" font-weight="normal" text-anchor="start" >Synth</text>
</svg></body></html>
